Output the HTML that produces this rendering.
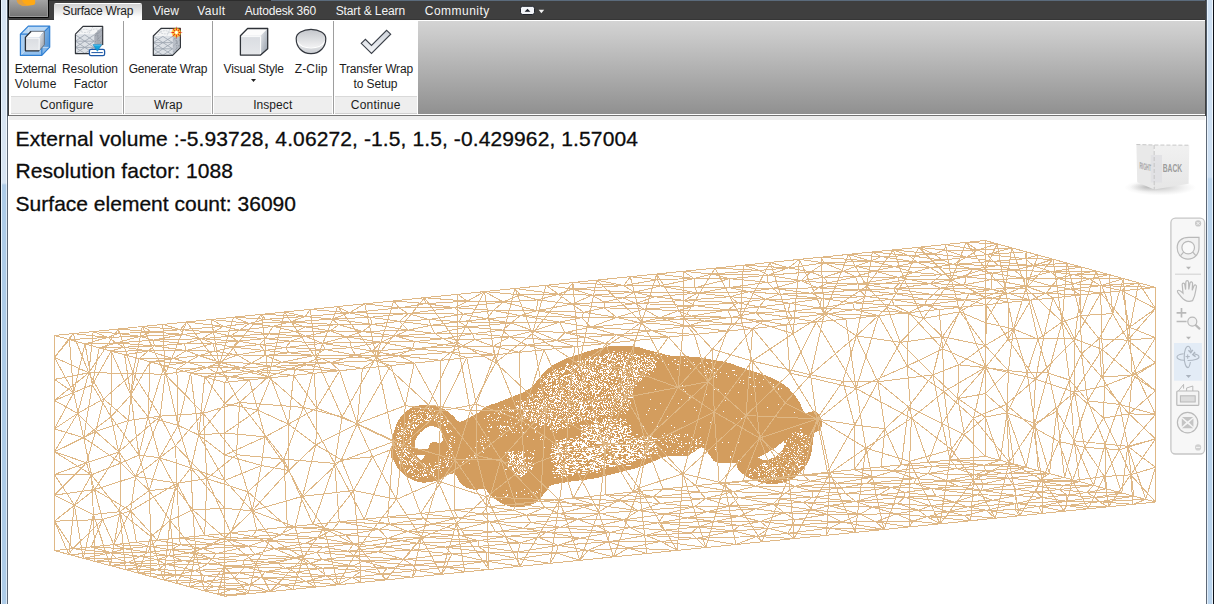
<!DOCTYPE html>
<html lang="en">
<head>
<meta charset="utf-8">
<title>Surface Wrap</title>
<style>
html,body{margin:0;padding:0;}
body{width:1214px;height:604px;overflow:hidden;background:#fff;position:relative;font-family:"Liberation Sans",sans-serif;}
.abs{position:absolute;}
#win{position:absolute;left:0;top:0;width:1214px;height:604px;overflow:hidden;background:#fff;}
/* window frame */
#bl{left:0;top:0;width:7px;height:604px;background:linear-gradient(#d7e4f2 0,#d7e4f2 183px,#aecce8 185px,#aecce8 604px);}
#bl:before{content:"";position:absolute;left:0;top:0;width:1px;height:604px;background:#0e121a;}
#bl:after{content:"";position:absolute;left:1px;top:0;width:1px;height:604px;background:#eaf4fc;}
#bl3{left:6px;top:0;width:1px;height:604px;background:linear-gradient(#f0f6fc 0,#f0f6fc 183px,#dceaf7 185px,#dceaf7 604px);}
#bl2{left:7px;top:0;width:1px;height:604px;background:linear-gradient(#4e5a68 0,#4e5a68 116px,#5d6876 117px,#5d6876 604px);}
#bl4{left:8px;top:0;width:1px;height:116px;background:linear-gradient(#050505 0,#050505 18px,#3f3f3f 18px,#3f3f3f 100%);}
#br{left:1207px;top:0;width:7px;height:604px;background:linear-gradient(#cddff2 0,#cddff2 177px,#b9d3ec 179px,#b9d3ec 604px);}
#br:before{content:"";position:absolute;left:0;top:0;width:1px;height:604px;background:linear-gradient(#e8f2fc 0,#e8f2fc 177px,#e2eefa 179px,#e2eefa 604px);}
#br:after{content:"";position:absolute;right:0;top:0;width:1px;height:604px;background:#0e121a;}
#br3{left:1212px;top:0;width:1px;height:604px;background:linear-gradient(#eef6fd 0,#eef6fd 177px,#e8f3fc 179px,#e8f3fc 604px);}
#br2{left:1206px;top:0;width:1px;height:604px;background:linear-gradient(#4e5a68 0,#4e5a68 116px,#5d6876 117px,#5d6876 604px);}
#br4{left:1205px;top:0;width:1px;height:116px;background:#3f3f3f;}
/* tab bar */
#tabbar{left:8px;top:0;width:1198px;height:20px;background:#3f3f3f;}
#tabtop0{left:49px;top:0;width:222px;height:1px;background:#2c2c2c;}
#tabtop{left:271px;top:0;width:936px;height:1px;background:#5b6b7c;}
#tabbot{left:9px;top:19px;width:1196px;height:1px;background:#363636;}
#appbtn{left:8px;top:0;width:39px;height:17px;background:linear-gradient(#a4a4a4,#737373);border:1px solid #050505;border-top:none;border-radius:0 0 2px 2px;box-shadow:inset 1px 0 0 #9a9a9a,inset -1px 0 0 #9a9a9a,inset 0 -1px 0 #9a9a9a;}
#tab1{left:54px;top:3px;width:88px;height:18px;background:linear-gradient(#ffffff 0,#ffffff 1px,#d4d4d4 1.5px,#dedede 5px,#efefef 10px,#fdfdfd 14px,#ffffff 100%);border-radius:2px 2px 0 0;}
.tabt{position:absolute;top:3px;height:14px;line-height:14px;font-size:12px;color:#f4f4f4;white-space:nowrap;}
/* ribbon */
#ribbon{left:9px;top:20px;width:1196px;height:94px;background:#fff;}
#ribgrad{left:418px;top:21px;width:787px;height:93px;background:linear-gradient(#d4d4d4,#909090);}
#ribline{left:8px;top:115px;width:1198px;height:1px;background:#757575;}
#ribband{left:9px;top:116px;width:1196px;height:4px;background:#eeeeee;}
.ptitle{position:absolute;top:96px;height:18px;background:#eeeeee;border-top:1px solid #d9d9d9;border-bottom:1px solid #d0d0d0;box-sizing:border-box;}
.psep{position:absolute;top:21px;width:1px;height:93px;background:#9e9e9e;}
.lbl{position:absolute;font-size:12px;line-height:15px;color:#1c1c1c;white-space:nowrap;text-align:center;transform:translateX(-50%);}
.tx{position:absolute;white-space:pre;}
</style>
</head>
<body>
<div id="win">
<!-- viewport scene -->
<svg class="abs" id="scene" style="left:0;top:0" width="1214" height="604" viewBox="0 0 1214 604">
<g id="car">
<path d="M391.2 457.1C390.9 454.6 391.4 448.8 391.8 444.7C392.2 440.6 392.8 436.0 393.7 432.3C394.6 428.6 395.8 425.4 397.4 422.3C399.0 419.2 401.1 416.1 403.6 413.6C406.1 411.1 409.2 408.8 412.3 407.4C415.4 405.9 419.0 405.3 422.3 404.9C425.6 404.5 429.1 404.8 432.2 405.2C435.3 405.6 438.2 406.3 440.9 407.4C443.6 408.5 446.0 410.1 448.3 411.8C450.6 413.5 452.7 415.8 454.5 417.4C456.3 419.0 457.0 421.3 458.9 421.7C460.8 422.1 463.5 420.7 465.7 419.8C467.9 418.9 469.6 417.3 471.9 416.1C474.2 414.9 477.2 413.9 479.4 412.4C481.6 410.8 482.0 408.4 485.0 406.8C488.0 405.2 493.3 404.2 497.4 402.7C501.5 401.2 505.7 399.4 509.8 397.7C514.0 396.0 519.0 394.2 522.3 392.7C525.6 391.1 527.4 390.1 529.7 388.4C532.0 386.6 533.8 384.5 535.9 382.2C538.0 379.9 540.0 377.0 542.1 374.7C544.2 372.4 546.2 370.2 548.3 368.5C550.4 366.8 551.8 365.8 554.5 364.2C557.2 362.6 560.8 360.8 564.5 359.2C568.2 357.6 572.5 356.3 576.9 354.9C581.2 353.4 586.2 351.8 590.6 350.5C595.0 349.2 598.9 348.2 603.0 347.4C607.1 346.6 610.1 345.8 615.4 345.6C620.7 345.5 629.7 345.8 635.0 346.5C640.3 347.2 643.3 348.8 647.4 349.9C651.5 351.0 655.6 352.0 659.8 353.0C663.9 354.0 667.7 355.5 672.3 356.1C676.9 356.7 682.7 356.2 687.2 356.4C691.8 356.6 695.5 356.8 699.6 357.4C703.7 358.0 707.9 359.1 712.0 359.8C716.1 360.5 720.6 360.8 724.4 361.7C728.2 362.6 731.2 363.7 735.0 365.0C738.8 366.3 743.3 368.1 747.4 369.5C751.5 370.9 755.4 371.8 759.5 373.2C763.6 374.6 767.8 376.0 772.0 378.0C776.2 380.0 781.4 382.6 784.8 385.0C788.1 387.4 790.0 390.1 792.1 392.3C794.2 394.6 795.7 396.4 797.1 398.5C798.5 400.6 799.9 402.8 800.8 404.7C801.7 406.6 801.9 408.3 802.7 409.7C803.5 411.1 804.4 412.5 805.8 412.8C807.1 413.1 809.1 411.8 810.8 411.6C812.4 411.4 814.2 411.1 815.7 411.6C817.2 412.1 818.6 413.4 819.5 414.7C820.4 416.0 820.9 417.8 821.3 419.7C821.7 421.6 822.0 424.0 821.7 425.9C821.4 427.8 820.7 429.7 819.5 430.8C818.3 431.9 815.6 430.8 814.5 432.7C813.4 434.6 813.4 439.3 812.9 442.4C812.4 445.4 812.3 448.1 811.7 451.0C811.1 453.9 810.5 456.8 809.2 459.7C808.0 462.6 806.3 465.7 804.2 468.4C802.1 471.1 799.3 473.8 796.8 475.9C794.3 478.0 792.2 479.6 789.3 480.8C786.4 482.0 782.7 482.8 779.4 483.3C776.1 483.8 772.7 484.2 769.4 484.0C766.1 483.8 762.8 483.0 759.5 482.1C756.2 481.2 752.5 479.8 749.6 478.4C746.7 476.9 744.2 475.2 742.1 473.4C740.0 471.6 738.4 469.6 737.2 467.8C736.0 466.0 738.0 463.6 734.7 462.8C731.4 462.0 721.2 463.7 717.3 462.8C713.4 461.9 713.0 459.4 711.1 457.3C709.2 455.2 707.8 452.1 706.1 450.4C704.4 448.7 703.4 446.9 701.1 447.3C698.8 447.7 695.2 451.4 692.5 452.9C689.8 454.4 689.1 455.6 685.0 456.1C680.9 456.7 671.8 455.9 667.9 456.2C664.0 456.5 664.0 457.2 661.7 458.0C659.4 458.8 656.7 460.1 654.2 461.1C651.7 462.1 650.1 462.9 646.8 464.2C643.5 465.4 638.4 467.4 634.3 468.6C630.1 469.9 626.0 470.7 621.9 471.7C617.8 472.7 613.6 473.8 609.5 474.8C605.4 475.8 601.2 477.1 597.1 477.9C593.0 478.7 589.9 479.1 584.7 479.8C579.5 480.5 571.6 481.4 566.0 482.3C560.4 483.2 554.2 484.2 551.1 485.4C548.0 486.6 549.0 487.7 547.4 489.7C545.8 491.7 543.3 495.0 541.2 497.2C539.1 499.4 538.3 501.4 535.0 503.0C531.7 504.6 525.7 506.5 521.6 507.1C517.5 507.7 513.7 507.1 510.4 506.5C507.1 505.9 504.4 504.8 501.7 503.4C499.0 502.0 496.6 500.2 494.3 498.4C492.0 496.6 489.6 494.4 488.1 492.8C486.7 491.2 487.9 489.6 485.6 489.1C483.3 488.6 477.5 489.9 474.4 489.7C471.3 489.5 469.3 488.8 467.0 487.8C464.7 486.8 462.4 485.2 460.7 483.5C459.0 481.8 458.0 478.9 457.0 477.3C456.0 475.7 455.7 474.1 454.5 473.6C453.3 473.1 451.2 473.7 449.6 474.2C448.0 474.7 446.7 475.7 444.6 476.7C442.5 477.7 439.9 479.5 437.2 480.4C434.5 481.3 431.4 482.0 428.5 482.3C425.6 482.6 422.7 482.8 419.8 482.3C416.9 481.8 413.8 480.5 411.1 479.1C408.4 477.8 405.9 476.1 403.6 474.2C401.3 472.2 399.0 469.8 397.4 467.4C395.8 465.0 394.7 461.6 393.7 459.9C392.7 458.2 391.5 459.6 391.2 457.1Z" fill="#d39d5e" shape-rendering="crispEdges"/>
<path d="M431.6 426.0C432.9 426.2 437.1 427.1 438.4 427.9C439.7 428.7 441.0 430.4 441.5 432.3C442.0 434.2 443.3 440.9 442.1 442.2C440.9 443.5 433.9 441.9 432.2 442.2C430.5 442.5 430.4 443.8 429.7 444.7C429.0 445.6 429.0 448.5 427.2 449.0C425.4 449.5 417.7 449.3 416.0 448.4C414.3 447.5 414.6 443.9 414.8 442.2C415.0 440.5 416.1 437.7 417.3 436.0C418.5 434.3 422.0 431.0 423.5 429.8C425.0 428.6 427.4 427.2 428.5 426.7C429.6 426.2 430.3 425.8 431.6 426.0ZM417.3 455.2L424.7 455.2L423.5 458.3L420.4 460.2L417.5 457.1ZM758.3 457.3C759.3 456.6 764.5 454.3 767.0 452.9C769.5 451.5 774.7 448.3 776.9 446.7C779.1 445.1 782.7 441.2 783.7 441.1C784.7 441.0 784.7 444.6 784.3 446.1C783.9 447.6 781.8 450.9 780.6 452.3C779.4 453.7 777.6 455.5 775.6 456.6C773.6 457.7 767.8 460.1 765.7 460.4C763.6 460.7 760.5 458.9 759.5 458.5C758.5 458.1 757.3 458.0 758.3 457.3Z" fill="#fff" shape-rendering="crispEdges"/>
<path d="M613 351.5h2M622 351.5h1M619 352.5h1M626 352.5h1M608 353.5h1M612 353.5h2M617 353.5h1M622 353.5h1M629 353.5h1M644 353.5h1M654 353.5h1M657 353.5h1M605 354.5h3M610 354.5h1M612 354.5h1M617 354.5h1M619 354.5h2M625 354.5h2M632 354.5h1M634 354.5h2M650 354.5h1M604 355.5h1M606 355.5h2M609 355.5h2M612 355.5h1M614 355.5h2M621 355.5h2M625 355.5h1M628 355.5h1M631 355.5h1M633 355.5h1M637 355.5h1M641 355.5h2M645 355.5h1M661 355.5h1M589 356.5h1M596 356.5h1M599 356.5h1M603 356.5h1M605 356.5h1M608 356.5h1M611 356.5h2M614 356.5h2M621 356.5h1M627 356.5h2M632 356.5h1M634 356.5h6M649 356.5h1M660 356.5h1M667 356.5h1M590 357.5h1M594 357.5h2M599 357.5h3M603 357.5h2M608 357.5h1M611 357.5h1M613 357.5h1M615 357.5h1M618 357.5h2M621 357.5h1M623 357.5h1M628 357.5h1M630 357.5h1M636 357.5h1M639 357.5h1M644 357.5h1M647 357.5h3M651 357.5h2M657 357.5h1M585 358.5h1M589 358.5h1M594 358.5h1M596 358.5h1M600 358.5h1M607 358.5h2M610 358.5h1M616 358.5h2M622 358.5h2M635 358.5h1M641 358.5h1M644 358.5h2M658 358.5h1M684 358.5h1M580 359.5h1M587 359.5h1M590 359.5h1M593 359.5h1M599 359.5h3M607 359.5h4M617 359.5h1M619 359.5h1M621 359.5h2M626 359.5h2M636 359.5h1M641 359.5h2M645 359.5h3M649 359.5h1M652 359.5h2M674 359.5h2M582 360.5h1M586 360.5h2M589 360.5h5M596 360.5h2M599 360.5h2M605 360.5h1M609 360.5h1M611 360.5h4M616 360.5h1M623 360.5h1M625 360.5h1M631 360.5h1M633 360.5h1M638 360.5h2M645 360.5h1M647 360.5h1M650 360.5h2M653 360.5h2M573 361.5h3M577 361.5h2M580 361.5h1M582 361.5h1M585 361.5h1M589 361.5h1M591 361.5h2M596 361.5h1M598 361.5h3M604 361.5h1M607 361.5h1M614 361.5h2M623 361.5h1M626 361.5h2M630 361.5h1M632 361.5h1M636 361.5h1M638 361.5h1M642 361.5h2M645 361.5h1M648 361.5h3M655 361.5h2M662 361.5h1M672 361.5h1M678 361.5h1M687 361.5h1M576 362.5h1M579 362.5h2M582 362.5h1M585 362.5h1M589 362.5h1M593 362.5h1M596 362.5h1M599 362.5h2M602 362.5h1M606 362.5h1M618 362.5h2M621 362.5h1M623 362.5h3M631 362.5h4M636 362.5h1M638 362.5h1M641 362.5h1M647 362.5h1M650 362.5h3M655 362.5h1M684 362.5h1M693 362.5h1M706 362.5h1M711 362.5h1M567 363.5h1M577 363.5h1M579 363.5h1M583 363.5h1M585 363.5h1M591 363.5h1M593 363.5h1M595 363.5h2M601 363.5h5M607 363.5h1M611 363.5h2M614 363.5h1M617 363.5h3M621 363.5h2M624 363.5h2M633 363.5h1M636 363.5h1M639 363.5h1M641 363.5h1M652 363.5h1M675 363.5h1M700 363.5h1M707 363.5h1M566 364.5h3M578 364.5h1M580 364.5h1M583 364.5h1M585 364.5h1M589 364.5h1M592 364.5h1M596 364.5h3M607 364.5h1M609 364.5h2M612 364.5h1M616 364.5h1M620 364.5h1M624 364.5h3M633 364.5h1M637 364.5h2M640 364.5h2M644 364.5h1M646 364.5h2M650 364.5h1M652 364.5h3M668 364.5h1M677 364.5h2M692 364.5h1M694 364.5h1M567 365.5h1M571 365.5h1M574 365.5h2M582 365.5h1M585 365.5h1M587 365.5h2M593 365.5h1M595 365.5h2M601 365.5h2M607 365.5h4M613 365.5h2M620 365.5h2M624 365.5h1M628 365.5h3M632 365.5h1M634 365.5h3M638 365.5h2M642 365.5h1M644 365.5h1M648 365.5h1M651 365.5h1M654 365.5h1M665 365.5h1M684 365.5h1M686 365.5h2M566 366.5h1M572 366.5h2M575 366.5h2M579 366.5h3M584 366.5h1M587 366.5h1M589 366.5h1M595 366.5h1M598 366.5h1M600 366.5h2M603 366.5h1M607 366.5h3M611 366.5h1M623 366.5h2M626 366.5h1M629 366.5h1M631 366.5h1M633 366.5h3M637 366.5h1M639 366.5h1M641 366.5h1M643 366.5h1M645 366.5h1M649 366.5h2M653 366.5h1M655 366.5h1M704 366.5h1M712 366.5h1M720 366.5h1M561 367.5h1M565 367.5h1M569 367.5h1M573 367.5h3M580 367.5h3M584 367.5h2M588 367.5h1M590 367.5h1M592 367.5h2M595 367.5h1M602 367.5h2M605 367.5h1M607 367.5h2M610 367.5h2M614 367.5h1M617 367.5h2M620 367.5h1M623 367.5h5M629 367.5h2M634 367.5h1M638 367.5h2M645 367.5h1M647 367.5h2M651 367.5h3M655 367.5h1M700 367.5h1M559 368.5h1M565 368.5h3M571 368.5h1M574 368.5h1M576 368.5h1M578 368.5h1M581 368.5h1M589 368.5h2M592 368.5h1M597 368.5h1M603 368.5h4M608 368.5h1M610 368.5h1M614 368.5h1M620 368.5h2M626 368.5h2M630 368.5h1M632 368.5h1M637 368.5h1M643 368.5h1M652 368.5h1M690 368.5h1M708 368.5h1M714 368.5h1M555 369.5h1M565 369.5h1M567 369.5h4M575 369.5h1M577 369.5h2M581 369.5h1M583 369.5h5M592 369.5h2M600 369.5h3M609 369.5h1M611 369.5h1M618 369.5h1M622 369.5h3M633 369.5h2M637 369.5h1M640 369.5h2M644 369.5h2M647 369.5h4M652 369.5h1M677 369.5h1M697 369.5h1M710 369.5h1M712 369.5h1M717 369.5h1M554 370.5h1M557 370.5h1M562 370.5h3M569 370.5h1M571 370.5h1M577 370.5h1M581 370.5h5M587 370.5h4M593 370.5h1M595 370.5h1M598 370.5h1M600 370.5h1M604 370.5h1M606 370.5h3M610 370.5h2M614 370.5h1M620 370.5h1M623 370.5h1M625 370.5h1M632 370.5h2M635 370.5h3M640 370.5h3M644 370.5h1M646 370.5h1M648 370.5h1M651 370.5h1M706 370.5h1M711 370.5h1M732 370.5h3M552 371.5h1M554 371.5h1M556 371.5h2M560 371.5h2M563 371.5h2M570 371.5h1M573 371.5h1M578 371.5h2M582 371.5h1M584 371.5h2M587 371.5h2M590 371.5h2M598 371.5h1M600 371.5h3M606 371.5h3M610 371.5h1M613 371.5h1M615 371.5h2M619 371.5h1M621 371.5h1M623 371.5h4M629 371.5h2M634 371.5h4M643 371.5h2M653 371.5h1M555 372.5h1M557 372.5h1M559 372.5h1M561 372.5h3M572 372.5h1M579 372.5h2M584 372.5h1M586 372.5h1M590 372.5h6M599 372.5h4M604 372.5h2M607 372.5h3M612 372.5h2M615 372.5h1M619 372.5h3M628 372.5h1M630 372.5h1M633 372.5h1M636 372.5h1M638 372.5h1M642 372.5h1M645 372.5h2M704 372.5h2M707 372.5h1M709 372.5h1M711 372.5h1M714 372.5h1M720 372.5h1M549 373.5h1M553 373.5h1M555 373.5h1M562 373.5h1M574 373.5h1M576 373.5h1M579 373.5h1M582 373.5h1M586 373.5h2M589 373.5h1M591 373.5h1M593 373.5h3M597 373.5h1M602 373.5h1M608 373.5h1M614 373.5h1M619 373.5h3M625 373.5h2M631 373.5h1M633 373.5h2M636 373.5h1M638 373.5h1M642 373.5h1M645 373.5h1M648 373.5h1M726 373.5h1M749 373.5h1M547 374.5h1M549 374.5h1M553 374.5h2M556 374.5h3M568 374.5h3M573 374.5h1M576 374.5h1M580 374.5h1M582 374.5h1M585 374.5h2M588 374.5h2M591 374.5h3M596 374.5h1M598 374.5h1M602 374.5h1M604 374.5h1M606 374.5h2M614 374.5h2M621 374.5h1M623 374.5h2M627 374.5h1M633 374.5h2M636 374.5h1M649 374.5h1M734 374.5h1M757 374.5h1M548 375.5h3M552 375.5h3M560 375.5h1M564 375.5h5M572 375.5h3M583 375.5h1M587 375.5h1M590 375.5h1M592 375.5h1M594 375.5h1M597 375.5h1M600 375.5h1M603 375.5h2M608 375.5h1M611 375.5h5M619 375.5h1M621 375.5h1M623 375.5h1M625 375.5h1M627 375.5h1M632 375.5h1M634 375.5h2M637 375.5h4M705 375.5h1M716 375.5h1M736 375.5h1M543 376.5h1M547 376.5h1M555 376.5h1M558 376.5h1M563 376.5h2M566 376.5h1M571 376.5h1M574 376.5h1M576 376.5h1M578 376.5h1M582 376.5h2M586 376.5h4M594 376.5h1M596 376.5h1M602 376.5h1M605 376.5h1M607 376.5h1M609 376.5h2M615 376.5h1M617 376.5h3M621 376.5h2M624 376.5h4M634 376.5h4M642 376.5h1M644 376.5h1M714 376.5h1M728 376.5h1M740 376.5h1M548 377.5h1M550 377.5h1M553 377.5h5M561 377.5h2M569 377.5h2M572 377.5h4M579 377.5h1M582 377.5h3M587 377.5h1M589 377.5h2M592 377.5h1M601 377.5h3M606 377.5h2M611 377.5h1M613 377.5h1M618 377.5h1M621 377.5h1M623 377.5h1M625 377.5h1M627 377.5h1M630 377.5h3M639 377.5h1M716 377.5h1M749 377.5h2M541 378.5h1M544 378.5h1M547 378.5h1M551 378.5h2M555 378.5h3M560 378.5h4M566 378.5h1M568 378.5h1M573 378.5h2M576 378.5h1M579 378.5h1M582 378.5h3M587 378.5h1M593 378.5h1M596 378.5h1M598 378.5h1M601 378.5h1M603 378.5h1M606 378.5h1M611 378.5h3M624 378.5h2M627 378.5h3M632 378.5h1M634 378.5h3M639 378.5h3M755 378.5h1M543 379.5h1M545 379.5h2M551 379.5h1M553 379.5h1M562 379.5h1M564 379.5h1M566 379.5h2M571 379.5h3M576 379.5h1M584 379.5h1M586 379.5h4M593 379.5h1M599 379.5h1M601 379.5h2M607 379.5h2M616 379.5h2M622 379.5h3M632 379.5h1M636 379.5h1M638 379.5h2M641 379.5h1M763 379.5h1M544 380.5h4M550 380.5h2M553 380.5h1M556 380.5h3M560 380.5h1M565 380.5h5M571 380.5h1M573 380.5h5M582 380.5h3M586 380.5h2M590 380.5h2M595 380.5h2M599 380.5h1M604 380.5h3M608 380.5h2M619 380.5h1M622 380.5h1M624 380.5h1M627 380.5h2M635 380.5h1M638 380.5h1M640 380.5h1M740 380.5h1M743 380.5h1M543 381.5h1M545 381.5h1M547 381.5h1M549 381.5h3M556 381.5h1M560 381.5h1M562 381.5h1M567 381.5h1M569 381.5h1M572 381.5h1M574 381.5h2M578 381.5h1M580 381.5h1M582 381.5h1M584 381.5h1M592 381.5h2M595 381.5h1M597 381.5h1M600 381.5h2M608 381.5h1M611 381.5h2M616 381.5h1M619 381.5h1M624 381.5h1M627 381.5h2M630 381.5h1M632 381.5h1M638 381.5h1M754 381.5h1M546 382.5h2M556 382.5h2M562 382.5h1M565 382.5h1M569 382.5h2M572 382.5h2M575 382.5h1M577 382.5h1M580 382.5h1M582 382.5h1M585 382.5h1M590 382.5h2M593 382.5h1M595 382.5h3M603 382.5h1M612 382.5h1M615 382.5h2M625 382.5h2M628 382.5h3M633 382.5h1M635 382.5h1M739 382.5h1M759 382.5h1M770 382.5h1M540 383.5h1M542 383.5h1M546 383.5h1M551 383.5h1M556 383.5h1M561 383.5h1M565 383.5h1M569 383.5h1M572 383.5h1M575 383.5h2M579 383.5h1M581 383.5h1M583 383.5h2M586 383.5h2M591 383.5h2M594 383.5h1M597 383.5h1M599 383.5h1M602 383.5h1M604 383.5h2M609 383.5h1M619 383.5h1M623 383.5h2M628 383.5h2M633 383.5h1M743 383.5h1M547 384.5h1M549 384.5h3M558 384.5h1M560 384.5h1M564 384.5h1M568 384.5h1M570 384.5h1M573 384.5h1M577 384.5h1M581 384.5h2M585 384.5h2M589 384.5h1M592 384.5h1M594 384.5h1M598 384.5h4M604 384.5h3M613 384.5h1M618 384.5h1M620 384.5h2M623 384.5h1M630 384.5h1M632 384.5h2M750 384.5h1M773 384.5h1M545 385.5h2M548 385.5h2M554 385.5h1M556 385.5h3M561 385.5h1M563 385.5h1M566 385.5h4M572 385.5h1M574 385.5h1M578 385.5h2M581 385.5h1M583 385.5h1M595 385.5h1M598 385.5h2M601 385.5h2M604 385.5h2M607 385.5h1M610 385.5h1M612 385.5h1M615 385.5h1M617 385.5h1M625 385.5h2M628 385.5h2M631 385.5h1M635 385.5h2M682 385.5h1M551 386.5h1M553 386.5h4M558 386.5h1M560 386.5h1M562 386.5h1M566 386.5h1M569 386.5h1M571 386.5h1M575 386.5h1M577 386.5h1M579 386.5h1M581 386.5h1M584 386.5h2M590 386.5h1M592 386.5h3M600 386.5h1M606 386.5h2M611 386.5h1M614 386.5h1M618 386.5h2M622 386.5h1M624 386.5h1M627 386.5h1M633 386.5h1M753 386.5h1M755 386.5h1M762 386.5h1M773 386.5h1M543 387.5h2M547 387.5h1M549 387.5h1M551 387.5h1M553 387.5h1M555 387.5h2M559 387.5h1M561 387.5h4M568 387.5h1M570 387.5h1M573 387.5h1M576 387.5h1M578 387.5h5M591 387.5h2M594 387.5h2M598 387.5h1M601 387.5h2M604 387.5h1M606 387.5h3M612 387.5h1M614 387.5h1M616 387.5h1M618 387.5h2M621 387.5h2M624 387.5h2M628 387.5h1M631 387.5h1M633 387.5h1M643 387.5h1M538 388.5h1M542 388.5h1M546 388.5h1M548 388.5h1M557 388.5h1M565 388.5h1M567 388.5h1M569 388.5h2M575 388.5h1M579 388.5h1M582 388.5h1M587 388.5h1M590 388.5h1M593 388.5h1M597 388.5h1M601 388.5h1M606 388.5h1M610 388.5h1M613 388.5h4M623 388.5h1M627 388.5h1M778 388.5h1M781 388.5h1M539 389.5h2M544 389.5h1M550 389.5h2M555 389.5h2M562 389.5h1M566 389.5h1M568 389.5h3M575 389.5h1M577 389.5h1M582 389.5h1M585 389.5h2M591 389.5h1M593 389.5h2M600 389.5h1M604 389.5h1M610 389.5h2M613 389.5h1M615 389.5h1M619 389.5h1M623 389.5h2M632 389.5h1M655 389.5h1M683 389.5h1M714 389.5h1M718 389.5h1M778 389.5h1M544 390.5h1M550 390.5h1M555 390.5h1M557 390.5h1M560 390.5h2M563 390.5h1M569 390.5h4M574 390.5h4M581 390.5h1M584 390.5h1M586 390.5h1M590 390.5h3M594 390.5h3M598 390.5h3M608 390.5h1M616 390.5h1M619 390.5h1M621 390.5h1M623 390.5h1M625 390.5h2M628 390.5h1M631 390.5h1M538 391.5h1M540 391.5h2M545 391.5h2M548 391.5h2M551 391.5h1M556 391.5h1M562 391.5h2M568 391.5h1M571 391.5h1M574 391.5h1M577 391.5h2M580 391.5h1M582 391.5h3M589 391.5h1M592 391.5h1M594 391.5h1M598 391.5h2M602 391.5h1M607 391.5h1M612 391.5h1M615 391.5h2M618 391.5h1M621 391.5h3M628 391.5h3M632 391.5h1M685 391.5h1M537 392.5h2M541 392.5h1M546 392.5h1M550 392.5h2M554 392.5h1M556 392.5h1M561 392.5h2M565 392.5h1M569 392.5h1M572 392.5h1M574 392.5h1M578 392.5h1M584 392.5h2M588 392.5h1M592 392.5h3M597 392.5h2M604 392.5h1M606 392.5h1M608 392.5h3M612 392.5h1M614 392.5h1M616 392.5h2M619 392.5h1M621 392.5h1M624 392.5h1M628 392.5h1M630 392.5h1M632 392.5h1M738 392.5h1M547 393.5h1M549 393.5h3M553 393.5h1M555 393.5h1M557 393.5h2M560 393.5h4M568 393.5h1M571 393.5h1M574 393.5h3M579 393.5h1M586 393.5h1M592 393.5h1M595 393.5h4M606 393.5h1M608 393.5h1M610 393.5h1M615 393.5h1M618 393.5h1M623 393.5h3M630 393.5h1M725 393.5h1M532 394.5h1M535 394.5h1M537 394.5h1M539 394.5h2M542 394.5h1M549 394.5h1M553 394.5h2M558 394.5h1M560 394.5h1M566 394.5h1M569 394.5h1M571 394.5h3M577 394.5h1M582 394.5h1M588 394.5h1M592 394.5h1M595 394.5h1M602 394.5h1M604 394.5h2M611 394.5h1M615 394.5h1M618 394.5h3M624 394.5h1M626 394.5h3M631 394.5h1M706 394.5h1M751 394.5h1M532 395.5h1M538 395.5h2M541 395.5h1M550 395.5h1M556 395.5h1M559 395.5h2M562 395.5h1M565 395.5h1M571 395.5h1M576 395.5h1M578 395.5h1M580 395.5h1M582 395.5h1M587 395.5h3M595 395.5h1M601 395.5h1M614 395.5h1M616 395.5h2M619 395.5h2M624 395.5h1M626 395.5h1M629 395.5h1M633 395.5h1M530 396.5h2M539 396.5h1M545 396.5h1M547 396.5h1M553 396.5h2M556 396.5h2M560 396.5h1M562 396.5h4M567 396.5h2M570 396.5h1M574 396.5h1M579 396.5h1M581 396.5h1M583 396.5h1M585 396.5h1M589 396.5h1M591 396.5h1M595 396.5h2M603 396.5h1M605 396.5h1M609 396.5h1M611 396.5h2M615 396.5h1M617 396.5h2M621 396.5h2M628 396.5h1M633 396.5h1M527 397.5h1M540 397.5h1M542 397.5h1M549 397.5h5M556 397.5h1M558 397.5h3M566 397.5h1M568 397.5h1M573 397.5h1M579 397.5h2M585 397.5h1M594 397.5h1M598 397.5h2M601 397.5h3M605 397.5h1M608 397.5h2M612 397.5h1M614 397.5h1M616 397.5h1M618 397.5h1M621 397.5h1M628 397.5h5M689 397.5h1M528 398.5h1M535 398.5h3M539 398.5h1M541 398.5h1M543 398.5h1M546 398.5h1M549 398.5h1M552 398.5h1M554 398.5h1M559 398.5h2M565 398.5h2M569 398.5h1M572 398.5h2M577 398.5h2M582 398.5h1M587 398.5h1M589 398.5h1M594 398.5h1M596 398.5h1M598 398.5h2M602 398.5h1M610 398.5h5M616 398.5h1M619 398.5h1M621 398.5h2M529 399.5h1M534 399.5h1M537 399.5h1M545 399.5h1M547 399.5h1M550 399.5h3M555 399.5h2M560 399.5h1M562 399.5h1M566 399.5h2M569 399.5h2M572 399.5h1M575 399.5h2M582 399.5h1M592 399.5h1M597 399.5h1M599 399.5h2M602 399.5h1M604 399.5h1M612 399.5h2M616 399.5h1M618 399.5h1M621 399.5h1M625 399.5h1M650 399.5h1M681 399.5h1M521 400.5h1M529 400.5h1M533 400.5h1M538 400.5h1M543 400.5h3M555 400.5h5M563 400.5h1M571 400.5h1M573 400.5h5M579 400.5h1M581 400.5h1M589 400.5h1M593 400.5h3M606 400.5h1M612 400.5h1M617 400.5h1M620 400.5h2M623 400.5h3M628 400.5h2M725 400.5h1M516 401.5h1M518 401.5h1M524 401.5h2M529 401.5h3M537 401.5h1M540 401.5h1M543 401.5h1M546 401.5h1M548 401.5h1M551 401.5h1M554 401.5h3M558 401.5h3M563 401.5h2M566 401.5h1M569 401.5h1M573 401.5h1M576 401.5h1M578 401.5h1M580 401.5h3M588 401.5h2M593 401.5h1M600 401.5h2M603 401.5h1M605 401.5h1M608 401.5h1M610 401.5h1M612 401.5h2M620 401.5h1M622 401.5h1M628 401.5h1M522 402.5h2M529 402.5h1M535 402.5h2M538 402.5h1M543 402.5h1M545 402.5h1M548 402.5h3M554 402.5h1M557 402.5h1M562 402.5h1M565 402.5h2M571 402.5h1M573 402.5h1M577 402.5h1M579 402.5h4M585 402.5h1M588 402.5h1M592 402.5h1M595 402.5h2M598 402.5h2M603 402.5h1M608 402.5h1M610 402.5h1M614 402.5h1M621 402.5h1M624 402.5h1M626 402.5h1M630 402.5h1M520 403.5h1M522 403.5h2M531 403.5h2M534 403.5h2M537 403.5h2M542 403.5h1M544 403.5h2M548 403.5h2M551 403.5h3M562 403.5h1M565 403.5h1M568 403.5h2M575 403.5h1M579 403.5h4M585 403.5h2M592 403.5h1M597 403.5h2M603 403.5h5M609 403.5h1M613 403.5h1M615 403.5h1M617 403.5h1M619 403.5h1M621 403.5h1M630 403.5h1M660 403.5h1M678 403.5h1M520 404.5h2M523 404.5h1M525 404.5h1M528 404.5h3M532 404.5h1M535 404.5h1M539 404.5h1M541 404.5h2M546 404.5h1M549 404.5h1M554 404.5h2M557 404.5h1M559 404.5h1M561 404.5h1M567 404.5h2M574 404.5h1M578 404.5h1M581 404.5h1M584 404.5h1M590 404.5h3M594 404.5h1M598 404.5h1M601 404.5h1M607 404.5h1M610 404.5h2M613 404.5h1M618 404.5h1M620 404.5h3M627 404.5h1M778 404.5h1M504 405.5h1M517 405.5h1M520 405.5h1M523 405.5h1M537 405.5h2M541 405.5h1M543 405.5h2M546 405.5h1M550 405.5h1M552 405.5h1M554 405.5h2M558 405.5h1M560 405.5h1M563 405.5h1M567 405.5h4M572 405.5h1M574 405.5h2M578 405.5h1M580 405.5h2M584 405.5h5M590 405.5h1M592 405.5h4M597 405.5h1M601 405.5h2M604 405.5h1M607 405.5h1M610 405.5h1M616 405.5h1M621 405.5h2M625 405.5h1M627 405.5h1M516 406.5h3M520 406.5h2M531 406.5h2M534 406.5h1M536 406.5h1M538 406.5h1M541 406.5h1M543 406.5h1M545 406.5h1M550 406.5h1M555 406.5h2M560 406.5h1M564 406.5h1M568 406.5h3M572 406.5h1M577 406.5h1M580 406.5h3M584 406.5h1M586 406.5h1M593 406.5h2M597 406.5h3M602 406.5h1M604 406.5h2M608 406.5h1M610 406.5h1M612 406.5h1M617 406.5h1M620 406.5h2M628 406.5h1M498 407.5h1M505 407.5h1M509 407.5h1M518 407.5h1M521 407.5h1M523 407.5h1M526 407.5h2M529 407.5h1M532 407.5h1M534 407.5h1M538 407.5h1M540 407.5h4M546 407.5h1M551 407.5h1M553 407.5h3M562 407.5h1M564 407.5h1M566 407.5h1M568 407.5h1M574 407.5h1M580 407.5h4M586 407.5h1M592 407.5h2M596 407.5h1M602 407.5h1M605 407.5h1M619 407.5h1M622 407.5h1M624 407.5h1M626 407.5h1M694 407.5h1M767 407.5h1M420 408.5h2M427 408.5h2M432 408.5h1M507 408.5h1M517 408.5h1M521 408.5h2M524 408.5h1M527 408.5h1M531 408.5h1M537 408.5h1M539 408.5h2M542 408.5h1M548 408.5h2M556 408.5h1M558 408.5h4M567 408.5h1M569 408.5h2M574 408.5h1M576 408.5h2M579 408.5h3M583 408.5h1M585 408.5h1M596 408.5h1M603 408.5h1M607 408.5h1M611 408.5h1M615 408.5h1M618 408.5h1M623 408.5h1M625 408.5h1M649 408.5h1M431 409.5h1M502 409.5h1M509 409.5h1M514 409.5h1M521 409.5h4M526 409.5h1M529 409.5h1M532 409.5h2M537 409.5h4M542 409.5h2M545 409.5h1M549 409.5h2M560 409.5h1M564 409.5h1M566 409.5h2M572 409.5h1M575 409.5h1M580 409.5h1M583 409.5h2M593 409.5h3M599 409.5h1M604 409.5h1M607 409.5h1M609 409.5h1M612 409.5h2M616 409.5h1M621 409.5h1M626 409.5h3M655 409.5h1M412 410.5h1M414 410.5h1M419 410.5h1M429 410.5h1M510 410.5h1M512 410.5h2M523 410.5h1M525 410.5h4M530 410.5h1M532 410.5h1M536 410.5h3M542 410.5h1M544 410.5h2M549 410.5h1M551 410.5h3M556 410.5h1M563 410.5h4M573 410.5h1M575 410.5h1M579 410.5h1M582 410.5h2M586 410.5h2M589 410.5h1M593 410.5h1M596 410.5h2M600 410.5h1M603 410.5h1M605 410.5h2M611 410.5h1M623 410.5h1M627 410.5h1M648 410.5h1M696 410.5h1M418 411.5h1M420 411.5h2M423 411.5h1M430 411.5h1M434 411.5h1M500 411.5h1M509 411.5h1M511 411.5h1M513 411.5h1M520 411.5h1M526 411.5h2M532 411.5h3M537 411.5h2M546 411.5h1M551 411.5h1M554 411.5h2M557 411.5h1M559 411.5h2M562 411.5h1M564 411.5h1M566 411.5h2M570 411.5h1M572 411.5h1M574 411.5h1M576 411.5h4M581 411.5h2M584 411.5h2M588 411.5h1M592 411.5h2M596 411.5h1M599 411.5h1M601 411.5h2M604 411.5h2M607 411.5h3M611 411.5h1M614 411.5h1M618 411.5h1M723 411.5h1M415 412.5h1M417 412.5h1M421 412.5h1M425 412.5h1M427 412.5h1M432 412.5h1M499 412.5h1M501 412.5h1M523 412.5h3M536 412.5h1M538 412.5h1M540 412.5h2M544 412.5h1M546 412.5h1M551 412.5h1M557 412.5h1M559 412.5h1M561 412.5h1M568 412.5h1M571 412.5h1M579 412.5h1M582 412.5h3M588 412.5h2M591 412.5h2M596 412.5h1M601 412.5h1M603 412.5h2M609 412.5h1M615 412.5h2M624 412.5h1M794 412.5h1M412 413.5h1M428 413.5h1M494 413.5h1M498 413.5h1M504 413.5h1M517 413.5h2M523 413.5h1M525 413.5h1M529 413.5h1M531 413.5h1M533 413.5h1M546 413.5h1M548 413.5h4M556 413.5h1M562 413.5h1M564 413.5h1M566 413.5h1M568 413.5h2M575 413.5h2M579 413.5h1M583 413.5h1M589 413.5h1M593 413.5h1M598 413.5h1M602 413.5h1M604 413.5h1M606 413.5h2M611 413.5h1M616 413.5h1M618 413.5h1M621 413.5h1M625 413.5h1M410 414.5h1M422 414.5h1M426 414.5h2M489 414.5h1M499 414.5h1M505 414.5h1M516 414.5h1M524 414.5h2M527 414.5h1M531 414.5h2M535 414.5h3M543 414.5h1M545 414.5h1M550 414.5h1M552 414.5h1M559 414.5h2M566 414.5h1M568 414.5h1M570 414.5h1M572 414.5h1M578 414.5h2M588 414.5h1M591 414.5h3M596 414.5h1M599 414.5h5M605 414.5h1M609 414.5h1M615 414.5h1M646 414.5h1M699 414.5h1M409 415.5h1M413 415.5h3M420 415.5h1M427 415.5h1M429 415.5h2M432 415.5h1M437 415.5h1M487 415.5h2M522 415.5h4M528 415.5h1M531 415.5h2M534 415.5h2M538 415.5h2M542 415.5h1M544 415.5h1M547 415.5h2M550 415.5h2M555 415.5h1M558 415.5h1M562 415.5h1M567 415.5h2M573 415.5h2M577 415.5h1M582 415.5h3M587 415.5h2M590 415.5h1M593 415.5h2M606 415.5h1M610 415.5h1M612 415.5h1M409 416.5h1M412 416.5h1M421 416.5h1M427 416.5h1M429 416.5h2M436 416.5h1M440 416.5h3M511 416.5h2M525 416.5h2M532 416.5h1M534 416.5h1M536 416.5h1M538 416.5h1M543 416.5h3M548 416.5h1M551 416.5h2M556 416.5h3M565 416.5h1M567 416.5h1M569 416.5h1M573 416.5h3M578 416.5h4M587 416.5h1M589 416.5h2M592 416.5h2M596 416.5h1M598 416.5h1M667 416.5h1M404 417.5h1M410 417.5h1M414 417.5h3M418 417.5h1M421 417.5h1M428 417.5h2M431 417.5h1M438 417.5h1M487 417.5h1M491 417.5h1M498 417.5h1M500 417.5h1M516 417.5h1M524 417.5h1M528 417.5h1M531 417.5h1M537 417.5h1M542 417.5h1M545 417.5h1M550 417.5h1M556 417.5h1M559 417.5h2M564 417.5h1M571 417.5h3M580 417.5h3M585 417.5h1M590 417.5h1M593 417.5h1M595 417.5h1M597 417.5h1M601 417.5h1M608 417.5h2M409 418.5h2M415 418.5h1M420 418.5h1M422 418.5h1M427 418.5h1M436 418.5h1M441 418.5h2M484 418.5h1M497 418.5h1M515 418.5h1M522 418.5h1M527 418.5h1M531 418.5h2M534 418.5h2M537 418.5h1M540 418.5h1M544 418.5h2M551 418.5h2M554 418.5h3M560 418.5h1M563 418.5h1M565 418.5h1M568 418.5h4M573 418.5h1M579 418.5h1M581 418.5h1M584 418.5h2M587 418.5h1M605 418.5h1M611 418.5h1M620 418.5h1M736 418.5h1M741 418.5h1M413 419.5h1M417 419.5h3M424 419.5h1M426 419.5h1M430 419.5h2M434 419.5h1M494 419.5h1M510 419.5h1M524 419.5h1M530 419.5h1M532 419.5h1M535 419.5h1M539 419.5h1M541 419.5h3M547 419.5h2M555 419.5h1M558 419.5h4M564 419.5h1M568 419.5h1M571 419.5h1M574 419.5h1M576 419.5h1M581 419.5h1M584 419.5h1M587 419.5h2M590 419.5h1M595 419.5h1M603 419.5h1M605 419.5h2M608 419.5h4M614 419.5h3M620 419.5h2M625 419.5h1M404 420.5h1M416 420.5h1M425 420.5h4M434 420.5h1M447 420.5h1M488 420.5h1M492 420.5h1M496 420.5h1M498 420.5h1M518 420.5h1M520 420.5h1M529 420.5h2M532 420.5h1M534 420.5h3M541 420.5h1M543 420.5h1M547 420.5h1M549 420.5h2M555 420.5h1M560 420.5h1M567 420.5h2M571 420.5h2M576 420.5h1M579 420.5h1M581 420.5h1M591 420.5h1M595 420.5h1M603 420.5h1M606 420.5h1M608 420.5h3M612 420.5h1M619 420.5h2M665 420.5h1M408 421.5h1M413 421.5h1M415 421.5h2M420 421.5h2M436 421.5h1M438 421.5h3M444 421.5h1M447 421.5h2M504 421.5h1M507 421.5h1M530 421.5h1M536 421.5h1M539 421.5h1M542 421.5h3M547 421.5h1M549 421.5h2M552 421.5h3M557 421.5h3M562 421.5h1M566 421.5h3M570 421.5h1M572 421.5h3M579 421.5h1M593 421.5h3M597 421.5h1M603 421.5h1M605 421.5h1M610 421.5h1M613 421.5h5M623 421.5h3M684 421.5h1M400 422.5h1M408 422.5h1M418 422.5h1M420 422.5h1M422 422.5h1M443 422.5h1M507 422.5h1M511 422.5h1M535 422.5h2M541 422.5h1M544 422.5h3M549 422.5h2M553 422.5h2M559 422.5h1M567 422.5h1M572 422.5h1M577 422.5h1M594 422.5h5M602 422.5h1M604 422.5h2M607 422.5h1M610 422.5h2M616 422.5h1M620 422.5h1M622 422.5h1M626 422.5h1M652 422.5h1M710 422.5h1M405 423.5h1M408 423.5h2M440 423.5h2M447 423.5h1M515 423.5h1M532 423.5h1M539 423.5h1M541 423.5h1M548 423.5h3M553 423.5h1M556 423.5h3M560 423.5h1M565 423.5h4M570 423.5h1M597 423.5h1M600 423.5h1M602 423.5h4M620 423.5h1M623 423.5h1M407 424.5h1M413 424.5h1M415 424.5h1M418 424.5h1M444 424.5h2M489 424.5h1M511 424.5h1M525 424.5h1M528 424.5h1M539 424.5h1M541 424.5h3M548 424.5h1M553 424.5h2M556 424.5h1M562 424.5h1M566 424.5h1M573 424.5h1M591 424.5h1M594 424.5h3M601 424.5h1M604 424.5h1M607 424.5h1M610 424.5h4M616 424.5h3M620 424.5h1M400 425.5h1M412 425.5h2M415 425.5h3M444 425.5h2M500 425.5h1M520 425.5h1M531 425.5h1M540 425.5h2M544 425.5h1M547 425.5h2M550 425.5h1M554 425.5h1M559 425.5h1M562 425.5h2M580 425.5h2M583 425.5h2M586 425.5h1M588 425.5h2M591 425.5h3M595 425.5h5M604 425.5h1M606 425.5h3M611 425.5h2M619 425.5h3M629 425.5h2M671 425.5h1M397 426.5h1M409 426.5h1M413 426.5h1M416 426.5h1M491 426.5h1M497 426.5h1M500 426.5h2M503 426.5h3M507 426.5h2M512 426.5h1M536 426.5h1M551 426.5h2M556 426.5h1M562 426.5h3M566 426.5h1M581 426.5h2M585 426.5h1M588 426.5h4M593 426.5h5M599 426.5h4M604 426.5h1M606 426.5h1M609 426.5h2M613 426.5h1M617 426.5h1M620 426.5h1M624 426.5h3M643 426.5h1M657 426.5h1M715 426.5h1M398 427.5h1M401 427.5h1M403 427.5h1M407 427.5h3M413 427.5h2M487 427.5h1M490 427.5h2M500 427.5h1M502 427.5h1M504 427.5h1M509 427.5h1M512 427.5h2M522 427.5h1M529 427.5h1M535 427.5h1M540 427.5h1M553 427.5h1M555 427.5h1M557 427.5h1M559 427.5h2M565 427.5h1M569 427.5h1M586 427.5h2M590 427.5h1M596 427.5h2M601 427.5h2M608 427.5h4M614 427.5h2M617 427.5h3M621 427.5h1M623 427.5h5M629 427.5h1M674 427.5h1M700 427.5h1M401 428.5h2M405 428.5h1M411 428.5h2M414 428.5h1M446 428.5h1M499 428.5h1M501 428.5h1M509 428.5h1M516 428.5h1M522 428.5h1M534 428.5h1M550 428.5h1M552 428.5h1M554 428.5h2M557 428.5h2M562 428.5h1M582 428.5h1M584 428.5h3M594 428.5h2M600 428.5h1M606 428.5h1M608 428.5h1M611 428.5h5M619 428.5h3M623 428.5h1M625 428.5h1M630 428.5h1M800 428.5h2M398 429.5h1M403 429.5h1M407 429.5h1M503 429.5h1M509 429.5h2M550 429.5h1M557 429.5h1M580 429.5h3M586 429.5h2M589 429.5h5M595 429.5h5M602 429.5h1M607 429.5h3M617 429.5h1M619 429.5h2M622 429.5h2M626 429.5h1M629 429.5h1M401 430.5h2M405 430.5h1M408 430.5h1M410 430.5h1M446 430.5h2M450 430.5h1M505 430.5h1M511 430.5h1M516 430.5h1M526 430.5h1M556 430.5h1M584 430.5h2M591 430.5h1M595 430.5h5M605 430.5h5M612 430.5h6M621 430.5h3M625 430.5h2M630 430.5h1M404 431.5h1M410 431.5h1M412 431.5h1M447 431.5h1M449 431.5h1M451 431.5h1M488 431.5h2M500 431.5h1M535 431.5h1M553 431.5h1M582 431.5h1M586 431.5h2M589 431.5h1M591 431.5h1M594 431.5h1M596 431.5h4M604 431.5h1M606 431.5h1M609 431.5h1M612 431.5h2M618 431.5h5M625 431.5h1M630 431.5h2M800 431.5h1M811 431.5h1M399 432.5h1M401 432.5h2M405 432.5h1M411 432.5h1M447 432.5h2M501 432.5h1M512 432.5h1M514 432.5h1M519 432.5h1M523 432.5h1M535 432.5h1M556 432.5h1M581 432.5h1M584 432.5h1M586 432.5h3M590 432.5h2M594 432.5h2M597 432.5h1M599 432.5h1M602 432.5h1M604 432.5h2M610 432.5h5M618 432.5h2M621 432.5h2M625 432.5h1M627 432.5h4M795 432.5h1M397 433.5h2M400 433.5h1M402 433.5h2M406 433.5h1M408 433.5h1M411 433.5h1M484 433.5h1M504 433.5h1M582 433.5h9M596 433.5h2M600 433.5h3M605 433.5h6M614 433.5h3M618 433.5h1M624 433.5h4M664 433.5h1M792 433.5h1M797 433.5h2M801 433.5h2M398 434.5h1M401 434.5h1M403 434.5h2M411 434.5h1M581 434.5h2M584 434.5h3M590 434.5h4M595 434.5h1M598 434.5h3M603 434.5h2M609 434.5h1M611 434.5h1M615 434.5h1M619 434.5h2M622 434.5h1M627 434.5h1M636 434.5h2M671 434.5h1M679 434.5h1M685 434.5h1M687 434.5h1M793 434.5h1M798 434.5h1M800 434.5h3M499 435.5h1M506 435.5h1M581 435.5h1M586 435.5h1M593 435.5h5M600 435.5h2M606 435.5h2M611 435.5h1M613 435.5h1M615 435.5h2M620 435.5h1M623 435.5h3M627 435.5h4M662 435.5h1M667 435.5h1M674 435.5h1M676 435.5h1M687 435.5h1M797 435.5h1M801 435.5h1M805 435.5h2M809 435.5h1M396 436.5h1M404 436.5h1M406 436.5h1M451 436.5h2M482 436.5h1M501 436.5h1M527 436.5h1M541 436.5h1M576 436.5h2M582 436.5h1M587 436.5h1M589 436.5h1M591 436.5h4M597 436.5h5M604 436.5h3M608 436.5h1M614 436.5h2M620 436.5h2M623 436.5h2M632 436.5h2M642 436.5h1M644 436.5h1M646 436.5h2M650 436.5h2M670 436.5h1M675 436.5h1M677 436.5h3M684 436.5h1M792 436.5h1M799 436.5h1M802 436.5h1M804 436.5h1M399 437.5h2M410 437.5h1M454 437.5h1M488 437.5h1M540 437.5h1M580 437.5h2M587 437.5h5M594 437.5h1M596 437.5h1M601 437.5h5M607 437.5h1M614 437.5h5M620 437.5h2M626 437.5h1M631 437.5h1M640 437.5h1M647 437.5h1M649 437.5h1M652 437.5h1M663 437.5h1M669 437.5h1M675 437.5h1M691 437.5h1M700 437.5h1M801 437.5h1M806 437.5h1M809 437.5h1M397 438.5h3M406 438.5h1M450 438.5h1M476 438.5h1M484 438.5h1M497 438.5h1M565 438.5h1M570 438.5h3M578 438.5h1M581 438.5h2M584 438.5h3M588 438.5h1M593 438.5h2M596 438.5h1M599 438.5h9M611 438.5h3M618 438.5h4M624 438.5h6M633 438.5h3M640 438.5h2M647 438.5h1M652 438.5h5M660 438.5h1M666 438.5h1M671 438.5h1M673 438.5h1M699 438.5h1M788 438.5h1M795 438.5h1M808 438.5h1M400 439.5h2M410 439.5h1M451 439.5h1M480 439.5h1M533 439.5h1M540 439.5h1M542 439.5h1M563 439.5h3M573 439.5h1M575 439.5h1M577 439.5h2M583 439.5h7M592 439.5h2M595 439.5h1M600 439.5h4M605 439.5h4M610 439.5h1M612 439.5h7M622 439.5h1M624 439.5h1M631 439.5h5M638 439.5h1M644 439.5h4M651 439.5h1M657 439.5h2M676 439.5h1M693 439.5h1M696 439.5h1M790 439.5h1M803 439.5h2M398 440.5h1M449 440.5h1M454 440.5h1M482 440.5h1M484 440.5h1M487 440.5h1M555 440.5h3M560 440.5h2M566 440.5h1M569 440.5h1M576 440.5h1M585 440.5h2M590 440.5h7M598 440.5h1M600 440.5h5M607 440.5h3M611 440.5h3M615 440.5h1M617 440.5h1M624 440.5h1M627 440.5h6M635 440.5h2M638 440.5h5M645 440.5h1M654 440.5h1M658 440.5h2M665 440.5h1M669 440.5h1M671 440.5h1M677 440.5h1M696 440.5h1M786 440.5h1M800 440.5h1M405 441.5h1M410 441.5h1M450 441.5h1M477 441.5h1M480 441.5h1M551 441.5h2M563 441.5h1M565 441.5h4M570 441.5h2M575 441.5h2M578 441.5h1M580 441.5h2M585 441.5h2M597 441.5h3M601 441.5h1M603 441.5h4M608 441.5h2M611 441.5h5M618 441.5h1M623 441.5h2M626 441.5h2M629 441.5h2M636 441.5h3M640 441.5h7M648 441.5h6M666 441.5h1M672 441.5h1M681 441.5h1M695 441.5h1M700 441.5h2M786 441.5h1M790 441.5h1M792 441.5h1M808 441.5h1M397 442.5h1M400 442.5h1M410 442.5h1M454 442.5h1M482 442.5h1M485 442.5h1M559 442.5h3M563 442.5h3M567 442.5h3M573 442.5h9M583 442.5h1M585 442.5h1M587 442.5h2M592 442.5h1M595 442.5h10M607 442.5h3M611 442.5h8M620 442.5h3M626 442.5h5M634 442.5h1M636 442.5h1M639 442.5h2M642 442.5h1M647 442.5h2M661 442.5h1M672 442.5h1M674 442.5h1M689 442.5h1M696 442.5h1M722 442.5h1M728 442.5h1M738 442.5h1M790 442.5h1M801 442.5h2M397 443.5h1M399 443.5h1M408 443.5h2M557 443.5h1M559 443.5h6M566 443.5h1M572 443.5h4M577 443.5h2M580 443.5h5M587 443.5h1M589 443.5h1M594 443.5h1M596 443.5h6M603 443.5h2M606 443.5h2M611 443.5h7M626 443.5h1M631 443.5h2M634 443.5h3M642 443.5h2M650 443.5h2M653 443.5h2M678 443.5h1M681 443.5h1M685 443.5h2M689 443.5h1M695 443.5h2M699 443.5h2M785 443.5h1M794 443.5h1M803 443.5h1M808 443.5h1M397 444.5h1M399 444.5h2M402 444.5h1M449 444.5h1M552 444.5h1M557 444.5h1M560 444.5h1M567 444.5h2M572 444.5h4M578 444.5h1M582 444.5h4M587 444.5h1M603 444.5h1M606 444.5h3M610 444.5h1M613 444.5h4M618 444.5h1M620 444.5h1M623 444.5h1M625 444.5h2M628 444.5h2M631 444.5h2M638 444.5h1M641 444.5h1M652 444.5h2M656 444.5h1M662 444.5h2M681 444.5h1M691 444.5h1M696 444.5h1M703 444.5h1M785 444.5h1M797 444.5h1M805 444.5h1M809 444.5h1M399 445.5h3M405 445.5h1M410 445.5h1M450 445.5h1M481 445.5h2M554 445.5h1M556 445.5h2M559 445.5h3M573 445.5h2M578 445.5h1M580 445.5h7M589 445.5h1M592 445.5h2M601 445.5h1M604 445.5h7M615 445.5h6M622 445.5h8M631 445.5h1M633 445.5h2M637 445.5h5M646 445.5h1M649 445.5h4M655 445.5h1M666 445.5h1M793 445.5h1M795 445.5h1M805 445.5h2M395 446.5h1M399 446.5h2M402 446.5h1M407 446.5h1M410 446.5h1M449 446.5h1M489 446.5h1M552 446.5h1M555 446.5h1M560 446.5h3M568 446.5h5M574 446.5h3M581 446.5h3M585 446.5h3M596 446.5h1M600 446.5h2M603 446.5h3M611 446.5h2M617 446.5h3M622 446.5h1M627 446.5h1M629 446.5h1M633 446.5h1M637 446.5h1M639 446.5h1M641 446.5h2M645 446.5h1M648 446.5h4M654 446.5h4M667 446.5h1M670 446.5h1M679 446.5h2M683 446.5h1M692 446.5h1M798 446.5h1M801 446.5h2M805 446.5h1M807 446.5h1M411 447.5h1M449 447.5h3M475 447.5h2M483 447.5h1M544 447.5h1M555 447.5h1M557 447.5h3M565 447.5h5M576 447.5h1M579 447.5h1M581 447.5h2M589 447.5h2M592 447.5h3M600 447.5h1M602 447.5h7M611 447.5h10M625 447.5h3M629 447.5h1M632 447.5h2M636 447.5h1M639 447.5h5M646 447.5h1M652 447.5h1M655 447.5h1M667 447.5h1M681 447.5h1M691 447.5h1M695 447.5h2M715 447.5h1M780 447.5h1M786 447.5h2M791 447.5h1M793 447.5h1M798 447.5h1M398 448.5h1M401 448.5h1M404 448.5h4M483 448.5h1M551 448.5h4M558 448.5h1M566 448.5h1M568 448.5h1M574 448.5h5M580 448.5h4M586 448.5h7M594 448.5h1M596 448.5h4M602 448.5h2M605 448.5h1M608 448.5h1M610 448.5h1M617 448.5h6M626 448.5h4M634 448.5h2M638 448.5h1M643 448.5h1M646 448.5h5M677 448.5h1M781 448.5h1M788 448.5h1M792 448.5h1M799 448.5h1M805 448.5h1M395 449.5h2M404 449.5h1M407 449.5h1M410 449.5h1M449 449.5h2M476 449.5h1M484 449.5h1M554 449.5h8M563 449.5h1M565 449.5h1M567 449.5h5M574 449.5h2M582 449.5h1M586 449.5h1M588 449.5h7M597 449.5h2M601 449.5h3M607 449.5h1M612 449.5h2M619 449.5h2M626 449.5h1M628 449.5h2M631 449.5h2M636 449.5h2M640 449.5h2M645 449.5h2M655 449.5h2M661 449.5h1M695 449.5h1M715 449.5h1M778 449.5h1M781 449.5h1M794 449.5h1M798 449.5h1M801 449.5h1M403 450.5h1M405 450.5h1M450 450.5h1M523 450.5h1M527 450.5h1M534 450.5h1M552 450.5h1M557 450.5h4M562 450.5h2M566 450.5h6M573 450.5h1M575 450.5h3M579 450.5h1M582 450.5h2M585 450.5h7M595 450.5h3M600 450.5h3M604 450.5h1M612 450.5h9M622 450.5h2M627 450.5h5M633 450.5h4M641 450.5h7M673 450.5h1M676 450.5h1M692 450.5h1M780 450.5h1M788 450.5h1M798 450.5h1M399 451.5h2M403 451.5h1M405 451.5h2M447 451.5h1M452 451.5h1M482 451.5h1M512 451.5h2M518 451.5h1M522 451.5h1M554 451.5h8M565 451.5h2M587 451.5h1M590 451.5h2M594 451.5h2M597 451.5h7M609 451.5h2M618 451.5h1M622 451.5h1M626 451.5h1M629 451.5h5M643 451.5h1M645 451.5h1M652 451.5h1M656 451.5h2M665 451.5h1M678 451.5h1M684 451.5h1M688 451.5h1M692 451.5h1M732 451.5h1M779 451.5h1M790 451.5h1M794 451.5h1M797 451.5h1M799 451.5h2M807 451.5h1M396 452.5h1M402 452.5h1M407 452.5h2M410 452.5h1M413 452.5h1M446 452.5h1M451 452.5h1M483 452.5h1M505 452.5h1M508 452.5h3M512 452.5h1M520 452.5h1M522 452.5h1M524 452.5h1M530 452.5h1M555 452.5h4M561 452.5h2M565 452.5h2M568 452.5h1M573 452.5h3M577 452.5h4M582 452.5h3M586 452.5h3M591 452.5h2M595 452.5h4M602 452.5h2M605 452.5h1M612 452.5h3M617 452.5h2M621 452.5h1M624 452.5h3M631 452.5h6M638 452.5h2M642 452.5h2M648 452.5h1M650 452.5h2M654 452.5h1M672 452.5h1M676 452.5h1M775 452.5h1M781 452.5h2M785 452.5h1M787 452.5h2M797 452.5h1M398 453.5h2M404 453.5h2M408 453.5h2M451 453.5h1M509 453.5h1M512 453.5h1M518 453.5h1M522 453.5h1M532 453.5h2M551 453.5h5M569 453.5h2M574 453.5h1M581 453.5h5M589 453.5h2M598 453.5h4M605 453.5h1M612 453.5h1M615 453.5h15M631 453.5h1M638 453.5h2M643 453.5h1M645 453.5h7M654 453.5h4M780 453.5h1M786 453.5h1M793 453.5h1M798 453.5h1M802 453.5h2M397 454.5h1M405 454.5h2M446 454.5h1M449 454.5h1M508 454.5h2M511 454.5h1M513 454.5h1M516 454.5h1M521 454.5h3M533 454.5h1M550 454.5h2M555 454.5h1M562 454.5h1M567 454.5h1M571 454.5h4M576 454.5h3M583 454.5h3M590 454.5h1M592 454.5h2M595 454.5h6M605 454.5h3M615 454.5h3M621 454.5h3M628 454.5h3M632 454.5h2M635 454.5h2M639 454.5h3M647 454.5h2M682 454.5h1M773 454.5h1M777 454.5h1M784 454.5h1M789 454.5h1M794 454.5h1M404 455.5h1M406 455.5h1M415 455.5h1M469 455.5h1M474 455.5h1M509 455.5h2M512 455.5h4M517 455.5h1M519 455.5h5M555 455.5h4M562 455.5h3M566 455.5h3M572 455.5h1M576 455.5h1M581 455.5h1M584 455.5h3M589 455.5h7M606 455.5h1M611 455.5h1M615 455.5h3M628 455.5h6M636 455.5h6M776 455.5h1M778 455.5h1M783 455.5h1M791 455.5h1M795 455.5h1M797 455.5h1M800 455.5h2M398 456.5h3M403 456.5h2M407 456.5h1M413 456.5h1M444 456.5h1M449 456.5h1M474 456.5h1M510 456.5h1M512 456.5h2M517 456.5h1M519 456.5h2M522 456.5h1M551 456.5h9M562 456.5h1M564 456.5h1M572 456.5h1M580 456.5h3M586 456.5h6M597 456.5h2M602 456.5h1M605 456.5h1M608 456.5h3M614 456.5h5M621 456.5h2M626 456.5h4M639 456.5h6M730 456.5h1M771 456.5h4M779 456.5h1M803 456.5h1M805 456.5h1M399 457.5h1M408 457.5h1M410 457.5h1M413 457.5h2M448 457.5h1M451 457.5h1M471 457.5h1M475 457.5h1M507 457.5h1M511 457.5h3M515 457.5h1M518 457.5h1M522 457.5h1M525 457.5h1M528 457.5h1M530 457.5h1M533 457.5h1M554 457.5h1M557 457.5h2M560 457.5h2M564 457.5h2M567 457.5h1M569 457.5h4M577 457.5h1M579 457.5h3M584 457.5h7M592 457.5h4M600 457.5h2M604 457.5h1M608 457.5h5M614 457.5h1M626 457.5h2M629 457.5h1M633 457.5h1M636 457.5h1M640 457.5h1M643 457.5h3M648 457.5h2M730 457.5h1M766 457.5h1M770 457.5h1M775 457.5h1M783 457.5h1M785 457.5h1M791 457.5h2M794 457.5h1M796 457.5h1M400 458.5h1M402 458.5h1M412 458.5h1M415 458.5h2M444 458.5h1M448 458.5h1M466 458.5h2M509 458.5h2M512 458.5h1M519 458.5h2M524 458.5h2M528 458.5h2M532 458.5h1M552 458.5h2M556 458.5h3M561 458.5h2M569 458.5h2M573 458.5h2M576 458.5h1M578 458.5h1M587 458.5h6M595 458.5h6M603 458.5h1M606 458.5h1M610 458.5h1M612 458.5h5M622 458.5h1M626 458.5h3M631 458.5h2M634 458.5h2M637 458.5h3M641 458.5h1M644 458.5h2M779 458.5h1M789 458.5h1M795 458.5h1M803 458.5h1M400 459.5h1M403 459.5h1M411 459.5h2M414 459.5h4M440 459.5h1M470 459.5h1M475 459.5h1M510 459.5h1M512 459.5h3M519 459.5h1M521 459.5h4M531 459.5h1M557 459.5h2M562 459.5h1M566 459.5h10M577 459.5h7M585 459.5h2M588 459.5h2M592 459.5h3M596 459.5h2M599 459.5h2M609 459.5h2M613 459.5h1M617 459.5h2M621 459.5h4M629 459.5h4M634 459.5h1M766 459.5h1M768 459.5h1M772 459.5h1M793 459.5h1M797 459.5h2M402 460.5h1M404 460.5h2M411 460.5h1M413 460.5h1M416 460.5h1M440 460.5h1M445 460.5h1M448 460.5h1M477 460.5h1M510 460.5h3M514 460.5h1M517 460.5h1M519 460.5h3M524 460.5h1M553 460.5h5M560 460.5h1M565 460.5h3M572 460.5h1M574 460.5h1M582 460.5h4M588 460.5h1M595 460.5h4M601 460.5h3M607 460.5h2M610 460.5h13M625 460.5h2M628 460.5h8M738 460.5h1M776 460.5h1M783 460.5h1M786 460.5h1M789 460.5h2M794 460.5h1M796 460.5h1M800 460.5h1M399 461.5h1M406 461.5h1M409 461.5h1M412 461.5h1M415 461.5h1M417 461.5h2M443 461.5h1M446 461.5h1M451 461.5h1M463 461.5h1M508 461.5h1M510 461.5h1M515 461.5h1M517 461.5h2M520 461.5h3M551 461.5h2M555 461.5h2M559 461.5h3M565 461.5h1M569 461.5h2M575 461.5h1M582 461.5h1M593 461.5h1M597 461.5h5M603 461.5h3M607 461.5h1M609 461.5h3M614 461.5h2M617 461.5h2M620 461.5h2M626 461.5h2M632 461.5h1M740 461.5h1M772 461.5h1M774 461.5h1M780 461.5h1M787 461.5h1M791 461.5h1M795 461.5h2M798 461.5h2M805 461.5h1M399 462.5h1M401 462.5h1M406 462.5h1M409 462.5h2M416 462.5h1M435 462.5h1M439 462.5h2M445 462.5h1M448 462.5h1M462 462.5h1M509 462.5h2M512 462.5h1M514 462.5h1M517 462.5h1M519 462.5h1M521 462.5h2M524 462.5h2M528 462.5h1M531 462.5h1M553 462.5h1M556 462.5h1M559 462.5h1M562 462.5h1M566 462.5h1M570 462.5h1M573 462.5h5M579 462.5h5M586 462.5h1M590 462.5h3M594 462.5h1M596 462.5h1M599 462.5h4M607 462.5h5M616 462.5h1M618 462.5h2M621 462.5h3M628 462.5h1M630 462.5h1M782 462.5h1M789 462.5h1M799 462.5h2M802 462.5h1M399 463.5h1M401 463.5h1M403 463.5h2M407 463.5h1M411 463.5h1M423 463.5h1M429 463.5h1M447 463.5h1M469 463.5h1M509 463.5h1M513 463.5h1M515 463.5h1M517 463.5h2M520 463.5h1M523 463.5h2M528 463.5h3M561 463.5h1M563 463.5h1M567 463.5h3M573 463.5h3M581 463.5h5M589 463.5h7M598 463.5h1M601 463.5h5M615 463.5h1M617 463.5h1M619 463.5h2M623 463.5h3M763 463.5h3M770 463.5h1M777 463.5h1M788 463.5h2M795 463.5h1M797 463.5h1M405 464.5h1M407 464.5h1M410 464.5h3M415 464.5h1M421 464.5h1M424 464.5h1M429 464.5h1M439 464.5h2M447 464.5h1M508 464.5h1M513 464.5h1M515 464.5h3M520 464.5h1M522 464.5h2M526 464.5h1M533 464.5h1M556 464.5h1M559 464.5h1M564 464.5h3M568 464.5h11M591 464.5h6M599 464.5h11M618 464.5h4M762 464.5h1M764 464.5h1M772 464.5h1M786 464.5h1M796 464.5h2M402 465.5h1M412 465.5h1M425 465.5h1M430 465.5h1M435 465.5h3M446 465.5h2M508 465.5h4M516 465.5h1M519 465.5h1M526 465.5h2M554 465.5h2M558 465.5h1M560 465.5h1M563 465.5h4M576 465.5h2M582 465.5h1M584 465.5h1M590 465.5h3M594 465.5h1M596 465.5h2M604 465.5h2M609 465.5h9M626 465.5h5M760 465.5h1M762 465.5h6M769 465.5h1M772 465.5h1M776 465.5h2M785 465.5h2M788 465.5h1M792 465.5h1M797 465.5h1M800 465.5h4M416 466.5h1M424 466.5h2M427 466.5h1M434 466.5h1M439 466.5h1M446 466.5h1M448 466.5h1M508 466.5h1M514 466.5h1M516 466.5h1M518 466.5h1M525 466.5h2M529 466.5h2M555 466.5h5M561 466.5h8M575 466.5h1M578 466.5h3M585 466.5h2M588 466.5h5M594 466.5h1M599 466.5h1M602 466.5h2M605 466.5h1M609 466.5h4M614 466.5h1M765 466.5h2M769 466.5h1M787 466.5h2M793 466.5h1M798 466.5h3M413 467.5h1M424 467.5h1M438 467.5h1M442 467.5h2M512 467.5h1M514 467.5h2M517 467.5h1M520 467.5h1M522 467.5h2M528 467.5h1M531 467.5h2M557 467.5h4M562 467.5h7M572 467.5h7M583 467.5h1M585 467.5h10M600 467.5h1M602 467.5h1M604 467.5h1M757 467.5h1M763 467.5h1M767 467.5h1M772 467.5h1M774 467.5h2M777 467.5h2M781 467.5h1M783 467.5h1M792 467.5h1M798 467.5h2M405 468.5h1M410 468.5h1M414 468.5h2M424 468.5h2M431 468.5h1M435 468.5h1M437 468.5h3M512 468.5h2M517 468.5h1M519 468.5h1M521 468.5h1M523 468.5h2M528 468.5h1M530 468.5h2M553 468.5h1M559 468.5h1M564 468.5h1M570 468.5h2M573 468.5h5M580 468.5h5M586 468.5h1M590 468.5h1M593 468.5h7M605 468.5h1M747 468.5h1M750 468.5h1M758 468.5h1M766 468.5h1M772 468.5h2M777 468.5h1M783 468.5h2M794 468.5h1M409 469.5h1M413 469.5h1M417 469.5h1M420 469.5h1M422 469.5h1M427 469.5h1M431 469.5h1M433 469.5h2M505 469.5h2M512 469.5h2M518 469.5h1M520 469.5h1M522 469.5h1M524 469.5h2M531 469.5h1M557 469.5h5M563 469.5h1M565 469.5h3M576 469.5h1M583 469.5h2M589 469.5h5M595 469.5h3M599 469.5h1M749 469.5h1M754 469.5h1M758 469.5h1M762 469.5h2M769 469.5h2M772 469.5h1M774 469.5h1M783 469.5h1M786 469.5h1M789 469.5h2M794 469.5h1M799 469.5h1M408 470.5h2M411 470.5h1M418 470.5h1M424 470.5h1M431 470.5h2M440 470.5h1M513 470.5h1M518 470.5h1M522 470.5h1M556 470.5h2M562 470.5h1M566 470.5h3M573 470.5h4M582 470.5h7M593 470.5h1M596 470.5h2M754 470.5h2M764 470.5h1M767 470.5h2M775 470.5h1M780 470.5h1M784 470.5h1M795 470.5h1M407 471.5h2M412 471.5h1M423 471.5h1M425 471.5h1M428 471.5h1M432 471.5h2M438 471.5h1M514 471.5h1M520 471.5h1M523 471.5h2M526 471.5h1M552 471.5h2M555 471.5h5M561 471.5h1M567 471.5h1M571 471.5h4M576 471.5h1M578 471.5h2M592 471.5h2M600 471.5h1M753 471.5h1M756 471.5h1M758 471.5h1M760 471.5h1M766 471.5h1M769 471.5h1M771 471.5h1M774 471.5h1M784 471.5h1M407 472.5h1M411 472.5h2M420 472.5h1M423 472.5h1M430 472.5h1M441 472.5h1M516 472.5h1M521 472.5h1M524 472.5h3M559 472.5h1M562 472.5h3M567 472.5h2M575 472.5h1M578 472.5h2M582 472.5h4M590 472.5h1M596 472.5h2M750 472.5h1M768 472.5h1M775 472.5h2M414 473.5h1M431 473.5h1M433 473.5h1M515 473.5h1M517 473.5h1M520 473.5h1M522 473.5h1M524 473.5h1M553 473.5h2M556 473.5h1M558 473.5h3M565 473.5h1M567 473.5h7M758 473.5h2M764 473.5h1M766 473.5h1M771 473.5h1M774 473.5h1M782 473.5h2M790 473.5h1M794 473.5h1M797 473.5h1M418 474.5h1M422 474.5h1M424 474.5h3M429 474.5h1M433 474.5h1M514 474.5h1M517 474.5h5M523 474.5h2M561 474.5h1M572 474.5h2M581 474.5h4M749 474.5h3M759 474.5h1M762 474.5h1M766 474.5h1M772 474.5h2M783 474.5h1M788 474.5h1M415 475.5h1M417 475.5h1M422 475.5h1M424 475.5h3M432 475.5h2M521 475.5h2M561 475.5h7M572 475.5h1M749 475.5h1M758 475.5h2M768 475.5h1M771 475.5h2M774 475.5h1M778 475.5h1M783 475.5h1M789 475.5h1M412 476.5h2M418 476.5h1M420 476.5h1M423 476.5h1M435 476.5h1M520 476.5h2M558 476.5h1M565 476.5h2M752 476.5h1M772 476.5h1M774 476.5h1M776 476.5h1M782 476.5h1M785 476.5h1M427 477.5h1M554 477.5h2M561 477.5h2M764 477.5h1M767 477.5h1M769 477.5h1M772 477.5h1M782 477.5h3M416 478.5h2M758 478.5h1M760 478.5h1M765 478.5h2M768 478.5h1M774 478.5h1M784 478.5h1M787 478.5h1M771 479.5h2M775 479.5h1M761 480.5h2M764 480.5h1M768 480.5h1M782 480.5h1M771 482.5h1M524 489.5h1M539 489.5h1M506 490.5h1M521 491.5h1M536 491.5h1M516 492.5h1M533 492.5h1M537 492.5h1M516 493.5h1M528 493.5h1M535 493.5h1M503 494.5h1M507 494.5h1M524 494.5h1M533 494.5h1M507 495.5h1M495 496.5h1M505 496.5h2M516 496.5h1M531 496.5h1M505 497.5h1M520 498.5h1M501 499.5h1" stroke="#fff" stroke-width="1" fill="none" shape-rendering="crispEdges"/>
</g>
<g fill="none" stroke="#dfb886" stroke-width="1" shape-rendering="crispEdges">
<path d="M54.5 335.5L69.4 339.6M54.5 335.5L73.0 333.6M69.4 339.6L85.0 343.9M69.4 339.6L73.0 333.6M69.4 339.6L107.7 337.4M85.0 343.9L99.2 347.8M85.0 343.9L116.4 342.9M85.0 343.9L107.7 337.4M99.2 347.8L111.1 351.1M99.2 347.8L116.4 342.9M99.2 347.8L123.6 347.2M111.1 351.1L124.6 354.8M111.1 351.1L148.3 350.9M111.1 351.1L123.6 347.2M124.6 354.8L138.9 358.7M124.6 354.8L148.3 350.9M138.9 358.7L150.1 361.8M138.9 358.7L173.4 358.7M138.9 358.7L148.3 350.9M150.1 361.8L164.2 365.7M150.1 361.8L173.4 358.7M150.1 361.8L187.4 362.3M164.2 365.7L176.9 369.2M164.2 365.7L187.4 362.3M176.9 369.2L190.6 373.0M176.9 369.2L207.3 367.5M176.9 369.2L187.4 362.3M190.6 373.0L204.7 376.9M190.6 373.0L207.3 367.5M190.6 373.0L216.7 373.2M204.7 376.9L224.8 382.4M204.7 376.9L216.7 373.2M204.7 376.9L229.3 376.8M224.8 382.4L249.3 379.9M224.8 382.4L229.3 376.8M73.0 333.6L93.2 331.6M73.0 333.6L107.7 337.4M249.3 379.9L270.8 377.7M249.3 379.9L229.3 376.8M93.2 331.6L118.3 329.0M93.2 331.6L118.4 333.5M93.2 331.6L107.7 337.4M270.8 377.7L293.6 375.4M270.8 377.7L255.4 371.4M270.8 377.7L229.3 376.8M118.3 329.0L142.4 326.5M118.3 329.0L151.8 332.0M118.3 329.0L118.4 333.5M293.6 375.4L314.0 373.3M293.6 375.4L295.4 369.1M293.6 375.4L255.4 371.4M142.4 326.5L162.8 324.4M142.4 326.5L180.4 329.7M142.4 326.5L151.8 332.0M314.0 373.3L339.7 370.7M314.0 373.3L295.4 369.1M162.8 324.4L186.5 322.0M162.8 324.4L180.4 329.7M339.7 370.7L362.4 368.4M339.7 370.7L295.4 369.1M339.7 370.7L330.8 362.6M339.7 370.7L306.1 364.9M186.5 322.0L211.3 319.5M186.5 322.0L180.4 329.7M186.5 322.0L223.4 326.4M362.4 368.4L390.7 365.5M362.4 368.4L330.8 362.6M362.4 368.4L374.6 360.7M211.3 319.5L233.6 317.2M211.3 319.5L249.4 323.4M211.3 319.5L223.4 326.4M390.7 365.5L414.3 363.1M390.7 365.5L374.6 360.7M233.6 317.2L261.7 314.3M233.6 317.2L249.4 323.4M233.6 317.2L265.4 319.3M414.3 363.1L441.0 360.3M414.3 363.1L398.9 355.8M414.3 363.1L374.6 360.7M261.7 314.3L284.5 312.0M261.7 314.3L305.2 316.5M261.7 314.3L265.4 319.3M441.0 360.3L466.7 357.7M441.0 360.3L450.2 352.5M441.0 360.3L398.9 355.8M284.5 312.0L310.3 309.4M284.5 312.0L305.2 316.5M466.7 357.7L494.8 354.8M466.7 357.7L450.2 352.5M310.3 309.4L337.7 306.6M310.3 309.4L349.4 312.8M310.3 309.4L305.2 316.5M494.8 354.8L519.3 352.3M494.8 354.8L450.2 352.5M494.8 354.8L461.4 346.7M494.8 354.8L493.3 346.3M337.7 306.6L364.7 303.8M337.7 306.6L349.4 312.8M519.3 352.3L544.0 349.8M519.3 352.3L527.0 345.2M519.3 352.3L493.3 346.3M364.7 303.8L393.7 300.9M364.7 303.8L399.2 307.9M364.7 303.8L349.4 312.8M544.0 349.8L574.7 346.7M544.0 349.8L527.0 345.2M393.7 300.9L424.5 297.7M393.7 300.9L399.2 307.9M393.7 300.9L425.5 303.6M574.7 346.7L605.8 343.5M574.7 346.7L527.0 345.2M574.7 346.7L557.0 340.5M424.5 297.7L457.8 294.3M424.5 297.7L467.3 301.2M424.5 297.7L425.5 303.6M605.8 343.5L635.2 340.5M605.8 343.5L616.5 334.8M605.8 343.5L557.0 340.5M605.8 343.5L585.3 337.3M457.8 294.3L484.5 291.6"/>
<path d="M457.8 294.3L467.3 301.2M635.2 340.5L668.5 337.1M635.2 340.5L616.5 334.8M484.5 291.6L515.0 288.5M484.5 291.6L520.2 294.9M484.5 291.6L503.2 302.0M484.5 291.6L467.3 301.2M668.5 337.1L694.4 334.5M668.5 337.1L652.1 330.8M668.5 337.1L616.5 334.8M515.0 288.5L546.1 285.3M515.0 288.5L520.2 294.9M515.0 288.5L558.4 294.2M694.4 334.5L727.1 331.1M694.4 334.5L687.3 326.0M694.4 334.5L652.1 330.8M546.1 285.3L572.9 282.6M546.1 285.3L558.4 294.2M546.1 285.3L572.1 289.0M727.1 331.1L752.7 328.5M727.1 331.1L687.3 326.0M727.1 331.1L731.2 324.0M572.9 282.6L596.7 280.1M572.9 282.6L623.7 285.6M572.9 282.6L572.1 289.0M752.7 328.5L786.3 325.1M752.7 328.5L731.2 324.0M752.7 328.5L763.8 320.9M596.7 280.1L630.3 276.7M596.7 280.1L623.7 285.6M786.3 325.1L816.3 322.0M786.3 325.1L792.8 317.9M786.3 325.1L763.8 320.9M630.3 276.7L656.8 274.0M630.3 276.7L623.7 285.6M630.3 276.7L657.4 279.7M816.3 322.0L845.8 319.0M816.3 322.0L828.1 313.7M816.3 322.0L792.8 317.9M656.8 274.0L683.2 271.3M656.8 274.0L694.0 278.5M656.8 274.0L657.4 279.7M845.8 319.0L878.6 315.7M845.8 319.0L828.1 313.7M683.2 271.3L715.1 268.1M683.2 271.3L694.0 278.5M683.2 271.3L712.1 274.0M878.6 315.7L909.0 312.6M878.6 315.7L854.5 309.6M878.6 315.7L828.1 313.7M715.1 268.1L743.4 265.2M715.1 268.1L759.4 270.4M715.1 268.1L712.1 274.0M909.0 312.6L939.0 309.5M909.0 312.6L893.9 305.3M909.0 312.6L854.5 309.6M909.0 312.6L924.5 305.0M743.4 265.2L770.2 262.4M743.4 265.2L788.4 267.9M743.4 265.2L759.4 270.4M939.0 309.5L961.4 307.2M939.0 309.5L924.5 305.0M770.2 262.4L799.4 259.4M770.2 262.4L788.4 267.9M961.4 307.2L986.3 304.7M961.4 307.2L965.7 299.8M961.4 307.2L924.5 305.0M799.4 259.4L821.0 257.2M799.4 259.4L788.4 267.9M799.4 259.4L824.3 262.9M986.3 304.7L1008.2 302.4M986.3 304.7L992.8 298.1M986.3 304.7L965.7 299.8M821.0 257.2L848.5 254.4M821.0 257.2L870.8 261.1M821.0 257.2L824.3 262.9M1008.2 302.4L1030.7 300.1M1008.2 302.4L992.8 298.1M848.5 254.4L872.4 252.0M848.5 254.4L881.3 256.6M848.5 254.4L870.8 261.1M1030.7 300.1L1052.9 297.9M1030.7 300.1L992.8 298.1M1030.7 300.1L1008.3 293.3M1030.7 300.1L1045.9 293.2M872.4 252.0L893.3 249.9M872.4 252.0L881.3 256.6M872.4 252.0L909.0 255.6M1052.9 297.9L1080.2 295.1M1052.9 297.9L1045.9 293.2M893.3 249.9L918.6 247.3M893.3 249.9L934.0 254.1M893.3 249.9L909.0 255.6M1080.2 295.1L1100.7 293.0M1080.2 295.1L1070.9 289.1M1080.2 295.1L1045.9 293.2M918.6 247.3L945.6 244.5M918.6 247.3L934.0 254.1M918.6 247.3L944.7 250.0M1100.7 293.0L1122.1 290.8M1100.7 293.0L1100.4 285.7M1100.7 293.0L1070.9 289.1M945.6 244.5L966.0 242.4M945.6 244.5L977.5 250.0M945.6 244.5L944.7 250.0M1122.1 290.8L1155.5 287.4M1122.1 290.8L1100.4 285.7M1122.1 290.8L1125.0 286.3M966.0 242.4L985.0 240.5M966.0 242.4L997.3 243.9M966.0 242.4L977.5 250.0M985.0 240.5L997.3 243.9M997.3 243.9L1011.8 247.9M997.3 243.9L977.5 250.0M1011.8 247.9L1026.1 251.8M1011.8 247.9L977.5 250.0M1011.8 247.9L987.3 254.5M1026.1 251.8L1038.1 255.1M1026.1 251.8L1025.4 258.7M1026.1 251.8L987.3 254.5"/>
<path d="M1038.1 255.1L1053.0 259.2M1038.1 255.1L1025.4 258.7M1053.0 259.2L1067.0 263.1M1053.0 259.2L1025.4 258.7M1053.0 259.2L1033.3 265.7M1067.0 263.1L1081.2 267.0M1067.0 263.1L1033.3 265.7M1081.2 267.0L1096.0 271.0M1081.2 267.0L1050.9 271.8M1081.2 267.0L1033.3 265.7M1096.0 271.0L1109.0 274.6M1096.0 271.0L1050.9 271.8M1096.0 271.0L1073.9 274.6M1109.0 274.6L1123.5 278.6M1109.0 274.6L1089.7 278.9M1109.0 274.6L1073.9 274.6M1123.5 278.6L1138.6 282.8M1123.5 278.6L1100.4 285.7M1123.5 278.6L1089.7 278.9M1138.6 282.8L1155.5 287.4M1138.6 282.8L1100.4 285.7M1138.6 282.8L1125.0 286.3M1155.5 287.4L1125.0 286.3M687.3 326.0L652.1 330.8M687.3 326.0L639.1 322.5M687.3 326.0L731.2 324.0M687.3 326.0L659.3 318.0M687.3 326.0L704.1 321.1M691.5 316.1L731.3 317.3M691.5 316.1L727.6 310.0M691.5 316.1L659.3 318.0M691.5 316.1L704.1 321.1M691.5 316.1L677.8 310.8M351.1 347.6L380.9 342.2M351.1 347.6L322.4 343.4M351.1 347.6L355.6 355.2M351.1 347.6L325.1 349.5M351.1 347.6L372.5 351.1M351.1 347.6L350.8 342.3M572.2 304.1L583.6 312.3M572.2 304.1L592.1 295.2M572.2 304.1L558.4 294.2M572.2 304.1L537.6 299.9M572.2 304.1L604.2 307.8M572.2 304.1L536.6 310.7M572.2 304.1L604.0 302.1M583.6 312.3L604.2 307.8M583.6 312.3L616.8 317.4M583.6 312.3L536.6 310.7M583.6 312.3L581.8 317.7M592.1 295.2L558.4 294.2M592.1 295.2L572.1 289.0M592.1 295.2L634.3 292.3M592.1 295.2L623.1 297.8M592.1 295.2L604.0 302.1M810.9 271.9L801.1 280.7M810.9 271.9L788.4 267.9M810.9 271.9L824.1 277.3M810.9 271.9L843.6 271.1M810.9 271.9L768.1 275.2M810.9 271.9L824.3 262.9M511.1 323.0L533.7 330.9M511.1 323.0L467.5 327.0M511.1 323.0L459.1 321.7M511.1 323.0L559.9 322.1M511.1 323.0L520.1 315.6M511.1 323.0L502.7 330.1M511.1 323.0L487.0 318.9M801.1 280.7L824.1 277.3M801.1 280.7L773.0 288.4M801.1 280.7L817.7 287.9M801.1 280.7L768.1 275.2M801.1 280.7L767.4 282.2M801.1 280.7L827.9 283.0M533.7 330.9L509.6 336.8M533.7 330.9L559.9 322.1M533.7 330.9L557.0 340.5M533.7 330.9L564.6 332.7M533.7 330.9L502.7 330.1M973.2 269.0L965.8 276.9M973.2 269.0L1014.0 270.1M973.2 269.0L952.8 264.5M973.2 269.0L942.1 274.6M973.2 269.0L998.4 265.6M973.2 269.0L930.0 267.6M973.2 269.0L992.2 273.1M454.6 307.7L399.2 307.9M454.6 307.7L407.9 313.5M454.6 307.7L493.4 310.5M454.6 307.7L503.2 302.0M454.6 307.7L462.9 314.1M454.6 307.7L467.3 301.2M454.6 307.7L425.5 303.6M399.2 307.9L407.9 313.5M399.2 307.9L349.4 312.8M399.2 307.9L425.5 303.6M467.5 327.0L472.4 333.7M467.5 327.0L430.8 325.3M467.5 327.0L459.1 321.7M467.5 327.0L434.7 333.4M467.5 327.0L502.7 330.1M520.2 294.9L558.4 294.2M520.2 294.9L537.6 299.9M520.2 294.9L503.2 302.0M295.4 369.1L255.4 371.4M295.4 369.1L306.1 364.9M295.4 369.1L272.3 366.4M635.8 303.5L643.9 309.1M635.8 303.5L604.2 307.8M635.8 303.5L695.5 305.7M635.8 303.5L684.2 300.4M635.8 303.5L623.1 297.8M635.8 303.5L654.9 296.7M635.8 303.5L604.0 302.1M934.0 254.1L966.5 257.3M934.0 254.1L944.7 250.0M934.0 254.1L909.0 255.6M934.0 254.1L942.6 260.1M993.3 261.3L966.5 257.3M993.3 261.3L1025.4 258.7"/>
<path d="M993.3 261.3L1033.3 265.7M993.3 261.3L952.8 264.5M993.3 261.3L987.3 254.5M993.3 261.3L998.4 265.6M992.8 298.1L1008.3 293.3M992.8 298.1L969.0 293.8M992.8 298.1L965.7 299.8M893.9 305.3L852.8 302.8M893.9 305.3L854.5 309.6M893.9 305.3L892.0 299.4M893.9 305.3L924.5 305.0M338.7 324.6L330.5 330.9M338.7 324.6L289.6 322.1M338.7 324.6L332.2 319.1M338.7 324.6L372.2 324.3M338.7 324.6L362.7 331.5M338.7 324.6L305.0 326.9M652.1 330.8L616.5 334.8M652.1 330.8L639.1 322.5M652.1 330.8L590.5 327.2M527.0 345.2L509.6 336.8M527.0 345.2L557.0 340.5M527.0 345.2L493.3 346.3M450.2 352.5L398.9 355.8M450.2 352.5L412.7 348.3M450.2 352.5L461.4 346.7M474.6 339.5L472.4 333.7M474.6 339.5L509.6 336.8M474.6 339.5L461.4 346.7M474.6 339.5L443.2 338.8M474.6 339.5L493.3 346.3M731.3 317.3L756.2 312.7M731.3 317.3L727.6 310.0M731.3 317.3L731.2 324.0M731.3 317.3L763.8 320.9M731.3 317.3L704.1 321.1M183.2 334.3L153.5 340.2M183.2 334.3L180.4 329.7M183.2 334.3L140.1 336.3M183.2 334.3L201.8 338.7M183.2 334.3L151.8 332.0M183.2 334.3L213.2 332.0M616.5 334.8L590.5 327.2M616.5 334.8L564.6 332.7M616.5 334.8L585.3 337.3M821.6 298.5L789.9 303.3M821.6 298.5L852.8 302.8M821.6 298.5L765.5 299.4M821.6 298.5L819.5 308.1M821.6 298.5L866.2 296.6M821.6 298.5L779.1 294.1M821.6 298.5L811.2 293.3M237.4 354.9L218.9 362.1M237.4 354.9L199.0 355.5M237.4 354.9L265.0 355.4M237.4 354.9L251.2 363.3M237.4 354.9L215.1 351.2M237.4 354.9L233.0 347.1M237.4 354.9L264.4 350.5M290.8 341.2L285.7 347.5M290.8 341.2L259.7 344.7M290.8 341.2L322.4 343.4M290.8 341.2L305.3 336.2M290.8 341.2L265.2 338.6M558.4 294.2L572.1 289.0M558.4 294.2L537.6 299.9M729.3 287.6L749.1 291.7M729.3 287.6L697.7 293.1M729.3 287.6L773.0 288.4M729.3 287.6L729.5 278.7M729.3 287.6L767.4 282.2M729.3 287.6L694.7 287.8M472.4 333.7L509.6 336.8M472.4 333.7L434.7 333.4M472.4 333.7L443.2 338.8M472.4 333.7L502.7 330.1M272.9 326.4L239.5 330.2M272.9 326.4L295.6 331.6M272.9 326.4L289.6 322.1M272.9 326.4L249.4 323.4M272.9 326.4L268.5 333.9M272.9 326.4L305.0 326.9M285.7 347.5L259.7 344.7M285.7 347.5L322.4 343.4M285.7 347.5L325.1 349.5M285.7 347.5L288.8 352.8M285.7 347.5L264.4 350.5M407.9 313.5L349.4 312.8M407.9 313.5L370.3 317.3M407.9 313.5L462.9 314.1M407.9 313.5L428.8 319.5M407.9 313.5L399.8 321.4M346.4 336.8L380.9 342.2M346.4 336.8L395.4 335.9M346.4 336.8L330.5 330.9M346.4 336.8L322.4 343.4M346.4 336.8L305.3 336.2M346.4 336.8L362.7 331.5M346.4 336.8L350.8 342.3M493.4 310.5L503.2 302.0M493.4 310.5L520.1 315.6M493.4 310.5L462.9 314.1M493.4 310.5L536.6 310.7M493.4 310.5L487.0 318.9M789.9 303.3L788.2 311.5M789.9 303.3L765.5 299.4M789.9 303.3L819.5 308.1M789.9 303.3L759.0 306.9M917.0 262.2L881.3 256.6M917.0 262.2L870.8 261.1M917.0 262.2L952.8 264.5M917.0 262.2L930.0 267.6M917.0 262.2L894.5 266.6M917.0 262.2L909.0 255.6M917.0 262.2L942.6 260.1M643.9 309.1L604.2 307.8M643.9 309.1L695.5 305.7M643.9 309.1L616.8 317.4M643.9 309.1L659.3 318.0M643.9 309.1L677.8 310.8"/>
<path d="M965.8 276.9L991.7 279.5M965.8 276.9L930.4 283.7M965.8 276.9L964.7 284.7M965.8 276.9L942.1 274.6M965.8 276.9L992.2 273.1M218.9 362.1L207.3 367.5M218.9 362.1L199.0 355.5M218.9 362.1L251.2 363.3M218.9 362.1L241.2 367.7M218.9 362.1L187.4 362.3M623.7 285.6L572.1 289.0M623.7 285.6L660.3 285.9M623.7 285.6L634.3 292.3M623.7 285.6L657.4 279.7M788.4 267.9L759.4 270.4M788.4 267.9L768.1 275.2M788.4 267.9L824.3 262.9M966.5 257.3L952.8 264.5M966.5 257.3L977.5 250.0M966.5 257.3L944.7 250.0M966.5 257.3L987.3 254.5M966.5 257.3L942.6 260.1M572.1 289.0L634.3 292.3M153.5 340.2L154.3 345.9M153.5 340.2L140.1 336.3M153.5 340.2L201.8 338.7M153.5 340.2L184.5 343.8M153.5 340.2L116.4 342.9M380.9 342.2L414.5 341.5M380.9 342.2L395.4 335.9M380.9 342.2L412.7 348.3M380.9 342.2L372.5 351.1M380.9 342.2L350.8 342.3M749.1 291.7L730.0 296.7M749.1 291.7L765.5 299.4M749.1 291.7L697.7 293.1M749.1 291.7L773.0 288.4M749.1 291.7L779.1 294.1M414.5 341.5L395.4 335.9M414.5 341.5L412.7 348.3M414.5 341.5L461.4 346.7M414.5 341.5L443.2 338.8M639.1 322.5L590.5 327.2M639.1 322.5L616.8 317.4M639.1 322.5L659.3 318.0M239.5 330.2L230.3 336.2M239.5 330.2L249.4 323.4M239.5 330.2L223.4 326.4M239.5 330.2L268.5 333.9M239.5 330.2L213.2 332.0M590.5 327.2L559.9 322.1M590.5 327.2L616.8 317.4M590.5 327.2L564.6 332.7M590.5 327.2L581.8 317.7M881.3 256.6L870.8 261.1M881.3 256.6L909.0 255.6M824.1 277.3L843.6 271.1M824.1 277.3L855.5 276.8M824.1 277.3L827.9 283.0M694.0 278.5L660.3 285.9M694.0 278.5L729.5 278.7M694.0 278.5L694.7 287.8M694.0 278.5L712.1 274.0M694.0 278.5L657.4 279.7M430.8 325.3L459.1 321.7M430.8 325.3L434.7 333.4M430.8 325.3L407.9 330.2M430.8 325.3L428.8 319.5M430.8 325.3L399.8 321.4M756.2 312.7L788.2 311.5M756.2 312.7L727.6 310.0M756.2 312.7L759.0 306.9M756.2 312.7L792.8 317.9M756.2 312.7L763.8 320.9M537.6 299.9L503.2 302.0M537.6 299.9L536.6 310.7M173.4 358.7L199.0 355.5M173.4 358.7L186.1 350.6M173.4 358.7L148.3 350.9M173.4 358.7L187.4 362.3M730.0 296.7L765.5 299.4M730.0 296.7L697.7 293.1M730.0 296.7L684.2 300.4M730.0 296.7L737.8 302.7M788.2 311.5L819.5 308.1M788.2 311.5L759.0 306.9M788.2 311.5L828.1 313.7M788.2 311.5L792.8 317.9M459.1 321.7L462.9 314.1M459.1 321.7L428.8 319.5M459.1 321.7L487.0 318.9M852.8 302.8L819.5 308.1M852.8 302.8L854.5 309.6M852.8 302.8L866.2 296.6M852.8 302.8L892.0 299.4M1050.9 271.8L1014.0 270.1M1050.9 271.8L1058.1 278.1M1050.9 271.8L1033.3 265.7M1050.9 271.8L1024.8 278.5M1050.9 271.8L1073.9 274.6M230.3 336.2L201.8 338.7M230.3 336.2L268.5 333.9M230.3 336.2L213.2 332.0M230.3 336.2L265.2 338.6M230.3 336.2L237.8 341.1M180.4 329.7L223.4 326.4M180.4 329.7L151.8 332.0M180.4 329.7L213.2 332.0M991.7 279.5L964.7 284.7M991.7 279.5L1024.8 286.0M991.7 279.5L991.9 289.4M991.7 279.5L1024.8 278.5M991.7 279.5L992.2 273.1M765.5 299.4L759.0 306.9M765.5 299.4L737.8 302.7M765.5 299.4L779.1 294.1M899.1 283.2L898.6 277.4M899.1 283.2L930.4 283.7M899.1 283.2L857.9 283.9M899.1 283.2L893.8 288.7"/>
<path d="M398.9 355.8L412.7 348.3M398.9 355.8L374.6 360.7M398.9 355.8L355.6 355.2M398.9 355.8L372.5 351.1M660.3 285.9L697.7 293.1M660.3 285.9L634.3 292.3M660.3 285.9L694.7 287.8M660.3 285.9L657.4 279.7M259.7 344.7L233.0 347.1M259.7 344.7L265.2 338.6M259.7 344.7L237.8 341.1M259.7 344.7L264.4 350.5M697.7 293.1L634.3 292.3M697.7 293.1L684.2 300.4M697.7 293.1L654.9 296.7M697.7 293.1L694.7 287.8M295.6 331.6L330.5 330.9M295.6 331.6L305.3 336.2M295.6 331.6L268.5 333.9M295.6 331.6L305.0 326.9M759.4 270.4L768.1 275.2M759.4 270.4L712.1 274.0M509.6 336.8L557.0 340.5M509.6 336.8L502.7 330.1M509.6 336.8L493.3 346.3M634.3 292.3L623.1 297.8M634.3 292.3L654.9 296.7M773.0 288.4L817.7 287.9M773.0 288.4L767.4 282.2M773.0 288.4L779.1 294.1M773.0 288.4L811.2 293.3M559.9 322.1L520.1 315.6M559.9 322.1L564.6 332.7M559.9 322.1L581.8 317.7M1051.9 286.1L1024.8 286.0M1051.9 286.1L1058.1 278.1M1051.9 286.1L1070.9 289.1M1051.9 286.1L1073.7 283.8M1051.9 286.1L1024.8 278.5M1051.9 286.1L1045.9 293.2M395.4 335.9L434.7 333.4M395.4 335.9L407.9 330.2M395.4 335.9L362.7 331.5M395.4 335.9L443.2 338.8M727.6 310.0L759.0 306.9M727.6 310.0L695.5 305.7M727.6 310.0L737.8 302.7M727.6 310.0L677.8 310.8M843.6 271.1L855.5 276.8M843.6 271.1L856.0 266.1M843.6 271.1L874.1 271.0M843.6 271.1L824.3 262.9M330.8 362.6L374.6 360.7M330.8 362.6L306.1 364.9M330.8 362.6L314.4 355.4M330.8 362.6L355.6 355.2M330.8 362.6L282.1 362.3M855.5 276.8L898.6 277.4M855.5 276.8L874.1 271.0M855.5 276.8L857.9 283.9M855.5 276.8L827.9 283.0M604.2 307.8L616.8 317.4M604.2 307.8L604.0 302.1M940.3 288.1L930.4 283.7M940.3 288.1L964.7 284.7M940.3 288.1L991.9 289.4M940.3 288.1L933.3 294.7M940.3 288.1L969.0 293.8M940.3 288.1L893.8 288.7M1008.3 293.3L1024.8 286.0M1008.3 293.3L991.9 289.4M1008.3 293.3L969.0 293.8M1008.3 293.3L1045.9 293.2M817.7 287.9L811.2 293.3M817.7 287.9L857.9 283.9M817.7 287.9L859.1 289.9M817.7 287.9L827.9 283.0M330.5 330.9L305.3 336.2M330.5 330.9L362.7 331.5M330.5 330.9L305.0 326.9M729.5 278.7L768.1 275.2M729.5 278.7L767.4 282.2M729.5 278.7L694.7 287.8M729.5 278.7L712.1 274.0M154.3 345.9L186.1 350.6M154.3 345.9L148.3 350.9M154.3 345.9L184.5 343.8M154.3 345.9L116.4 342.9M154.3 345.9L123.6 347.2M1014.0 270.1L1033.3 265.7M1014.0 270.1L1024.8 278.5M1014.0 270.1L998.4 265.6M1014.0 270.1L992.2 273.1M503.2 302.0L536.6 310.7M503.2 302.0L467.3 301.2M819.5 308.1L854.5 309.6M819.5 308.1L828.1 313.7M207.3 367.5L216.7 373.2M207.3 367.5L241.2 367.7M207.3 367.5L187.4 362.3M289.6 322.1L332.2 319.1M289.6 322.1L249.4 323.4M289.6 322.1L305.2 316.5M289.6 322.1L305.0 326.9M289.6 322.1L265.4 319.3M412.7 348.3L461.4 346.7M412.7 348.3L372.5 351.1M434.7 333.4L407.9 330.2M434.7 333.4L443.2 338.8M854.5 309.6L828.1 313.7M768.1 275.2L767.4 282.2M768.1 275.2L712.1 274.0M349.4 312.8L332.2 319.1M349.4 312.8L370.3 317.3M349.4 312.8L305.2 316.5M759.0 306.9L737.8 302.7M1100.4 285.7L1070.9 289.1M1100.4 285.7L1089.7 278.9M1100.4 285.7L1073.7 283.8M1100.4 285.7L1125.0 286.3"/>
<path d="M695.5 305.7L684.2 300.4M695.5 305.7L737.8 302.7M695.5 305.7L677.8 310.8M898.6 277.4L930.4 283.7M898.6 277.4L913.5 272.4M898.6 277.4L874.1 271.0M898.6 277.4L942.1 274.6M898.6 277.4L857.9 283.9M374.6 360.7L355.6 355.2M216.7 373.2L255.4 371.4M216.7 373.2L229.3 376.8M216.7 373.2L241.2 367.7M199.0 355.5L186.1 350.6M199.0 355.5L215.1 351.2M199.0 355.5L187.4 362.3M828.1 313.7L792.8 317.9M930.4 283.7L964.7 284.7M930.4 283.7L942.1 274.6M930.4 283.7L893.8 288.7M616.8 317.4L659.3 318.0M616.8 317.4L581.8 317.7M140.1 336.3L116.4 342.9M140.1 336.3L151.8 332.0M140.1 336.3L118.4 333.5M140.1 336.3L107.7 337.4M255.4 371.4L229.3 376.8M255.4 371.4L241.2 367.7M255.4 371.4L272.3 366.4M964.7 284.7L991.9 289.4M332.2 319.1L372.2 324.3M332.2 319.1L370.3 317.3M332.2 319.1L305.2 316.5M684.2 300.4L737.8 302.7M684.2 300.4L654.9 296.7M1024.8 286.0L991.9 289.4M1024.8 286.0L1024.8 278.5M1024.8 286.0L1045.9 293.2M1058.1 278.1L1089.7 278.9M1058.1 278.1L1073.7 283.8M1058.1 278.1L1024.8 278.5M1058.1 278.1L1073.9 274.6M557.0 340.5L564.6 332.7M557.0 340.5L585.3 337.3M926.8 299.8L933.3 294.7M926.8 299.8L895.9 293.7M926.8 299.8L965.7 299.8M926.8 299.8L892.0 299.4M926.8 299.8L924.5 305.0M322.4 343.4L305.3 336.2M322.4 343.4L325.1 349.5M322.4 343.4L350.8 342.3M623.1 297.8L654.9 296.7M623.1 297.8L604.0 302.1M372.2 324.3L370.3 317.3M372.2 324.3L407.9 330.2M372.2 324.3L362.7 331.5M372.2 324.3L399.8 321.4M991.9 289.4L969.0 293.8M1025.4 258.7L1033.3 265.7M1025.4 258.7L987.3 254.5M265.0 355.4L314.4 355.4M265.0 355.4L251.2 363.3M265.0 355.4L282.1 362.3M265.0 355.4L288.8 352.8M265.0 355.4L264.4 350.5M186.1 350.6L148.3 350.9M186.1 350.6L215.1 351.2M186.1 350.6L213.2 343.4M186.1 350.6L184.5 343.8M306.1 364.9L282.1 362.3M306.1 364.9L272.3 366.4M314.4 355.4L355.6 355.2M314.4 355.4L325.1 349.5M314.4 355.4L282.1 362.3M314.4 355.4L288.8 352.8M933.3 294.7L969.0 293.8M933.3 294.7L895.9 293.7M933.3 294.7L965.7 299.8M933.3 294.7L893.8 288.7M251.2 363.3L282.1 362.3M251.2 363.3L241.2 367.7M251.2 363.3L272.3 366.4M1033.3 265.7L998.4 265.6M1070.9 289.1L1073.7 283.8M1070.9 289.1L1045.9 293.2M148.3 350.9L123.6 347.2M866.2 296.6L895.9 293.7M866.2 296.6L811.2 293.3M866.2 296.6L859.1 289.9M866.2 296.6L892.0 299.4M1089.7 278.9L1073.7 283.8M1089.7 278.9L1073.9 274.6M913.5 272.4L874.1 271.0M913.5 272.4L942.1 274.6M913.5 272.4L930.0 267.6M913.5 272.4L894.5 266.6M201.8 338.7L213.2 343.4M201.8 338.7L184.5 343.8M201.8 338.7L213.2 332.0M201.8 338.7L237.8 341.1M856.0 266.1L870.8 261.1M856.0 266.1L874.1 271.0M856.0 266.1L824.3 262.9M856.0 266.1L894.5 266.6M870.8 261.1L824.3 262.9M870.8 261.1L894.5 266.6M520.1 315.6L536.6 310.7M520.1 315.6L487.0 318.9M520.1 315.6L581.8 317.7M215.1 351.2L213.2 343.4M215.1 351.2L233.0 347.1M461.4 346.7L443.2 338.8M461.4 346.7L493.3 346.3M213.2 343.4L184.5 343.8M213.2 343.4L233.0 347.1M213.2 343.4L237.8 341.1M952.8 264.5L998.4 265.6M952.8 264.5L930.0 267.6M952.8 264.5L942.6 260.1M977.5 250.0L944.7 250.0"/>
<path d="M977.5 250.0L987.3 254.5M969.0 293.8L965.7 299.8M895.9 293.7L859.1 289.9M895.9 293.7L892.0 299.4M895.9 293.7L893.8 288.7M370.3 317.3L399.8 321.4M462.9 314.1L428.8 319.5M462.9 314.1L487.0 318.9M731.2 324.0L763.8 320.9M731.2 324.0L704.1 321.1M874.1 271.0L894.5 266.6M407.9 330.2L362.7 331.5M407.9 330.2L399.8 321.4M233.0 347.1L237.8 341.1M233.0 347.1L264.4 350.5M428.8 319.5L399.8 321.4M249.4 323.4L223.4 326.4M249.4 323.4L265.4 319.3M223.4 326.4L213.2 332.0M942.1 274.6L930.0 267.6M779.1 294.1L811.2 293.3M116.4 342.9L107.7 337.4M116.4 342.9L123.6 347.2M1024.8 278.5L992.2 273.1M305.3 336.2L268.5 333.9M305.3 336.2L265.2 338.6M151.8 332.0L118.4 333.5M355.6 355.2L325.1 349.5M355.6 355.2L372.5 351.1M305.2 316.5L265.4 319.3M325.1 349.5L288.8 352.8M965.7 299.8L924.5 305.0M268.5 333.9L265.2 338.6M659.3 318.0L704.1 321.1M659.3 318.0L677.8 310.8M564.6 332.7L585.3 337.3M811.2 293.3L859.1 289.9M536.6 310.7L581.8 317.7M857.9 283.9L859.1 289.9M857.9 283.9L827.9 283.0M857.9 283.9L893.8 288.7M118.4 333.5L107.7 337.4M467.3 301.2L425.5 303.6M282.1 362.3L272.3 366.4M792.8 317.9L763.8 320.9M859.1 289.9L893.8 288.7M892.0 299.4L924.5 305.0M930.0 267.6L894.5 266.6M241.2 367.7L272.3 366.4M909.0 255.6L942.6 260.1M288.8 352.8L264.4 350.5M265.2 338.6L237.8 341.1M54.5 550.6L68.8 554.4M54.5 550.6L72.9 548.7M68.8 554.4L83.3 558.3M68.8 554.4L72.9 548.7M68.8 554.4L111.1 552.7M83.3 558.3L94.8 561.4M83.3 558.3L116.0 558.2M83.3 558.3L111.1 552.7M94.8 561.4L110.3 565.6M94.8 561.4L116.0 558.2M94.8 561.4L128.3 562.7M110.3 565.6L125.5 569.6M110.3 565.6L128.3 562.7M110.3 565.6L142.1 566.1M125.5 569.6L138.4 573.1M125.5 569.6L157.0 569.8M125.5 569.6L142.1 566.1M138.4 573.1L150.3 576.3M138.4 573.1L157.0 569.8M138.4 573.1L176.0 575.1M150.3 576.3L163.7 579.9M150.3 576.3L176.0 575.1M163.7 579.9L176.5 583.3M163.7 579.9L203.3 581.4M163.7 579.9L176.0 575.1M176.5 583.3L189.1 586.7M176.5 583.3L203.3 581.4M189.1 586.7L204.4 590.8M189.1 586.7L203.3 581.4M189.1 586.7L213.8 586.4M204.4 590.8L217.8 594.3M204.4 590.8L232.9 589.0M204.4 590.8L213.8 586.4M217.8 594.3L224.7 596.2M217.8 594.3L248.4 593.8M217.8 594.3L232.9 589.0M224.7 596.2L248.4 593.8M72.9 548.7L91.2 546.9M72.9 548.7L111.1 552.7M248.4 593.8L270.1 591.6M248.4 593.8L232.9 589.0M91.2 546.9L113.9 544.6M91.2 546.9L111.1 552.7M91.2 546.9L124.7 548.8M270.1 591.6L293.0 589.3M270.1 591.6L283.0 585.0M270.1 591.6L249.8 584.7M270.1 591.6L232.9 589.0M113.9 544.6L136.5 542.3M113.9 544.6L149.4 546.4M113.9 544.6L124.7 548.8M293.0 589.3L316.0 587.0M293.0 589.3L283.0 585.0M136.5 542.3L157.3 540.2M136.5 542.3L149.4 546.4M316.0 587.0L337.8 584.8M316.0 587.0L283.0 585.0M316.0 587.0L305.8 581.5M157.3 540.2L179.5 538.0M157.3 540.2L180.3 544.7M157.3 540.2L149.4 546.4M337.8 584.8L361.0 582.4M337.8 584.8L305.8 581.5M337.8 584.8L352.3 577.4M179.5 538.0L204.7 535.4M179.5 538.0L230.5 540.1M179.5 538.0L180.3 544.7M179.5 538.0L212.9 544.4"/>
<path d="M361.0 582.4L385.9 579.9M361.0 582.4L352.3 577.4M204.7 535.4L230.8 532.8M204.7 535.4L230.5 540.1M385.9 579.9L412.2 577.2M385.9 579.9L382.2 574.1M385.9 579.9L352.3 577.4M230.8 532.8L256.7 530.1M230.8 532.8L230.5 540.1M230.8 532.8L252.1 536.4M412.2 577.2L441.4 574.3M412.2 577.2L382.2 574.1M412.2 577.2L416.6 570.4M256.7 530.1L287.4 527.0M256.7 530.1L281.8 534.7M256.7 530.1L252.1 536.4M441.4 574.3L464.9 571.9M441.4 574.3L446.6 567.0M441.4 574.3L416.6 570.4M287.4 527.0L313.0 524.4M287.4 527.0L332.3 530.0M287.4 527.0L281.8 534.7M464.9 571.9L488.9 569.5M464.9 571.9L446.6 567.0M313.0 524.4L339.2 521.8M313.0 524.4L332.3 530.0M488.9 569.5L519.9 566.3M488.9 569.5L486.7 561.2M488.9 569.5L446.6 567.0M339.2 521.8L364.3 519.2M339.2 521.8L389.5 524.2M339.2 521.8L332.3 530.0M339.2 521.8L379.1 529.3M519.9 566.3L550.2 563.3M519.9 566.3L486.7 561.2M519.9 566.3L517.7 558.7M364.3 519.2L387.8 516.9M364.3 519.2L389.5 524.2M550.2 563.3L579.9 560.3M550.2 563.3L556.2 552.9M550.2 563.3L517.7 558.7M387.8 516.9L420.6 513.5M387.8 516.9L389.5 524.2M387.8 516.9L423.8 518.8M579.9 560.3L613.5 556.9M579.9 560.3L556.2 552.9M579.9 560.3L588.0 550.4M420.6 513.5L454.2 510.1M420.6 513.5L457.7 517.9M420.6 513.5L423.8 518.8M613.5 556.9L646.8 553.5M613.5 556.9L628.1 548.0M613.5 556.9L588.0 550.4M454.2 510.1L487.3 506.8M454.2 510.1L482.0 514.0M454.2 510.1L457.7 517.9M646.8 553.5L677.2 550.4M646.8 553.5L628.1 548.0M487.3 506.8L515.7 503.9M487.3 506.8L482.0 514.0M487.3 506.8L513.6 510.2M677.2 550.4L705.8 547.5M677.2 550.4L661.0 541.5M677.2 550.4L628.1 548.0M515.7 503.9L540.5 501.4M515.7 503.9L544.7 507.6M515.7 503.9L513.6 510.2M705.8 547.5L735.8 544.5M705.8 547.5L661.0 541.5M705.8 547.5L696.4 538.3M540.5 501.4L573.1 498.1M540.5 501.4L544.7 507.6M540.5 501.4L594.3 504.7M735.8 544.5L762.0 541.8M735.8 544.5L756.6 536.5M735.8 544.5L696.4 538.3M573.1 498.1L605.8 494.8M573.1 498.1L594.3 504.7M573.1 498.1L621.1 500.9M762.0 541.8L794.2 538.6M762.0 541.8L756.6 536.5M605.8 494.8L633.1 492.0M605.8 494.8L653.3 496.9M605.8 494.8L621.1 500.9M794.2 538.6L826.5 535.3M794.2 538.6L787.8 533.3M794.2 538.6L756.6 536.5M633.1 492.0L663.0 489.0M633.1 492.0L653.3 496.9M826.5 535.3L855.2 532.4M826.5 535.3L787.8 533.3M826.5 535.3L829.7 528.1M663.0 489.0L695.7 485.7M663.0 489.0L653.3 496.9M663.0 489.0L700.0 492.1M855.2 532.4L884.0 529.5M855.2 532.4L829.7 528.1M695.7 485.7L719.2 483.3M695.7 485.7L700.0 492.1M695.7 485.7L733.5 491.7M884.0 529.5L909.0 526.9M884.0 529.5L842.0 522.1M884.0 529.5L876.0 521.8M884.0 529.5L829.7 528.1M719.2 483.3L742.9 480.9M719.2 483.3L755.6 486.1M719.2 483.3L733.5 491.7M909.0 526.9L940.1 523.8M909.0 526.9L876.0 521.8M909.0 526.9L913.1 521.1M742.9 480.9L774.1 477.8M742.9 480.9L755.6 486.1M940.1 523.8L970.7 520.7M940.1 523.8L927.1 516.6M940.1 523.8L913.1 521.1M774.1 477.8L802.8 474.9M774.1 477.8L795.0 486.5M774.1 477.8L755.6 486.1M774.1 477.8L810.2 481.2M970.7 520.7L995.3 518.2"/>
<path d="M970.7 520.7L927.1 516.6M970.7 520.7L964.3 515.5M802.8 474.9L827.4 472.4M802.8 474.9L831.0 477.1M802.8 474.9L810.2 481.2M995.3 518.2L1019.5 515.8M995.3 518.2L986.4 510.3M995.3 518.2L964.3 515.5M827.4 472.4L854.1 469.7M827.4 472.4L873.8 477.0M827.4 472.4L831.0 477.1M1019.5 515.8L1042.4 513.4M1019.5 515.8L986.4 510.3M1019.5 515.8L1015.2 509.8M854.1 469.7L881.1 466.9M854.1 469.7L873.8 477.0M854.1 469.7L893.0 471.1M1042.4 513.4L1064.3 511.2M1042.4 513.4L1038.7 506.3M1042.4 513.4L1015.2 509.8M881.1 466.9L901.4 464.9M881.1 466.9L893.0 471.1M1064.3 511.2L1088.3 508.8M1064.3 511.2L1038.7 506.3M1064.3 511.2L1066.4 505.5M901.4 464.9L928.2 462.2M901.4 464.9L932.1 466.4M901.4 464.9L893.0 471.1M1088.3 508.8L1108.5 506.8M1088.3 508.8L1066.4 505.5M928.2 462.2L950.1 460.0M928.2 462.2L932.1 466.4M928.2 462.2L954.4 464.4M1108.5 506.8L1133.0 504.3M1108.5 506.8L1099.2 501.7M1108.5 506.8L1066.4 505.5M950.1 460.0L985.3 456.4M950.1 460.0L1000.3 460.4M950.1 460.0L984.2 465.2M950.1 460.0L954.4 464.4M1133.0 504.3L1145.7 499.4M1133.0 504.3L1155.5 502.0M1133.0 504.3L1099.2 501.7M985.3 456.4L1000.3 460.4M1000.3 460.4L1013.8 464.0M1000.3 460.4L984.2 465.2M1013.8 464.0L1026.2 467.4M1013.8 464.0L984.2 465.2M1026.2 467.4L1038.3 470.6M1026.2 467.4L984.2 465.2M1026.2 467.4L985.5 470.9M1026.2 467.4L1006.5 473.7M1038.3 470.6L1049.5 473.6M1038.3 470.6L1006.5 473.7M1049.5 473.6L1064.5 477.6M1049.5 473.6L1008.8 478.2M1049.5 473.6L1006.5 473.7M1049.5 473.6L1037.8 480.9M1064.5 477.6L1079.7 481.7M1064.5 477.6L1037.8 480.9M1079.7 481.7L1093.5 485.4M1079.7 481.7L1037.8 480.9M1079.7 481.7L1063.6 485.4M1093.5 485.4L1106.2 488.8M1093.5 485.4L1087.1 492.5M1093.5 485.4L1059.6 489.5M1093.5 485.4L1063.6 485.4M1106.2 488.8L1121.8 493.0M1106.2 488.8L1087.1 492.5M1121.8 493.0L1133.8 496.2M1121.8 493.0L1087.1 492.5M1121.8 493.0L1094.9 497.3M1133.8 496.2L1145.7 499.4M1133.8 496.2L1099.2 501.7M1133.8 496.2L1094.9 497.3M1145.7 499.4L1155.5 502.0M1145.7 499.4L1099.2 501.7M424.6 537.3L387.3 538.5M424.6 537.3L478.4 540.7M424.6 537.3L417.2 543.2M424.6 537.3L407.5 531.4M424.6 537.3L459.4 535.4M842.0 522.1L876.0 521.8M842.0 522.1L795.2 519.6M842.0 522.1L829.7 528.1M842.0 522.1L860.3 514.1M842.0 522.1L827.3 514.5M842.0 522.1L792.8 525.0M638.1 510.6L600.5 513.4M638.1 510.6L594.3 504.7M638.1 510.6L623.8 519.9M638.1 510.6L664.7 514.0M638.1 510.6L659.8 503.5M638.1 510.6L621.1 500.9M638.1 510.6L694.8 506.5M353.6 543.9L387.3 538.5M353.6 543.9L348.4 551.2M353.6 543.9L305.9 543.3M353.6 543.9L384.2 546.8M353.6 543.9L345.7 534.9M353.6 543.9L317.2 537.7M353.6 543.9L323.1 547.2M518.0 552.0L558.2 545.4M518.0 552.0L556.2 552.9M518.0 552.0L486.5 552.2M518.0 552.0L520.4 542.9M518.0 552.0L517.7 558.7M518.0 552.0L478.4 546.4M387.3 538.5L379.1 529.3M387.3 538.5L384.2 546.8M387.3 538.5L417.2 543.2M387.3 538.5L407.5 531.4M387.3 538.5L345.7 534.9M458.4 529.8L407.5 531.4M458.4 529.8L489.8 521.8M458.4 529.8L431.9 524.1M458.4 529.8L495.5 531.6M458.4 529.8L459.4 535.4M879.1 494.8L845.6 493.5M879.1 494.8L855.6 501.5"/>
<path d="M879.1 494.8L891.1 487.3M879.1 494.8L904.8 497.1M879.1 494.8L904.6 492.4M897.4 503.7L872.4 507.1M897.4 503.7L855.6 501.5M897.4 503.7L918.3 510.2M897.4 503.7L904.8 497.1M897.4 503.7L930.5 505.9M957.1 468.5L984.2 465.2M957.1 468.5L985.5 470.9M957.1 468.5L928.1 473.6M957.1 468.5L932.1 466.4M957.1 468.5L974.6 474.8M957.1 468.5L954.4 464.4M936.0 496.1L977.3 494.8M936.0 496.1L931.6 488.6M936.0 496.1L954.0 502.2M936.0 496.1L904.8 497.1M936.0 496.1L904.6 492.4M530.7 522.4L526.5 515.2M530.7 522.4L489.8 521.8M530.7 522.4L577.3 519.2M530.7 522.4L523.5 528.4M530.7 522.4L560.6 527.2M828.8 505.7L872.4 507.1M828.8 505.7L855.6 501.5M828.8 505.7L860.3 514.1M828.8 505.7L813.1 510.1M828.8 505.7L803.8 502.4M254.9 554.4L216.2 553.6M254.9 554.4L295.3 557.5M254.9 554.4L274.5 548.6M254.9 554.4L248.3 546.2M254.9 554.4L243.2 560.4M254.9 554.4L212.3 558.7M738.5 497.6L729.3 506.1M738.5 497.6L705.6 498.4M738.5 497.6L784.7 493.5M738.5 497.6L773.1 504.1M738.5 497.6L733.5 491.7M738.5 497.6L778.3 498.8M452.0 553.8L403.5 559.5M452.0 553.8L447.8 561.8M452.0 553.8L486.7 561.2M452.0 553.8L486.5 552.2M452.0 553.8L445.2 547.1M452.0 553.8L411.8 550.2M403.5 559.5L447.8 561.8M403.5 559.5L412.8 565.1M403.5 559.5L362.8 561.0M403.5 559.5L411.8 550.2M403.5 559.5L378.7 551.8M403.5 559.5L354.4 555.9M977.3 494.8L993.0 500.3M977.3 494.8L931.6 488.6M977.3 494.8L954.0 502.2M977.3 494.8L981.4 490.3M977.3 494.8L1015.9 495.5M958.5 486.3L983.2 484.0M958.5 486.3L914.3 483.5M958.5 486.3L931.6 488.6M958.5 486.3L981.4 490.3M958.5 486.3L947.0 480.9M195.6 570.5L157.0 569.8M195.6 570.5L239.0 572.8M195.6 570.5L244.7 567.1M195.6 570.5L165.6 564.4M195.6 570.5L207.4 563.9M195.6 570.5L204.2 575.6M195.6 570.5L176.0 575.1M171.2 549.8L180.3 544.7M171.2 549.8L202.8 548.6M171.2 549.8L149.4 546.4M171.2 549.8L189.9 552.9M171.2 549.8L148.7 552.3M171.2 549.8L169.0 555.6M362.1 570.4L322.6 568.1M362.1 570.4L382.2 574.1M362.1 570.4L325.3 575.9M362.1 570.4L387.2 567.9M362.1 570.4L352.3 577.4M362.1 570.4L352.7 566.0M927.1 516.6L918.3 510.2M927.1 516.6L896.0 513.9M927.1 516.6L948.0 511.7M927.1 516.6L913.1 521.1M927.1 516.6L964.3 515.5M984.2 465.2L985.5 470.9M984.2 465.2L954.4 464.4M447.8 561.8L486.7 561.2M447.8 561.8L412.8 565.1M447.8 561.8L446.6 567.0M348.4 551.2L384.2 546.8M348.4 551.2L317.0 552.3M348.4 551.2L378.7 551.8M348.4 551.2L354.4 555.9M348.4 551.2L323.1 547.2M1008.8 478.2L980.6 479.2M1008.8 478.2L983.2 484.0M1008.8 478.2L1013.1 484.7M1008.8 478.2L1006.5 473.7M1008.8 478.2L1037.8 480.9M1008.8 478.2L974.6 474.8M260.8 577.6L234.0 578.5M260.8 577.6L283.0 585.0M260.8 577.6L305.8 581.5M260.8 577.6L239.0 572.8M260.8 577.6L249.8 584.7M260.8 577.6L298.3 577.1M260.8 577.6L265.0 571.8M580.0 538.2L558.2 545.4M580.0 538.2L608.1 541.8M580.0 538.2L546.7 532.1M580.0 538.2L609.7 532.5M580.0 538.2L538.4 537.3M729.3 506.1L705.6 498.4M729.3 506.1L773.1 504.1M729.3 506.1L707.1 511.8M729.3 506.1L694.8 506.5M729.3 506.1L755.8 508.8"/>
<path d="M544.7 507.6L526.5 515.2M544.7 507.6L594.3 504.7M544.7 507.6L513.6 510.2M544.7 507.6L559.5 513.6M486.7 561.2L486.5 552.2M486.7 561.2L517.7 558.7M486.7 561.2L446.6 567.0M980.6 479.2L983.2 484.0M980.6 479.2L947.0 480.9M980.6 479.2L974.6 474.8M412.8 565.1L362.8 561.0M412.8 565.1L387.2 567.9M412.8 565.1L446.6 567.0M412.8 565.1L416.6 570.4M504.7 536.7L478.4 540.7M504.7 536.7L520.4 542.9M504.7 536.7L546.7 532.1M504.7 536.7L495.5 531.6M504.7 536.7L459.4 535.4M504.7 536.7L538.4 537.3M558.2 545.4L608.1 541.8M558.2 545.4L556.2 552.9M558.2 545.4L520.4 542.9M558.2 545.4L588.0 550.4M558.2 545.4L538.4 537.3M629.9 527.5L646.0 535.4M629.9 527.5L596.8 526.0M629.9 527.5L623.8 519.9M629.9 527.5L664.1 530.2M629.9 527.5L658.2 522.8M629.9 527.5L609.7 532.5M216.2 553.6L248.3 546.2M216.2 553.6L202.8 548.6M216.2 553.6L212.3 558.7M216.2 553.6L189.9 552.9M661.0 541.5L608.1 541.8M661.0 541.5L646.0 535.4M661.0 541.5L628.1 548.0M661.0 541.5L696.4 538.3M876.0 521.8L860.3 514.1M876.0 521.8L896.0 513.9M876.0 521.8L913.1 521.1M768.9 528.5L787.8 533.3M768.9 528.5L756.6 536.5M768.9 528.5L733.3 530.9M768.9 528.5L760.3 521.5M768.9 528.5L739.5 525.5M768.9 528.5L792.8 525.0M795.2 519.6L760.3 521.5M795.2 519.6L784.3 512.8M795.2 519.6L827.3 514.5M795.2 519.6L792.8 525.0M116.0 558.2L111.1 552.7M116.0 558.2L139.7 556.4M116.0 558.2L128.3 562.7M608.1 541.8L646.0 535.4M608.1 541.8L628.1 548.0M608.1 541.8L588.0 550.4M608.1 541.8L609.7 532.5M983.2 484.0L1013.1 484.7M983.2 484.0L981.4 490.3M983.2 484.0L947.0 480.9M872.4 507.1L855.6 501.5M872.4 507.1L918.3 510.2M872.4 507.1L860.3 514.1M872.4 507.1L896.0 513.9M322.6 568.1L325.3 575.9M322.6 568.1L285.5 568.1M322.6 568.1L295.8 572.2M322.6 568.1L352.7 566.0M322.6 568.1L309.1 563.8M691.1 533.0L646.0 535.4M691.1 533.0L733.3 530.9M691.1 533.0L696.4 538.3M691.1 533.0L664.1 530.2M691.1 533.0L698.2 527.0M993.0 500.3L1016.1 503.5M993.0 500.3L954.0 502.2M993.0 500.3L1015.9 495.5M993.0 500.3L967.5 506.8M646.0 535.4L696.4 538.3M646.0 535.4L664.1 530.2M646.0 535.4L609.7 532.5M295.3 557.5L274.5 548.6M295.3 557.5L277.0 563.0M295.3 557.5L317.0 552.3M295.3 557.5L321.7 559.6M295.3 557.5L243.2 560.4M295.3 557.5L309.1 563.8M795.0 486.5L837.4 483.2M795.0 486.5L784.7 493.5M795.0 486.5L755.6 486.1M795.0 486.5L811.9 491.0M795.0 486.5L841.5 487.9M795.0 486.5L810.2 481.2M914.3 483.5L931.6 488.6M914.3 483.5L867.0 483.3M914.3 483.5L891.1 487.3M914.3 483.5L915.6 478.7M914.3 483.5L947.0 480.9M230.5 540.1L248.3 546.2M230.5 540.1L265.0 540.8M230.5 540.1L212.9 544.4M230.5 540.1L252.1 536.4M234.0 578.5L239.0 572.8M234.0 578.5L203.3 581.4M234.0 578.5L249.8 584.7M234.0 578.5L204.2 575.6M556.2 552.9L588.0 550.4M556.2 552.9L517.7 558.7M526.5 515.2L489.8 521.8M526.5 515.2L577.3 519.2M526.5 515.2L482.0 514.0M526.5 515.2L513.6 510.2M526.5 515.2L559.5 513.6M389.5 524.2L379.1 529.3M389.5 524.2L407.5 531.4M389.5 524.2L431.9 524.1M389.5 524.2L423.8 518.8M985.5 470.9L1006.5 473.7"/>
<path d="M985.5 470.9L974.6 474.8M274.5 548.6L305.9 543.3M274.5 548.6L248.3 546.2M274.5 548.6L317.0 552.3M274.5 548.6L265.0 540.8M274.5 548.6L323.1 547.2M931.6 488.6L891.1 487.3M931.6 488.6L981.4 490.3M931.6 488.6L904.6 492.4M332.3 530.0L379.1 529.3M332.3 530.0L281.8 534.7M332.3 530.0L345.7 534.9M332.3 530.0L317.2 537.7M382.2 574.1L387.2 567.9M382.2 574.1L352.3 577.4M382.2 574.1L416.6 570.4M596.8 526.0L623.8 519.9M596.8 526.0L577.3 519.2M596.8 526.0L609.7 532.5M596.8 526.0L560.6 527.2M845.6 493.5L855.6 501.5M845.6 493.5L891.1 487.3M845.6 493.5L811.9 491.0M845.6 493.5L812.6 497.3M845.6 493.5L841.5 487.9M928.1 473.6L932.1 466.4M928.1 473.6L893.0 471.1M928.1 473.6L915.6 478.7M928.1 473.6L947.0 480.9M928.1 473.6L974.6 474.8M705.6 498.4L653.3 496.9M705.6 498.4L659.8 503.5M705.6 498.4L700.0 492.1M705.6 498.4L733.5 491.7M705.6 498.4L694.8 506.5M1042.2 497.5L1036.5 491.9M1042.2 497.5L1016.1 503.5M1042.2 497.5L1066.1 501.2M1042.2 497.5L1067.0 495.2M1042.2 497.5L1015.9 495.5M362.8 561.0L321.7 559.6M362.8 561.0L354.4 555.9M362.8 561.0L387.2 567.9M362.8 561.0L352.7 566.0M687.7 517.9L714.7 521.5M687.7 517.9L739.5 516.2M687.7 517.9L707.1 511.8M687.7 517.9L664.7 514.0M687.7 517.9L658.2 522.8M379.1 529.3L407.5 531.4M379.1 529.3L345.7 534.9M787.8 533.3L756.6 536.5M787.8 533.3L829.7 528.1M787.8 533.3L792.8 525.0M486.5 552.2L445.2 547.1M486.5 552.2L517.7 558.7M486.5 552.2L478.4 546.4M756.6 536.5L733.3 530.9M756.6 536.5L696.4 538.3M855.6 501.5L904.8 497.1M855.6 501.5L812.6 497.3M855.6 501.5L803.8 502.4M653.3 496.9L659.8 503.5M653.3 496.9L700.0 492.1M653.3 496.9L621.1 500.9M1036.5 491.9L1037.5 486.2M1036.5 491.9L1059.6 489.5M1036.5 491.9L1067.0 495.2M1036.5 491.9L1015.9 495.5M1036.5 491.9L1015.6 489.4M445.2 547.1L478.4 540.7M445.2 547.1L411.8 550.2M445.2 547.1L417.2 543.2M445.2 547.1L478.4 546.4M1016.1 503.5L1038.7 506.3M1016.1 503.5L986.4 510.3M1016.1 503.5L1066.1 501.2M1016.1 503.5L1015.9 495.5M1016.1 503.5L967.5 506.8M1016.1 503.5L1015.2 509.8M628.1 548.0L588.0 550.4M183.3 560.7L165.6 564.4M183.3 560.7L207.4 563.9M183.3 560.7L212.3 558.7M183.3 560.7L157.3 559.7M183.3 560.7L169.0 555.6M478.4 540.7L520.4 542.9M478.4 540.7L417.2 543.2M478.4 540.7L478.4 546.4M478.4 540.7L459.4 535.4M520.4 542.9L478.4 546.4M520.4 542.9L538.4 537.3M1099.2 501.7L1094.9 497.3M1099.2 501.7L1066.1 501.2M1099.2 501.7L1066.4 505.5M283.0 585.0L305.8 581.5M283.0 585.0L249.8 584.7M305.9 543.3L317.2 537.7M305.9 543.3L265.0 540.8M305.9 543.3L323.1 547.2M714.7 521.5L739.5 516.2M714.7 521.5L760.3 521.5M714.7 521.5L658.2 522.8M714.7 521.5L739.5 525.5M714.7 521.5L698.2 527.0M277.0 563.0L244.7 567.1M277.0 563.0L285.5 568.1M277.0 563.0L243.2 560.4M277.0 563.0L309.1 563.8M867.0 483.3L837.4 483.2M867.0 483.3L891.1 487.3M867.0 483.3L873.8 477.0M867.0 483.3L841.5 487.9M867.0 483.3L915.6 478.7M305.8 581.5L325.3 575.9M305.8 581.5L298.3 577.1M305.8 581.5L352.3 577.4M837.4 483.2L873.8 477.0M837.4 483.2L831.0 477.1M837.4 483.2L841.5 487.9"/>
<path d="M837.4 483.2L810.2 481.2M157.0 569.8L165.6 564.4M157.0 569.8L176.0 575.1M157.0 569.8L142.1 566.1M546.7 532.1L495.5 531.6M546.7 532.1L609.7 532.5M546.7 532.1L538.4 537.3M546.7 532.1L523.5 528.4M546.7 532.1L560.6 527.2M325.3 575.9L295.8 572.2M325.3 575.9L298.3 577.1M325.3 575.9L352.3 577.4M111.1 552.7L139.7 556.4M111.1 552.7L148.7 552.3M111.1 552.7L124.7 548.8M891.1 487.3L841.5 487.9M891.1 487.3L904.6 492.4M239.0 572.8L244.7 567.1M239.0 572.8L204.2 575.6M239.0 572.8L265.0 571.8M784.7 493.5L755.6 486.1M784.7 493.5L811.9 491.0M784.7 493.5L812.6 497.3M784.7 493.5L733.5 491.7M784.7 493.5L778.3 498.8M733.3 530.9L696.4 538.3M733.3 530.9L739.5 525.5M733.3 530.9L698.2 527.0M244.7 567.1L285.5 568.1M244.7 567.1L207.4 563.9M244.7 567.1L243.2 560.4M244.7 567.1L265.0 571.8M411.8 550.2L384.2 546.8M411.8 550.2L417.2 543.2M411.8 550.2L378.7 551.8M739.5 516.2L707.1 511.8M739.5 516.2L760.3 521.5M739.5 516.2L784.3 512.8M739.5 516.2L755.8 508.8M285.5 568.1L295.8 572.2M285.5 568.1L309.1 563.8M285.5 568.1L265.0 571.8M384.2 546.8L417.2 543.2M384.2 546.8L378.7 551.8M755.6 486.1L733.5 491.7M773.1 504.1L784.3 512.8M773.1 504.1L813.1 510.1M773.1 504.1L778.3 498.8M773.1 504.1L755.8 508.8M773.1 504.1L803.8 502.4M407.5 531.4L431.9 524.1M407.5 531.4L459.4 535.4M873.8 477.0L831.0 477.1M873.8 477.0L893.0 471.1M873.8 477.0L915.6 478.7M1087.1 492.5L1094.9 497.3M1087.1 492.5L1059.6 489.5M1087.1 492.5L1067.0 495.2M180.3 544.7L202.8 548.6M180.3 544.7L212.9 544.4M180.3 544.7L149.4 546.4M139.7 556.4L128.3 562.7M139.7 556.4L148.7 552.3M139.7 556.4L157.3 559.7M139.7 556.4L169.0 555.6M203.3 581.4L249.8 584.7M203.3 581.4L204.2 575.6M203.3 581.4L176.0 575.1M203.3 581.4L213.8 586.4M165.6 564.4L128.3 562.7M165.6 564.4L207.4 563.9M165.6 564.4L157.3 559.7M165.6 564.4L142.1 566.1M248.3 546.2L265.0 540.8M248.3 546.2L202.8 548.6M248.3 546.2L212.9 544.4M1038.7 506.3L1066.1 501.2M1038.7 506.3L1015.2 509.8M1038.7 506.3L1066.4 505.5M1094.9 497.3L1066.1 501.2M1094.9 497.3L1067.0 495.2M986.4 510.3L948.0 511.7M986.4 510.3L967.5 506.8M986.4 510.3L1015.2 509.8M986.4 510.3L964.3 515.5M954.0 502.2L904.8 497.1M954.0 502.2L967.5 506.8M954.0 502.2L930.5 505.9M600.5 513.4L594.3 504.7M600.5 513.4L623.8 519.9M600.5 513.4L577.3 519.2M600.5 513.4L559.5 513.6M594.3 504.7L559.5 513.6M594.3 504.7L621.1 500.9M707.1 511.8L664.7 514.0M707.1 511.8L694.8 506.5M707.1 511.8L755.8 508.8M932.1 466.4L893.0 471.1M932.1 466.4L954.4 464.4M918.3 510.2L896.0 513.9M918.3 510.2L948.0 511.7M918.3 510.2L930.5 505.9M829.7 528.1L792.8 525.0M489.8 521.8L482.0 514.0M489.8 521.8L457.7 517.9M489.8 521.8L431.9 524.1M489.8 521.8L495.5 531.6M489.8 521.8L523.5 528.4M317.0 552.3L321.7 559.6M317.0 552.3L354.4 555.9M317.0 552.3L323.1 547.2M623.8 519.9L577.3 519.2M623.8 519.9L664.7 514.0M623.8 519.9L658.2 522.8M1066.1 501.2L1067.0 495.2M1066.1 501.2L1066.4 505.5M1037.5 486.2L1013.1 484.7M1037.5 486.2L1059.6 489.5M1037.5 486.2L1037.8 480.9M1037.5 486.2L1015.6 489.4"/>
<path d="M1037.5 486.2L1063.6 485.4M577.3 519.2L559.5 513.6M577.3 519.2L560.6 527.2M664.1 530.2L658.2 522.8M664.1 530.2L698.2 527.0M904.8 497.1L904.6 492.4M904.8 497.1L930.5 505.9M482.0 514.0L513.6 510.2M482.0 514.0L457.7 517.9M831.0 477.1L810.2 481.2M321.7 559.6L354.4 555.9M321.7 559.6L352.7 566.0M321.7 559.6L309.1 563.8M664.7 514.0L658.2 522.8M664.7 514.0L694.8 506.5M760.3 521.5L784.3 512.8M760.3 521.5L739.5 525.5M760.3 521.5L792.8 525.0M281.8 534.7L317.2 537.7M281.8 534.7L265.0 540.8M281.8 534.7L252.1 536.4M784.3 512.8L813.1 510.1M784.3 512.8L827.3 514.5M784.3 512.8L755.8 508.8M345.7 534.9L317.2 537.7M378.7 551.8L354.4 555.9M249.8 584.7L232.9 589.0M249.8 584.7L213.8 586.4M128.3 562.7L157.3 559.7M128.3 562.7L142.1 566.1M317.2 537.7L265.0 540.8M1013.1 484.7L981.4 490.3M1013.1 484.7L1037.8 480.9M1013.1 484.7L1015.6 489.4M981.4 490.3L1015.9 495.5M981.4 490.3L1015.6 489.4M207.4 563.9L243.2 560.4M207.4 563.9L212.3 558.7M1059.6 489.5L1067.0 495.2M1059.6 489.5L1063.6 485.4M659.8 503.5L621.1 500.9M659.8 503.5L694.8 506.5M658.2 522.8L698.2 527.0M700.0 492.1L733.5 491.7M860.3 514.1L896.0 513.9M860.3 514.1L813.1 510.1M860.3 514.1L827.3 514.5M265.0 540.8L252.1 536.4M893.0 471.1L915.6 478.7M202.8 548.6L212.9 544.4M202.8 548.6L189.9 552.9M243.2 560.4L212.3 558.7M212.3 558.7L189.9 552.9M212.3 558.7L169.0 555.6M811.9 491.0L812.6 497.3M811.9 491.0L841.5 487.9M457.7 517.9L431.9 524.1M457.7 517.9L423.8 518.8M896.0 513.9L913.1 521.1M431.9 524.1L423.8 518.8M948.0 511.7L967.5 506.8M948.0 511.7L930.5 505.9M948.0 511.7L964.3 515.5M495.5 531.6L459.4 535.4M495.5 531.6L523.5 528.4M812.6 497.3L778.3 498.8M812.6 497.3L803.8 502.4M204.2 575.6L176.0 575.1M813.1 510.1L827.3 514.5M813.1 510.1L803.8 502.4M387.2 567.9L352.7 566.0M387.2 567.9L416.6 570.4M295.8 572.2L298.3 577.1M295.8 572.2L265.0 571.8M298.3 577.1L265.0 571.8M915.6 478.7L947.0 480.9M739.5 525.5L698.2 527.0M1006.5 473.7L974.6 474.8M609.7 532.5L560.6 527.2M1037.8 480.9L1063.6 485.4M778.3 498.8L803.8 502.4M1015.9 495.5L1015.6 489.4M232.9 589.0L213.8 586.4M149.4 546.4L148.7 552.3M149.4 546.4L124.7 548.8M967.5 506.8L930.5 505.9M446.6 567.0L416.6 570.4M947.0 480.9L974.6 474.8M189.9 552.9L169.0 555.6M352.7 566.0L309.1 563.8M148.7 552.3L124.7 548.8M148.7 552.3L169.0 555.6M523.5 528.4L560.6 527.2M157.3 559.7L169.0 555.6M54.5 335.5L54.5 357.4M54.5 357.4L54.5 379.4M54.5 357.4L73.0 333.6M54.5 357.4L88.8 372.8M54.5 379.4L54.5 400.4M54.5 379.4L88.8 372.8M54.5 400.4L54.5 428.9M54.5 400.4L88.8 372.8M54.5 400.4L77.6 413.4M54.5 428.9L54.5 451.8M54.5 428.9L77.6 413.4M54.5 451.8L54.5 474.5M54.5 451.8L95.6 431.5M54.5 451.8L77.6 413.4M54.5 451.8L86.5 462.8M54.5 474.5L54.5 495.1M54.5 474.5L86.5 462.8M54.5 495.1L54.5 521.2M54.5 495.1L94.5 489.6M54.5 495.1L86.5 462.8M54.5 521.2L54.5 550.6M54.5 521.2L72.9 548.7M54.5 521.2L94.5 489.6M54.5 521.2L102.5 519.5M72.9 548.7L102.5 519.5M73.0 333.6L88.8 372.8"/>
<path d="M91.2 546.9L102.5 519.5M93.2 331.6L88.8 372.8M113.9 544.6L130.6 510.9M113.9 544.6L102.5 519.5M118.3 329.0L88.8 372.8M118.3 329.0L133.0 373.3M136.5 542.3L130.6 510.9M142.4 326.5L165.2 374.4M142.4 326.5L133.0 373.3M157.3 540.2L177.0 483.2M157.3 540.2L130.6 510.9M162.8 324.4L165.2 374.4M179.5 538.0L177.0 483.2M186.5 322.0L165.2 374.4M186.5 322.0L219.1 365.0M204.7 535.4L206.9 478.6M204.7 535.4L177.0 483.2M211.3 319.5L219.1 365.0M230.8 532.8L206.9 478.6M230.8 532.8L247.9 491.8M233.6 317.2L219.1 365.0M256.7 530.1L247.9 491.8M261.7 314.3L268.3 376.8M261.7 314.3L219.1 365.0M284.5 312.0L268.3 376.8M284.5 312.0L316.5 359.2M287.4 527.0L283.9 459.2M287.4 527.0L247.9 491.8M310.3 309.4L316.5 359.2M313.0 524.4L334.7 463.4M313.0 524.4L283.9 459.2M337.7 306.6L376.4 356.8M337.7 306.6L316.5 359.2M339.2 521.8L334.7 463.4M364.3 519.2L334.7 463.4M364.3 519.2L393.6 441.7M364.7 303.8L376.4 356.8M387.8 516.9L393.6 441.7M393.7 300.9L376.4 356.8M420.6 513.5L393.6 441.7M420.6 513.5L455.2 459.9M424.5 297.7L376.4 356.8M424.5 297.7L457.3 342.4M454.2 510.1L455.2 459.9M457.8 294.3L457.3 342.4M484.5 291.6L495.6 362.7M484.5 291.6L457.3 342.4M487.3 506.8L455.2 459.9M487.3 506.8L500.9 459.3M515.0 288.5L495.6 362.7M515.0 288.5L532.3 333.7M515.7 503.9L500.9 459.3M540.5 501.4L545.8 409.3M540.5 501.4L500.9 459.3M546.1 285.3L532.3 333.7M572.9 282.6L579.3 364.4M572.9 282.6L532.3 333.7M573.1 498.1L545.8 409.3M573.1 498.1L603.8 443.7M596.7 280.1L579.3 364.4M596.7 280.1L641.8 322.2M605.8 494.8L603.8 443.7M630.3 276.7L641.8 322.2M633.1 492.0L603.8 443.7M633.1 492.0L646.4 445.3M656.8 274.0L683.9 318.7M656.8 274.0L641.8 322.2M663.0 489.0L646.4 445.3M683.2 271.3L683.9 318.7M695.7 485.7L714.2 412.0M695.7 485.7L646.4 445.3M715.1 268.1L683.9 318.7M715.1 268.1L740.6 317.2M719.2 483.3L714.2 412.0M719.2 483.3L759.6 438.0M742.9 480.9L759.6 438.0M743.4 265.2L740.6 317.2M770.2 262.4L793.1 333.7M770.2 262.4L740.6 317.2M774.1 477.8L759.6 438.0M799.4 259.4L824.2 314.2M799.4 259.4L793.1 333.7M802.8 474.9L816.9 419.0M802.8 474.9L759.6 438.0M821.0 257.2L824.2 314.2M827.4 472.4L816.9 419.0M827.4 472.4L854.7 424.9M848.5 254.4L824.2 314.2M848.5 254.4L866.7 286.2M854.1 469.7L885.0 428.8M854.1 469.7L854.7 424.9M872.4 252.0L866.7 286.2M881.1 466.9L885.0 428.8M893.3 249.9L866.7 286.2M893.3 249.9L904.5 279.9M901.4 464.9L908.5 406.9M901.4 464.9L885.0 428.8M918.6 247.3L904.5 279.9M918.6 247.3L951.4 279.7M928.2 462.2L908.5 406.9M928.2 462.2L942.2 423.6M945.6 244.5L951.4 279.7M950.1 460.0L942.2 423.6M950.1 460.0L964.3 434.7M966.0 242.4L985.0 268.8M966.0 242.4L951.4 279.7M985.0 240.5L985.0 268.8M985.0 268.8L985.1 296.9M985.0 268.8L951.4 279.7M985.1 296.9L985.1 322.6M985.1 296.9L959.9 311.8M985.1 296.9L951.4 279.7M985.1 322.6L985.1 345.5M985.1 322.6L959.9 311.8M985.1 345.5L985.2 367.6M985.1 345.5L959.9 311.8M985.1 345.5L958.6 364.8M985.1 345.5L942.5 336.7M985.2 367.6L985.2 393.6M985.2 367.6L957.9 398.6"/>
<path d="M985.2 367.6L958.6 364.8M985.2 393.6L985.2 417.2M985.2 393.6L957.9 398.6M985.2 417.2L985.3 456.4M985.2 417.2L957.9 398.6M985.2 417.2L964.3 434.7M985.3 456.4L964.3 434.7M824.2 314.2L866.7 286.2M824.2 314.2L793.1 333.7M824.2 314.2L856.4 335.9M824.2 314.2L810.6 374.8M877.8 381.8L908.5 406.9M877.8 381.8L885.0 428.8M877.8 381.8L856.4 335.9M877.8 381.8L932.9 374.9M877.8 381.8L854.7 424.9M877.8 381.8L900.3 342.4M877.8 381.8L842.8 381.4M495.6 362.7L545.8 409.3M495.6 362.7L470.3 410.8M495.6 362.7L457.3 342.4M495.6 362.7L532.3 333.7M268.3 376.8L303.4 407.4M268.3 376.8L316.5 359.2M268.3 376.8L219.1 365.0M268.3 376.8L239.6 402.4M236.4 454.7L283.9 459.2M236.4 454.7L206.9 478.6M236.4 454.7L203.3 413.3M236.4 454.7L239.6 402.4M236.4 454.7L247.9 491.8M165.2 374.4L133.0 373.3M165.2 374.4L160.2 416.1M165.2 374.4L203.3 413.3M165.2 374.4L219.1 365.0M752.0 361.0L714.2 412.0M752.0 361.0L785.1 402.9M752.0 361.0L793.1 333.7M752.0 361.0L740.6 317.2M752.0 361.0L810.6 374.8M752.0 361.0L712.3 349.2M752.0 361.0L759.6 438.0M923.2 318.5L887.2 307.4M923.2 318.5L904.5 279.9M923.2 318.5L959.9 311.8M923.2 318.5L951.4 279.7M923.2 318.5L900.3 342.4M923.2 318.5L942.5 336.7M545.8 409.3L579.3 364.4M545.8 409.3L470.3 410.8M545.8 409.3L603.8 443.7M545.8 409.3L532.3 333.7M545.8 409.3L500.9 459.3M334.7 463.4L283.9 459.2M334.7 463.4L393.6 441.7M334.7 463.4L303.4 407.4M334.7 463.4L342.1 416.9M88.8 372.8L133.0 373.3M88.8 372.8L103.7 398.9M88.8 372.8L77.6 413.4M678.0 387.5L714.2 412.0M678.0 387.5L625.4 368.4M678.0 387.5L683.9 318.7M678.0 387.5L646.4 445.3M678.0 387.5L712.3 349.2M678.0 387.5L641.8 322.2M133.0 373.3L103.7 398.9M133.0 373.3L160.2 416.1M133.0 373.3L128.5 420.5M283.9 459.2L303.4 407.4M283.9 459.2L239.6 402.4M283.9 459.2L247.9 491.8M175.5 445.6L206.9 478.6M175.5 445.6L160.2 416.1M175.5 445.6L177.0 483.2M175.5 445.6L203.3 413.3M175.5 445.6L135.6 476.5M714.2 412.0L646.4 445.3M714.2 412.0L712.3 349.2M714.2 412.0L759.6 438.0M103.7 398.9L95.6 431.5M103.7 398.9L128.5 420.5M103.7 398.9L77.6 413.4M866.7 286.2L887.2 307.4M866.7 286.2L904.5 279.9M866.7 286.2L856.4 335.9M393.6 441.7L376.4 356.8M393.6 441.7L455.2 459.9M393.6 441.7L428.6 404.9M393.6 441.7L342.1 416.9M579.3 364.4L625.4 368.4M579.3 364.4L603.8 443.7M579.3 364.4L532.3 333.7M579.3 364.4L641.8 322.2M625.4 368.4L603.8 443.7M625.4 368.4L646.4 445.3M625.4 368.4L641.8 322.2M470.3 410.8L455.2 459.9M470.3 410.8L428.6 404.9M470.3 410.8L457.3 342.4M470.3 410.8L500.9 459.3M376.4 356.8L316.5 359.2M376.4 356.8L428.6 404.9M376.4 356.8L342.1 416.9M376.4 356.8L457.3 342.4M455.2 459.9L428.6 404.9M455.2 459.9L500.9 459.3M887.2 307.4L904.5 279.9M887.2 307.4L856.4 335.9M887.2 307.4L900.3 342.4M303.4 407.4L316.5 359.2M303.4 407.4L239.6 402.4M303.4 407.4L342.1 416.9M94.5 489.6L135.6 476.5M94.5 489.6L130.6 510.9M94.5 489.6L119.0 451.9M94.5 489.6L102.5 519.5M94.5 489.6L86.5 462.8M683.9 318.7L740.6 317.2M683.9 318.7L712.3 349.2"/>
<path d="M683.9 318.7L641.8 322.2M206.9 478.6L177.0 483.2M206.9 478.6L203.3 413.3M206.9 478.6L247.9 491.8M603.8 443.7L646.4 445.3M160.2 416.1L203.3 413.3M160.2 416.1L135.6 476.5M160.2 416.1L128.5 420.5M160.2 416.1L119.0 451.9M316.5 359.2L342.1 416.9M904.5 279.9L951.4 279.7M177.0 483.2L135.6 476.5M177.0 483.2L130.6 510.9M203.3 413.3L219.1 365.0M203.3 413.3L239.6 402.4M135.6 476.5L130.6 510.9M135.6 476.5L119.0 451.9M908.5 406.9L885.0 428.8M908.5 406.9L932.9 374.9M908.5 406.9L942.2 423.6M785.1 402.9L816.9 419.0M785.1 402.9L810.6 374.8M785.1 402.9L759.6 438.0M816.9 419.0L854.7 424.9M816.9 419.0L810.6 374.8M816.9 419.0L759.6 438.0M816.9 419.0L842.8 381.4M219.1 365.0L239.6 402.4M885.0 428.8L854.7 424.9M95.6 431.5L128.5 420.5M95.6 431.5L77.6 413.4M95.6 431.5L119.0 451.9M95.6 431.5L86.5 462.8M957.9 398.6L958.6 364.8M957.9 398.6L932.9 374.9M957.9 398.6L942.2 423.6M957.9 398.6L964.3 434.7M959.9 311.8L951.4 279.7M959.9 311.8L942.5 336.7M958.6 364.8L932.9 374.9M958.6 364.8L942.5 336.7M428.6 404.9L457.3 342.4M793.1 333.7L740.6 317.2M793.1 333.7L810.6 374.8M128.5 420.5L119.0 451.9M856.4 335.9L900.3 342.4M856.4 335.9L810.6 374.8M856.4 335.9L842.8 381.4M740.6 317.2L712.3 349.2M932.9 374.9L900.3 342.4M932.9 374.9L942.2 423.6M932.9 374.9L942.5 336.7M854.7 424.9L842.8 381.4M900.3 342.4L942.5 336.7M810.6 374.8L842.8 381.4M130.6 510.9L102.5 519.5M942.2 423.6L964.3 434.7M119.0 451.9L86.5 462.8M224.8 382.4L224.8 403.7M224.8 403.7L224.8 433.0M224.8 403.7L249.3 379.9M224.8 403.7L257.8 410.1M224.8 433.0L224.8 455.1M224.8 433.0L257.8 410.1M224.8 433.0L265.1 436.9M224.8 455.1L224.8 480.4M224.8 455.1L261.4 465.5M224.8 455.1L265.1 436.9M224.8 480.4L224.7 508.3M224.8 480.4L261.4 465.5M224.8 480.4L252.2 510.8M224.7 508.3L224.7 537.7M224.7 508.3L252.2 510.8M224.7 537.7L224.7 566.7M224.7 537.7L255.9 563.6M224.7 537.7L252.2 510.8M224.7 537.7L271.2 538.8M224.7 566.7L224.7 596.2M224.7 566.7L248.4 593.8M224.7 566.7L255.9 563.6M248.4 593.8L255.9 563.6M249.3 379.9L257.8 410.1M270.1 591.6L255.9 563.6M270.1 591.6L303.2 557.6M270.8 377.7L288.5 424.2M270.8 377.7L257.8 410.1M293.0 589.3L303.2 557.6M293.6 375.4L288.5 424.2M293.6 375.4L316.6 408.1M314.0 373.3L316.6 408.1M316.0 587.0L303.2 557.6M337.8 584.8L324.1 528.1M337.8 584.8L359.1 547.1M337.8 584.8L303.2 557.6M339.7 370.7L357.2 423.7M339.7 370.7L316.6 408.1M361.0 582.4L359.1 547.1M362.4 368.4L357.2 423.7M385.9 579.9L421.3 537.8M385.9 579.9L359.1 547.1M390.7 365.5L357.2 423.7M390.7 365.5L405.2 405.6M412.2 577.2L421.3 537.8M414.3 363.1L405.2 405.6M414.3 363.1L440.8 411.0M441.0 360.3L440.8 411.0M441.4 574.3L421.3 537.8M441.4 574.3L456.4 523.1M464.9 571.9L456.4 523.1M466.7 357.7L476.3 404.2M466.7 357.7L440.8 411.0M488.9 569.5L486.5 496.9M488.9 569.5L456.4 523.1M494.8 354.8L476.3 404.2M494.8 354.8L521.2 420.2M519.3 352.3L521.2 420.2M519.9 566.3L559.5 500.2M519.9 566.3L486.5 496.9M544.0 349.8L568.6 402.8M544.0 349.8L521.2 420.2"/>
<path d="M550.2 563.3L559.5 500.2M574.7 346.7L568.6 402.8M579.9 560.3L559.5 500.2M579.9 560.3L598.7 511.9M605.8 343.5L568.6 402.8M605.8 343.5L625.3 397.4M613.5 556.9L639.2 488.0M613.5 556.9L598.7 511.9M635.2 340.5L625.3 397.4M646.8 553.5L639.2 488.0M668.5 337.1L708.2 381.7M668.5 337.1L625.3 397.4M677.2 550.4L683.1 473.6M677.2 550.4L639.2 488.0M694.4 334.5L708.2 381.7M705.8 547.5L724.7 483.6M705.8 547.5L683.1 473.6M727.1 331.1L708.2 381.7M735.8 544.5L724.7 483.6M752.7 328.5L790.0 373.0M752.7 328.5L708.2 381.7M752.7 328.5L746.0 415.5M762.0 541.8L724.7 483.6M762.0 541.8L788.9 476.6M786.3 325.1L790.0 373.0M794.2 538.6L788.9 476.6M794.2 538.6L830.1 472.9M816.3 322.0L790.0 373.0M816.3 322.0L856.1 388.5M826.5 535.3L830.1 472.9M845.8 319.0L856.1 388.5M855.2 532.4L865.8 448.1M855.2 532.4L830.1 472.9M878.6 315.7L856.1 388.5M878.6 315.7L907.2 366.0M884.0 529.5L865.8 448.1M884.0 529.5L909.6 461.4M909.0 312.6L907.2 366.0M909.0 312.6L942.7 348.9M909.0 526.9L909.6 461.4M939.0 309.5L942.7 348.9M940.1 523.8L951.5 449.5M940.1 523.8L909.6 461.4M940.1 523.8L973.5 480.0M961.4 307.2L985.7 367.2M961.4 307.2L942.7 348.9M970.7 520.7L973.5 480.0M986.3 304.7L985.7 367.2M986.3 304.7L1008.1 339.1M995.3 518.2L1009.3 462.0M995.3 518.2L973.5 480.0M1008.2 302.4L1008.1 339.1M1019.5 515.8L1009.3 462.0M1019.5 515.8L1042.0 479.9M1030.7 300.1L1043.5 338.2M1030.7 300.1L1008.1 339.1M1042.4 513.4L1042.0 479.9M1052.9 297.9L1043.5 338.2M1052.9 297.9L1074.8 339.0M1064.3 511.2L1042.0 479.9M1064.3 511.2L1072.5 480.6M1080.2 295.1L1074.8 339.0M1088.3 508.8L1104.3 476.5M1088.3 508.8L1072.5 480.6M1100.7 293.0L1074.8 339.0M1100.7 293.0L1129.5 327.3M1100.7 293.0L1102.2 349.4M1108.5 506.8L1104.3 476.5M1108.5 506.8L1130.7 474.8M1122.1 290.8L1155.5 308.6M1122.1 290.8L1129.5 327.3M1133.0 504.3L1130.7 474.8M1155.5 287.4L1155.5 308.6M1155.5 308.6L1155.5 337.7M1155.5 308.6L1129.5 327.3M1155.5 337.7L1155.5 362.8M1155.5 337.7L1129.5 327.3M1155.5 337.7L1132.2 375.0M1155.5 362.8L1155.5 390.8M1155.5 362.8L1132.2 375.0M1155.5 390.8L1155.5 414.5M1155.5 390.8L1129.1 413.9M1155.5 390.8L1132.2 375.0M1155.5 414.5L1155.5 438.9M1155.5 414.5L1129.1 413.9M1155.5 438.9L1155.5 467.3M1155.5 438.9L1119.5 449.7M1155.5 438.9L1129.1 413.9M1155.5 438.9L1130.7 474.8M1155.5 467.3L1155.5 502.0M1155.5 467.3L1130.7 474.8M1155.5 502.0L1130.7 474.8M568.6 402.8L606.5 444.6M568.6 402.8L521.2 420.2M568.6 402.8L625.3 397.4M568.6 402.8L566.4 451.6M353.7 490.5L324.1 528.1M353.7 490.5L396.5 499.4M353.7 490.5L359.1 547.1M353.7 490.5L302.5 496.3M353.7 490.5L372.6 456.8M353.7 490.5L341.4 459.9M1103.7 418.0L1104.3 386.0M1103.7 418.0L1074.4 392.2M1103.7 418.0L1119.5 449.7M1103.7 418.0L1084.6 447.4M1103.7 418.0L1129.1 413.9M1043.5 338.2L1074.8 339.0M1043.5 338.2L1035.6 379.1M1043.5 338.2L1008.1 339.1M985.7 367.2L944.0 391.7M985.7 367.2L1006.1 404.5M985.7 367.2L973.5 418.1M985.7 367.2L942.7 348.9M985.7 367.2L1035.6 379.1M985.7 367.2L1008.1 339.1M1009.3 462.0L1006.1 404.5M1009.3 462.0L1042.0 479.9M1009.3 462.0L1033.0 427.2M1009.3 462.0L973.5 418.1"/>
<path d="M1009.3 462.0L973.5 480.0M1104.3 386.0L1074.4 392.2M1104.3 386.0L1102.2 349.4M1104.3 386.0L1129.1 413.9M1104.3 386.0L1132.2 375.0M790.0 373.0L856.1 388.5M790.0 373.0L746.0 415.5M790.0 373.0L818.4 419.0M295.1 527.0L324.1 528.1M295.1 527.0L252.2 510.8M295.1 527.0L302.5 496.3M295.1 527.0L303.2 557.6M295.1 527.0L271.2 538.8M357.2 423.7L403.0 445.0M357.2 423.7L315.9 444.8M357.2 423.7L405.2 405.6M357.2 423.7L316.6 408.1M357.2 423.7L372.6 456.8M357.2 423.7L341.4 459.9M724.7 483.6L788.9 476.6M724.7 483.6L683.1 473.6M724.7 483.6L746.0 415.5M788.9 476.6L746.0 415.5M788.9 476.6L818.4 419.0M788.9 476.6L830.1 472.9M1074.8 339.0L1074.4 392.2M1074.8 339.0L1102.2 349.4M1074.8 339.0L1035.6 379.1M559.5 500.2L486.5 496.9M559.5 500.2L524.6 467.1M559.5 500.2L566.4 451.6M559.5 500.2L598.7 511.9M865.8 448.1L856.1 388.5M865.8 448.1L911.4 418.3M865.8 448.1L818.4 419.0M865.8 448.1L909.6 461.4M865.8 448.1L830.1 472.9M476.5 455.3L476.3 404.2M476.5 455.3L486.5 496.9M476.5 455.3L521.2 420.2M476.5 455.3L524.6 467.1M476.5 455.3L438.0 481.1M476.5 455.3L440.8 411.0M403.0 445.0L396.5 499.4M403.0 445.0L405.2 405.6M403.0 445.0L438.0 481.1M403.0 445.0L440.8 411.0M403.0 445.0L372.6 456.8M856.1 388.5L911.4 418.3M856.1 388.5L818.4 419.0M856.1 388.5L907.2 366.0M324.1 528.1L359.1 547.1M324.1 528.1L302.5 496.3M324.1 528.1L303.2 557.6M396.5 499.4L421.3 537.8M396.5 499.4L359.1 547.1M396.5 499.4L438.0 481.1M396.5 499.4L372.6 456.8M708.2 381.7L683.1 473.6M708.2 381.7L746.0 415.5M708.2 381.7L648.8 436.5M708.2 381.7L625.3 397.4M944.0 391.7L911.4 418.3M944.0 391.7L951.5 449.5M944.0 391.7L907.2 366.0M944.0 391.7L973.5 418.1M944.0 391.7L942.7 348.9M683.1 473.6L746.0 415.5M683.1 473.6L639.2 488.0M683.1 473.6L648.8 436.5M911.4 418.3L951.5 449.5M911.4 418.3L909.6 461.4M911.4 418.3L907.2 366.0M951.5 449.5L909.6 461.4M951.5 449.5L973.5 418.1M951.5 449.5L973.5 480.0M288.5 424.2L315.9 444.8M288.5 424.2L316.6 408.1M288.5 424.2L257.8 410.1M288.5 424.2L288.8 470.5M288.5 424.2L265.1 436.9M315.9 444.8L302.5 496.3M315.9 444.8L316.6 408.1M315.9 444.8L288.8 470.5M315.9 444.8L341.4 459.9M255.9 563.6L303.2 557.6M255.9 563.6L271.2 538.8M746.0 415.5L818.4 419.0M421.3 537.8L359.1 547.1M421.3 537.8L438.0 481.1M421.3 537.8L456.4 523.1M639.2 488.0L606.5 444.6M639.2 488.0L648.8 436.5M639.2 488.0L598.7 511.9M476.3 404.2L521.2 420.2M476.3 404.2L440.8 411.0M1058.8 441.4L1074.4 392.2M1058.8 441.4L1084.6 447.4M1058.8 441.4L1042.0 479.9M1058.8 441.4L1033.0 427.2M1058.8 441.4L1072.5 480.6M1074.4 392.2L1084.6 447.4M1074.4 392.2L1033.0 427.2M1074.4 392.2L1102.2 349.4M1074.4 392.2L1035.6 379.1M606.5 444.6L648.8 436.5M606.5 444.6L625.3 397.4M606.5 444.6L566.4 451.6M606.5 444.6L598.7 511.9M648.8 436.5L625.3 397.4M1006.1 404.5L1033.0 427.2M1006.1 404.5L973.5 418.1M1006.1 404.5L1035.6 379.1M261.4 465.5L252.2 510.8M261.4 465.5L288.8 470.5M261.4 465.5L265.1 436.9M1129.5 327.3L1102.2 349.4M1129.5 327.3L1132.2 375.0M818.4 419.0L830.1 472.9M252.2 510.8L302.5 496.3"/>
<path d="M252.2 510.8L288.8 470.5M252.2 510.8L271.2 538.8M1119.5 449.7L1084.6 447.4M1119.5 449.7L1104.3 476.5M1119.5 449.7L1129.1 413.9M1119.5 449.7L1130.7 474.8M405.2 405.6L440.8 411.0M907.2 366.0L942.7 348.9M1084.6 447.4L1104.3 476.5M1084.6 447.4L1072.5 480.6M486.5 496.9L524.6 467.1M486.5 496.9L438.0 481.1M486.5 496.9L456.4 523.1M302.5 496.3L288.8 470.5M302.5 496.3L341.4 459.9M521.2 420.2L524.6 467.1M521.2 420.2L566.4 451.6M1104.3 476.5L1130.7 474.8M1104.3 476.5L1072.5 480.6M1042.0 479.9L1033.0 427.2M1042.0 479.9L1072.5 480.6M1033.0 427.2L1035.6 379.1M1102.2 349.4L1132.2 375.0M524.6 467.1L566.4 451.6M973.5 418.1L973.5 480.0M438.0 481.1L440.8 411.0M438.0 481.1L456.4 523.1M1035.6 379.1L1008.1 339.1M303.2 557.6L271.2 538.8M257.8 410.1L265.1 436.9M288.8 470.5L265.1 436.9M1129.1 413.9L1132.2 375.0M372.6 456.8L341.4 459.9M566.4 451.6L598.7 511.9M54.5 357.4L69.4 339.6M54.5 357.4L73.6 392.7M54.5 379.4L73.6 392.7M54.5 400.4L73.6 392.7M54.5 428.9L83.7 437.7M54.5 428.9L73.6 392.7M54.5 451.8L91.5 474.8M54.5 451.8L83.7 437.7M54.5 474.5L91.5 474.8M54.5 474.5L74.4 505.1M54.5 495.1L74.4 505.1M54.5 521.2L68.8 554.4M54.5 521.2L74.4 505.1M68.8 554.4L74.4 505.1M69.4 339.6L73.6 392.7M83.3 558.3L74.4 505.1M83.3 558.3L93.4 514.5M85.0 343.9L92.3 384.8M85.0 343.9L73.6 392.7M94.8 561.4L93.4 514.5M99.2 347.8L92.3 384.8M110.3 565.6L119.9 511.7M110.3 565.6L93.4 514.5M111.1 351.1L111.0 416.8M111.1 351.1L92.3 384.8M111.1 351.1L130.8 395.1M124.6 354.8L130.8 395.1M125.5 569.6L119.9 511.7M138.4 573.1L119.9 511.7M138.4 573.1L150.9 536.6M138.9 358.7L130.8 395.1M150.1 361.8L148.1 416.7M150.1 361.8L130.8 395.1M150.3 576.3L150.9 536.6M163.7 579.9L170.1 520.5M163.7 579.9L150.9 536.6M164.2 365.7L178.1 425.4M164.2 365.7L148.1 416.7M176.5 583.3L170.1 520.5M176.5 583.3L195.7 551.2M176.9 369.2L178.1 425.4M189.1 586.7L195.7 551.2M190.6 373.0L178.1 425.4M190.6 373.0L198.7 435.0M204.4 590.8L224.7 566.7M204.4 590.8L195.7 551.2M204.7 376.9L224.8 403.7M204.7 376.9L198.7 435.0M217.8 594.3L224.7 566.7M224.8 403.7L198.7 435.0M224.8 433.0L198.7 435.0M224.8 455.1L198.7 435.0M224.8 480.4L190.9 467.8M224.8 480.4L198.7 435.0M224.7 508.3L190.9 467.8M224.7 508.3L192.8 509.8M224.7 537.7L192.8 509.8M224.7 537.7L195.7 551.2M224.7 566.7L195.7 551.2M91.5 474.8L83.7 437.7M91.5 474.8L74.4 505.1M91.5 474.8L121.0 463.0M91.5 474.8L119.9 511.7M91.5 474.8L93.4 514.5M190.9 467.8L178.1 425.4M190.9 467.8L159.6 457.8M190.9 467.8L192.8 509.8M190.9 467.8L198.7 435.0M190.9 467.8L175.5 487.7M170.1 520.5L192.8 509.8M170.1 520.5L149.1 490.7M170.1 520.5L150.9 536.6M170.1 520.5L175.5 487.7M170.1 520.5L195.7 551.2M83.7 437.7L111.0 416.8M83.7 437.7L121.0 463.0M83.7 437.7L92.3 384.8M83.7 437.7L73.6 392.7M74.4 505.1L93.4 514.5M178.1 425.4L159.6 457.8M178.1 425.4L148.1 416.7M178.1 425.4L198.7 435.0M111.0 416.8L121.0 463.0M111.0 416.8L92.3 384.8M111.0 416.8L138.9 455.0M111.0 416.8L130.8 395.1"/>
<path d="M159.6 457.8L149.1 490.7M159.6 457.8L148.1 416.7M159.6 457.8L138.9 455.0M159.6 457.8L175.5 487.7M121.0 463.0L149.1 490.7M121.0 463.0L119.9 511.7M121.0 463.0L138.9 455.0M192.8 509.8L175.5 487.7M192.8 509.8L195.7 551.2M149.1 490.7L119.9 511.7M149.1 490.7L138.9 455.0M149.1 490.7L150.9 536.6M149.1 490.7L175.5 487.7M148.1 416.7L138.9 455.0M148.1 416.7L130.8 395.1M119.9 511.7L150.9 536.6M119.9 511.7L93.4 514.5M92.3 384.8L73.6 392.7M138.9 455.0L130.8 395.1M985.0 268.8L997.3 243.9M985.0 268.8L1005.0 289.1M985.1 296.9L1005.0 289.1M985.1 322.6L1013.5 328.9M985.1 322.6L1005.0 289.1M985.1 345.5L1013.5 328.9M985.1 345.5L1008.4 370.7M985.2 367.6L1008.4 370.7M985.2 393.6L1007.1 412.7M985.2 393.6L1008.4 370.7M985.2 417.2L1000.3 460.4M985.2 417.2L1007.1 412.7M997.3 243.9L1005.0 289.1M1000.3 460.4L1007.1 412.7M1011.8 247.9L1026.1 288.1M1011.8 247.9L1005.0 289.1M1013.8 464.0L1007.1 412.7M1026.2 467.4L1007.1 412.7M1026.2 467.4L1034.7 423.6M1026.1 251.8L1026.1 288.1M1038.1 255.1L1026.1 288.1M1038.3 470.6L1034.7 423.6M1049.5 473.6L1056.8 411.1M1049.5 473.6L1034.7 423.6M1053.0 259.2L1062.1 322.0M1053.0 259.2L1026.1 288.1M1064.5 477.6L1056.8 411.1M1064.5 477.6L1074.2 440.8M1067.0 263.1L1062.1 322.0M1067.0 263.1L1080.6 315.6M1079.7 481.7L1074.2 440.8M1081.2 267.0L1080.6 315.6M1093.5 485.4L1105.1 444.0M1093.5 485.4L1074.2 440.8M1096.0 271.0L1112.7 313.6M1096.0 271.0L1080.6 315.6M1106.2 488.8L1105.1 444.0M1109.0 274.6L1112.7 313.6M1121.8 493.0L1127.8 446.3M1121.8 493.0L1105.1 444.0M1123.5 278.6L1127.8 340.2M1123.5 278.6L1112.7 313.6M1133.8 496.2L1127.8 446.3M1138.6 282.8L1155.5 308.6M1138.6 282.8L1127.8 340.2M1145.7 499.4L1155.5 467.3M1145.7 499.4L1127.8 446.3M1155.5 308.6L1127.8 340.2M1155.5 337.7L1127.8 340.2M1155.5 362.8L1127.8 340.2M1155.5 362.8L1136.5 374.8M1155.5 390.8L1136.5 374.8M1155.5 414.5L1119.5 404.4M1155.5 414.5L1127.8 446.3M1155.5 414.5L1136.5 374.8M1155.5 438.9L1127.8 446.3M1155.5 467.3L1127.8 446.3M1087.6 400.9L1119.5 404.4M1087.6 400.9L1105.1 444.0M1087.6 400.9L1069.5 380.0M1087.6 400.9L1074.2 440.8M1087.6 400.9L1081.4 353.8M1087.6 400.9L1101.7 377.1M1027.1 372.5L1037.9 339.1M1027.1 372.5L1013.5 328.9M1027.1 372.5L1007.1 412.7M1027.1 372.5L1034.7 423.6M1027.1 372.5L1008.4 370.7M1027.1 372.5L1048.3 373.0M1119.5 404.4L1127.8 446.3M1119.5 404.4L1105.1 444.0M1119.5 404.4L1101.7 377.1M1119.5 404.4L1136.5 374.8M1056.8 411.1L1069.5 380.0M1056.8 411.1L1074.2 440.8M1056.8 411.1L1034.7 423.6M1056.8 411.1L1048.3 373.0M1127.8 340.2L1099.0 338.8M1127.8 340.2L1112.7 313.6M1127.8 340.2L1101.7 377.1M1127.8 340.2L1136.5 374.8M1062.1 322.0L1069.5 380.0M1062.1 322.0L1037.9 339.1M1062.1 322.0L1026.1 288.1M1062.1 322.0L1081.4 353.8M1062.1 322.0L1080.6 315.6M1062.1 322.0L1048.3 373.0M1127.8 446.3L1105.1 444.0M1105.1 444.0L1074.2 440.8M1069.5 380.0L1074.2 440.8M1069.5 380.0L1081.4 353.8M1069.5 380.0L1048.3 373.0M1099.0 338.8L1081.4 353.8M1099.0 338.8L1112.7 313.6M1099.0 338.8L1080.6 315.6M1099.0 338.8L1101.7 377.1M1037.9 339.1L1026.1 288.1M1037.9 339.1L1013.5 328.9M1037.9 339.1L1048.3 373.0M1026.1 288.1L1013.5 328.9M1026.1 288.1L1005.0 289.1"/>
<path d="M1013.5 328.9L1008.4 370.7M1013.5 328.9L1005.0 289.1M1007.1 412.7L1034.7 423.6M1007.1 412.7L1008.4 370.7M1034.7 423.6L1048.3 373.0M1081.4 353.8L1080.6 315.6M1081.4 353.8L1101.7 377.1M1112.7 313.6L1080.6 315.6M1101.7 377.1L1136.5 374.8"/>
</g>
</svg>
<!-- viewport text -->

<!-- tab bar -->
<div class="abs" id="tabbar"></div>
<div class="abs" id="tabtop0"></div>
<div class="abs" id="tabtop"></div>
<div class="abs" id="tabbot"></div>
<div class="abs" id="appbtn"></div>
<svg class="abs" style="left:14px;top:0" width="24" height="8" viewBox="14 0 24 8"><path d="M16.7 0 C17.5 3.6 21 6.3 26 6 L33 5 C34.6 4.6 35.2 4 35.2 3 V0 Z" fill="#ffa915"/><path d="M16.7 0 C17.5 3.6 21 6.3 26 6 L29 5.6 C25 4.6 22.6 2.6 22 0 Z" fill="#e2a040"/></svg>
<div class="abs" id="ribbon"></div>
<div class="abs" id="tab1"></div>
<svg class="abs" style="left:519px;top:5px" width="28" height="11" viewBox="0 0 28 11"><rect x="1.5" y="1.3" width="14" height="8.2" rx="2.2" fill="#f2f4f8" stroke="#20242c" stroke-width="1"/><path d="M5.6 6.8 L8.5 3.8 L11.4 6.8 Z" fill="#1d222c"/><path d="M19.6 4.8 L25.2 4.8 L22.4 8.2 Z" fill="#f0f0f0"/></svg>

<!-- ribbon -->
<div class="abs" id="ribgrad"></div>
<div class="abs" id="ribline"></div>
<div class="abs" id="ribband"></div>
<div class="ptitle" style="left:11px;width:111px"></div>
<div class="ptitle" style="left:125px;width:86px"></div>
<div class="ptitle" style="left:214px;width:118px"></div>
<div class="ptitle" style="left:335px;width:82px"></div>
<div class="psep" style="left:123px"></div>
<div class="psep" style="left:212px"></div>
<div class="psep" style="left:333px"></div>
<svg class="abs" style="left:250px;top:78px" width="8" height="5" viewBox="0 0 8 5"><path d="M1 1 L6 1 L3.5 4 Z" fill="#222"/></svg>
<div class="tx" id="t0" style="left:62.60px;top:3.84px;font-size:12px;line-height:14px;color:#1c1c1c;letter-spacing:-0.213px">Surface Wrap</div>
<div class="tx" id="t1" style="left:152.90px;top:3.84px;font-size:12px;line-height:14px;color:#f4f4f4;letter-spacing:0.051px">View</div>
<div class="tx" id="t2" style="left:197.30px;top:3.84px;font-size:12px;line-height:14px;color:#f4f4f4;letter-spacing:0.326px">Vault</div>
<div class="tx" id="t3" style="left:244.80px;top:3.84px;font-size:12px;line-height:14px;color:#f4f4f4;letter-spacing:-0.183px">Autodesk 360</div>
<div class="tx" id="t4" style="left:335.70px;top:3.84px;font-size:12px;line-height:14px;color:#f4f4f4;letter-spacing:-0.109px">Start &amp; Learn</div>
<div class="tx" id="t5" style="left:424.80px;top:3.84px;font-size:12px;line-height:14px;color:#f4f4f4;letter-spacing:0.479px">Community</div>
<div class="tx" id="l1a" style="left:14.80px;top:62.24px;font-size:12px;line-height:14px;color:#1c1c1c;letter-spacing:-0.341px">External</div>
<div class="tx" id="l1b" style="left:14.80px;top:77.14px;font-size:12px;line-height:14px;color:#1c1c1c;letter-spacing:0.311px">Volume</div>
<div class="tx" id="l2a" style="left:62.00px;top:62.24px;font-size:12px;line-height:14px;color:#1c1c1c;letter-spacing:-0.080px">Resolution</div>
<div class="tx" id="l2b" style="left:73.80px;top:77.14px;font-size:12px;line-height:14px;color:#1c1c1c;letter-spacing:-0.069px">Factor</div>
<div class="tx" id="l3" style="left:128.70px;top:62.24px;font-size:12px;line-height:14px;color:#1c1c1c;letter-spacing:-0.264px">Generate Wrap</div>
<div class="tx" id="l4" style="left:223.60px;top:62.24px;font-size:12px;line-height:14px;color:#1c1c1c;letter-spacing:-0.199px">Visual Style</div>
<div class="tx" id="l5" style="left:294.70px;top:62.24px;font-size:12px;line-height:14px;color:#1c1c1c;letter-spacing:0.167px">Z-Clip</div>
<div class="tx" id="l6a" style="left:339.20px;top:62.24px;font-size:12px;line-height:14px;color:#1c1c1c;letter-spacing:-0.179px">Transfer Wrap</div>
<div class="tx" id="l6b" style="left:353.50px;top:77.14px;font-size:12px;line-height:14px;color:#1c1c1c;letter-spacing:-0.113px">to Setup</div>
<div class="tx" id="p1" style="left:39.90px;top:98.04px;font-size:12px;line-height:14px;color:#1c1c1c;letter-spacing:0.197px">Configure</div>
<div class="tx" id="p2" style="left:153.90px;top:98.04px;font-size:12px;line-height:14px;color:#1c1c1c;letter-spacing:0.012px">Wrap</div>
<div class="tx" id="p3" style="left:253.20px;top:98.04px;font-size:12px;line-height:14px;color:#1c1c1c;letter-spacing:0.057px">Inspect</div>
<div class="tx" id="p4" style="left:350.80px;top:98.04px;font-size:12px;line-height:14px;color:#1c1c1c;letter-spacing:0.219px">Continue</div>
<div class="tx" id="vt1" style="left:15.60px;top:126.53px;font-size:21px;line-height:24px;color:#0c0c0c;letter-spacing:0.110px;-webkit-text-stroke:0.3px #0c0c0c">External volume :-5.93728, 4.06272, -1.5, 1.5, -0.429962, 1.57004</div>
<div class="tx" id="vt2" style="left:15.60px;top:159.13px;font-size:21px;line-height:24px;color:#0c0c0c;letter-spacing:0.062px;-webkit-text-stroke:0.3px #0c0c0c">Resolution factor: 1088</div>
<div class="tx" id="vt3" style="left:15.60px;top:191.73px;font-size:21px;line-height:24px;color:#0c0c0c;letter-spacing:0.007px;-webkit-text-stroke:0.3px #0c0c0c">Surface element count: 36090</div>
<svg class="abs" id="icons" style="left:0;top:20px" width="430" height="40" viewBox="0 20 430 40">
<defs>
<linearGradient id="gR" x1="0" y1="0" x2="1" y2="1"><stop offset="0" stop-color="#e9ebee"/><stop offset="1" stop-color="#8f99a6"/></linearGradient>
<linearGradient id="gF" x1="0" y1="0" x2="0" y2="1"><stop offset="0" stop-color="#d9dce1"/><stop offset="1" stop-color="#e6e8eb"/></linearGradient>
<linearGradient id="gBlueR" x1="0" y1="0" x2="1" y2="1"><stop offset="0" stop-color="#8fbdea"/><stop offset="1" stop-color="#3f88d2"/></linearGradient>
<linearGradient id="gChk" x1="0" y1="0" x2="0" y2="1"><stop offset="0" stop-color="#cdd2da"/><stop offset="1" stop-color="#f6f7f9"/></linearGradient>
<linearGradient id="gBowlTop" x1="0" y1="0" x2="0" y2="1"><stop offset="0" stop-color="#c3c6cb"/><stop offset="1" stop-color="#f2f2f3"/></linearGradient>
<linearGradient id="gBowl" x1="0" y1="0" x2="0" y2="1"><stop offset="0" stop-color="#fafafa"/><stop offset="1" stop-color="#c9ccd1"/></linearGradient>
<linearGradient id="gArr" x1="0" y1="0" x2="0" y2="1"><stop offset="0" stop-color="#7fd4f2"/><stop offset="0.25" stop-color="#19a7e0"/><stop offset="1" stop-color="#0e8fd0"/></linearGradient>
<radialGradient id="gStar"><stop offset="0" stop-color="#fff"/><stop offset="0.3" stop-color="#fff36a"/><stop offset="0.7" stop-color="#ffc21a" stop-opacity="0.9"/><stop offset="1" stop-color="#ffb000" stop-opacity="0"/></radialGradient>
</defs>
<!-- External Volume -->
<g>
<path d="M20.4 34.2 L28.3 26.2 H49.7 V47.2 L41.8 55.4 H20.4 Z" fill="#a9cef2"/>
<path d="M41.8 34.2 L49.7 26.2 V47.2 L41.8 55.4 Z" fill="url(#gBlueR)"/>
<path d="M20.4 34.2 L28.3 26.2 H49.7 L41.8 34.2 Z" fill="#b9d8f5"/>
<path d="M20.4 55.4 L28.3 47.5 H49.5 L41.8 55.4 Z" fill="#8dbdeb" opacity="0.8"/>
<path d="M28.3 26.6 V47.4 M28.3 47.4 H49.3 M28.3 47.4 L20.8 55" stroke="#d3e6f8" stroke-width="0.8" fill="none"/>
<path d="M20.4 34.2 L28.3 26.2 H49.7 V47.2 L41.8 55.4 H20.4 Z M20.4 34.2 H41.8 V55.4 M41.8 34.2 L49.7 26.2" fill="none" stroke="#2f7fd3" stroke-width="1.2" stroke-linejoin="round"/>
<path d="M25.4 37.4 L31.2 31.3 H44.4 L39.1 37.4 Z" fill="#fdfdfd"/>
<path d="M39.1 37.4 L44.4 31.3 V44.8 L39.1 50.8 Z" fill="url(#gR)"/>
<rect x="25.4" y="37.4" width="13.7" height="13.4" fill="url(#gF)"/>
<path d="M31.2 31.3 H44.4 M44.4 31.3 V44.8 L39.1 50.8" stroke="#6b7480" stroke-width="1" fill="none"/>
<path d="M31.2 31.3 L25.4 37.4 V50.8 H39.1" stroke="#2b2f36" stroke-width="1.3" fill="none" stroke-linejoin="round"/>
<path d="M26.4 38.2 H39.2 V50" stroke="#fff" stroke-width="0.9" fill="none"/>
</g>
<!-- Resolution Factor -->
<g>
<path d="M75.4 34.2 L83 26.4 H102.7 V45 L94.2 53.6 H75.4 Z" fill="#f4f5f6"/>
<rect x="75.4" y="34.2" width="18.8" height="19.3" fill="#dde1e6"/>
<path d="M94.2 34.2 L102.7 26.4 V45 L94.2 53.6 Z" fill="#a9aeb7"/>
<path d="M75.4 34.8L84.8 41.2L94.2 34.8M75.4 41.2L84.8 34.8L94.2 41.2M75.4 41.2L84.8 47.4L94.2 41.2M75.4 47.4L84.8 41.2L94.2 47.4M75.4 47.4L84.8 53.4L94.2 47.4M75.4 53.4L84.8 47.4L94.2 53.4M75.4 41.2H94.2M75.4 47.4H94.2" stroke="#9aa3af" stroke-width="0.8" fill="none"/>
<path d="M80 31 Q85 27.5 90 31 Q85 34 80 31 M90 31 Q95 27.5 100 30 M83 26.6 L79 33 M93 26.6 L89 33.6" stroke="#c6cbd2" stroke-width="0.8" fill="none" stroke-dasharray="2 1"/>
<path d="M95 36 L102 30 M95 42 L102 35 M95 48 L102 41 M96 33 L101 44 M98 30 L98 50" stroke="#8c939d" stroke-width="0.7" fill="none" stroke-dasharray="1.5 1"/>
<path d="M75.4 34.2 L83 26.4 H102.7 V45 M75.4 34.2 V53.6 H89" fill="none" stroke="#30343a" stroke-width="1.15" stroke-linejoin="round"/>
<rect x="89.4" y="49.3" width="15.2" height="6.4" rx="1.6" fill="#fff" stroke="#1d58a6" stroke-width="1.3"/>
<path d="M91.4 52.6 H102.8" stroke="#1d58a6" stroke-width="1"/>
<path d="M93 44.6 H101.6 L97.4 51.3 Z" fill="url(#gArr)" stroke="#0f86c8" stroke-width="0.6"/>
</g>
<!-- Generate Wrap -->
<g>
<path d="M153.3 36 L161 28.4 H180.4 V47.6 L172.6 55.4 H153.3 Z" fill="#f4f5f6"/>
<rect x="153.3" y="36" width="19.3" height="19.4" fill="#dde1e6"/>
<path d="M172.6 36 L180.4 28.4 V47.6 L172.6 55.4 Z" fill="#b9bfc8"/>
<path d="M153.3 36.4L162.9 42.6L172.6 36.4M153.3 42.6L162.9 36.4L172.6 42.6M153.3 42.6L162.9 48.8L172.6 42.6M153.3 48.8L162.9 42.6L172.6 48.8M153.3 48.8L162.9 55.2L172.6 48.8M153.3 55.2L162.9 48.8L172.6 55.2M153.3 42.6H172.6M153.3 48.8H172.6" stroke="#9aa3af" stroke-width="0.8" fill="none"/>
<path d="M160 32.4 Q165 29 170 32.4 Q165 35.4 160 32.4 M162 28.8 L158 35 M170 28.8 L167 35.5" stroke="#c6cbd2" stroke-width="0.8" fill="none" stroke-dasharray="2 1"/>
<path d="M173.4 40 L180 34 M173.4 46 L180 39.6 M173.4 52 L180 45 M174.6 38 L179 47 M176.6 35 V51" stroke="#8c939d" stroke-width="0.7" fill="none" stroke-dasharray="1.5 1"/>
<path d="M153.3 36 L161 28.4 H180.4 V47.6 L172.6 55.4 H153.3 Z" fill="none" stroke="#30343a" stroke-width="1.15" stroke-linejoin="round"/>
<circle cx="176.4" cy="32.5" r="5.4" fill="url(#gStar)"/>
<path d="M176.4 26 L177.1 30.8 L180.9 28 L178.1 31.8 L182.9 32.5 L178.1 33.2 L180.9 37 L177.1 34.2 L176.4 39 L175.7 34.2 L171.9 37 L174.7 33.2 L169.9 32.5 L174.7 31.8 L171.9 28 L175.7 30.8 Z" fill="#e8231a"/>
<circle cx="176.4" cy="32.5" r="2.2" fill="#ffe54a"/>
<circle cx="176.4" cy="32.5" r="1.4" fill="#fff"/>
</g>
<!-- Visual Style -->
<g>
<path d="M240.4 35.7 L247.6 28.5 H267.7 L260.6 35.7 Z" fill="#fcfcfc"/>
<path d="M260.6 35.7 L267.7 28.5 V48.7 L260.6 55.1 Z" fill="url(#gR)"/>
<rect x="240.4" y="35.7" width="20.2" height="19.4" fill="url(#gF)"/>
<path d="M241.4 36.6 H260.6 V54.4" stroke="#fff" stroke-width="0.9" fill="none"/>
<path d="M240.4 35.7 L247.6 28.5 H267.7 V48.7 L260.6 55.1 H240.4 Z" fill="none" stroke="#2e3238" stroke-width="1.3" stroke-linejoin="round"/>
</g>
<!-- Z-Clip -->
<g>
<path d="M296.2 38.4 C296.2 47 302 53.6 311 53.6 C320 53.6 325.8 47 325.8 38.4 Z" fill="url(#gBowl)"/>
<ellipse cx="311" cy="38.4" rx="14.8" ry="9" fill="url(#gBowlTop)"/>
<path d="M297 41.5 C300 46 305 48 311 48 C317 48 322 46 325 41.5" stroke="#fff" stroke-width="1.2" fill="none"/>
<path d="M296.2 38.4 C296.2 33.4 302.8 29.4 311 29.4 C319.2 29.4 325.8 33.4 325.8 38.4 C325.8 47 320 53.6 311 53.6 C302 53.6 296.2 47 296.2 38.4 Z" fill="none" stroke="#33373e" stroke-width="1.2"/>
</g>
<!-- Transfer Wrap check -->
<path d="M361.2 43.3 L365.4 39.3 L371.5 45.5 L386.6 30.3 L390.7 34.2 L371.5 53.4 Z" fill="url(#gChk)" stroke="#3a3f48" stroke-width="1.1" stroke-linejoin="miter"/>
</svg>

<svg class="abs" id="nav" style="left:1120px;top:130px" width="90" height="330" viewBox="1120 130 90 330">
<defs>
<radialGradient id="gSh"><stop offset="0" stop-color="#9a9a9a" stop-opacity="0.55"/><stop offset="1" stop-color="#bdbdbd" stop-opacity="0"/></radialGradient>
<linearGradient id="gCubeR" x1="0" y1="0" x2="0" y2="1"><stop offset="0" stop-color="#f1f1f1"/><stop offset="1" stop-color="#e6e6e6"/></linearGradient>
</defs>
<!-- view cube -->
<ellipse cx="1160" cy="187.5" rx="36" ry="8" fill="url(#gSh)"/><ellipse cx="1148" cy="187" rx="18" ry="5" fill="url(#gSh)"/>
<path d="M1136.4 144.5 L1154.2 145 V189.6 L1137.2 182.2 Z" fill="#e9e9e9"/>
<path d="M1154.2 145 L1189.3 145.2 L1188.6 183.8 L1154.2 189.6 Z" fill="url(#gCubeR)"/>
<rect x="1150.8" y="155" width="11.2" height="27.4" fill="#dedfe2" opacity="0.8"/>
<path d="M1136.4 144.5 L1154.2 145 L1189.3 145.2 M1154.2 145 V189.6" fill="none" stroke="#c2c2c2" stroke-width="0.9" stroke-dasharray="4 2"/>
<text x="1172.4" y="171.6" font-family="'Liberation Sans',sans-serif" font-weight="bold" font-size="11.6" fill="#9c9c9c" text-anchor="middle" textLength="19.4" lengthAdjust="spacingAndGlyphs">BACK</text>
<text transform="matrix(0.4 0.09 0 1 1139.4 168.6)" font-family="'Liberation Sans',sans-serif" font-weight="bold" font-size="9.4" fill="#a4a4a4">RIGHT</text>
<!-- nav bar -->
<rect x="1170.9" y="218.2" width="33.7" height="235.8" rx="4.5" fill="#f7f7f7" stroke="#c6c6c6" stroke-width="1.3"/>
<rect x="1174" y="343" width="27.9" height="37.7" fill="#e3ecf6"/>
<g fill="none" stroke="#b9b9b9" stroke-width="1.2">
<!-- close -->
<circle cx="1198.1" cy="223.4" r="3.1" fill="#c9c9c9" stroke="none"/>
<path d="M1196.6 221.9 L1199.6 224.9 M1199.6 221.9 L1196.6 224.9" stroke="#f7f7f7" stroke-width="0.9"/>
<!-- steering wheel -->
<path d="M1177.2 247.6 C1177.2 241 1182 237.4 1188.6 237.4 H1199 V247.6 C1199 254.4 1194.4 259.2 1188 259.2 C1181.6 259.2 1177.2 254.4 1177.2 247.6 Z" fill="#f1f1f1"/>
<circle cx="1188.2" cy="247.6" r="6.3" fill="#f9f9f9"/>
<path d="M1183.6 252.2 L1180.6 255.6 M1192.8 252.2 L1195.8 255.6" />
<!-- separator -->
<path d="M1175 274.2 H1201" stroke="#cfcfcf" stroke-width="1"/>
<!-- hand -->
<path d="M1181 296.6 C1178.6 293.6 1176.6 291.8 1177.6 290.6 C1179 289.4 1181 291.2 1183 293.2 L1182.2 284.6 C1182.2 282.6 1184.6 282.6 1184.8 284.6 L1185.6 289.6 L1185.8 282.2 C1186 280.2 1188.4 280.2 1188.6 282.2 L1188.8 289.4 L1190 283 C1190.4 281.2 1192.6 281.6 1192.6 283.4 L1192.2 290.2 L1194 285.8 C1194.8 284.2 1196.8 285 1196.4 286.8 C1195.4 291 1195.6 295.6 1192.6 300.6 C1188.6 302.2 1184.6 301.2 1181 296.6 Z" fill="#f4f4f4"/>
<!-- zoom -->
<path d="M1181.5 308 V317.6 M1176.6 312.9 H1186.3 M1176.6 321.5 H1186.6" stroke-width="1.7"/>
<circle cx="1192.3" cy="321.6" r="4.5" fill="#f2f2f2"/>
<path d="M1195.8 325.2 L1199.4 328.6" stroke-width="2.2" stroke-linecap="round"/>
<!-- orbit (active) -->
<g stroke="#adb6c1" stroke-width="1.1">
<path d="M1183.6 353.7 C1179.6 354.2 1177 355.4 1177 356.9 C1177 358.6 1180.4 359.9 1184 360.3 M1187.6 360.5 C1194 360.6 1199 359 1199 356.9 C1199 355.6 1197.2 354.5 1194.4 353.9"/>
<path d="M1190.4 362 C1189.8 365.4 1189 367.6 1188 367.6 C1185.9 367.6 1184.2 362.8 1184.2 356.9 C1184.2 351 1185.9 346.2 1188 346.2 C1189.4 346.2 1190.6 348.4 1191.2 351.4"/>
<path d="M1185.6 356.6 H1189.8 M1187.7 354.4 V358.8" stroke-width="1"/>
<path d="M1188.4 350.2 L1190.8 352.6 L1192.8 349.8 M1195 352 L1192.8 354.6 L1195.6 356.6" stroke-width="1.4"/>
</g>
<!-- look / camera -->
<rect x="1176.8" y="391" width="22" height="14.4" rx="1" fill="#f4f4f4"/>
<rect x="1180.4" y="395.8" width="14.8" height="6.2" fill="#dcdcdc" stroke-width="1"/>
<path d="M1178.4 391 L1183.6 384.4 V388.6 M1186.6 391 V388 L1192.8 386 V391" stroke-width="1"/>
<!-- circle x -->
<circle cx="1187.6" cy="422.6" r="10.2" fill="#f4f4f4"/>
<path d="M1182 417 L1187.6 421.4 L1193.2 417 Z M1182 428.2 L1187.6 423.8 L1193.2 428.2 Z M1181.8 418.4 L1186.2 422.6 L1181.8 426.8 Z M1193.4 418.4 L1189 422.6 L1193.4 426.8 Z" fill="#c4c4c4" stroke="none"/>
<!-- bottom dot -->
<circle cx="1198.1" cy="447.4" r="3.1" fill="#d0d0d0" stroke="none"/>
<path d="M1196 447.4 H1200.2" stroke="#f4f4f4" stroke-width="1"/>
</g>
<!-- arrows -->
<g fill="#b5b5b5">
<path d="M1186 266.8 H1191 L1188.5 269.6 Z"/>
<path d="M1186 336.8 H1191 L1188.5 339.6 Z"/>
<path d="M1185.8 375.1 H1191.2 L1188.5 378 Z" fill="#aab3be"/>
</g>
</svg>

<!-- window frame -->
<div class="abs" id="bl"></div><div class="abs" id="bl3"></div><div class="abs" id="bl2"></div><div class="abs" id="bl4"></div>
<div class="abs" id="br4"></div><div class="abs" id="br2"></div><div class="abs" id="br"></div><div class="abs" id="br3"></div>
</div>
</body>
</html>
